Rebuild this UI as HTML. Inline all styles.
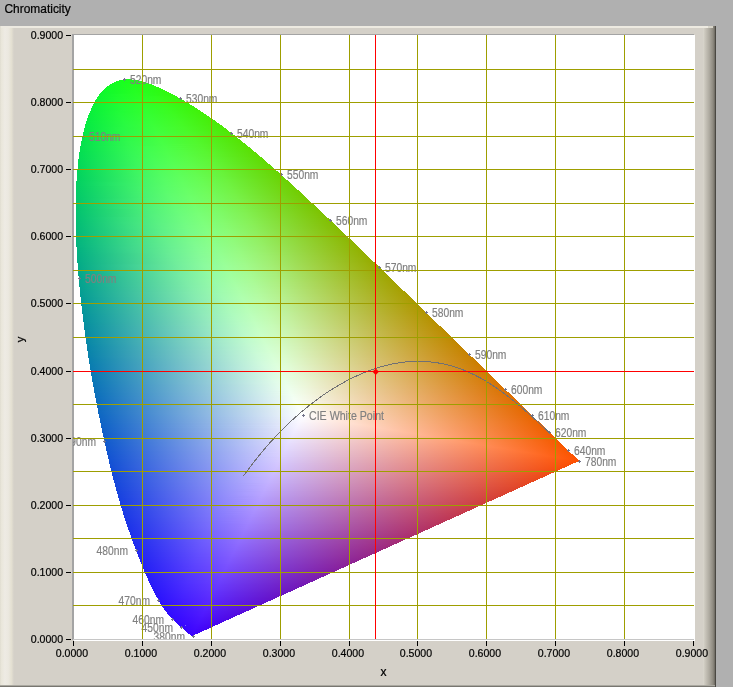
<!DOCTYPE html><html><head><meta charset="utf-8"><title>Chromaticity</title><style>
html,body{margin:0;padding:0}
body{width:733px;height:687px;background:#b0b0b0;overflow:hidden;position:relative;font-family:"Liberation Sans",sans-serif;font-size:11px;color:#000}
.abs{position:absolute}
#title{left:4px;top:1px;font-size:12.6px;line-height:15px;transform:scaleX(0.955);transform-origin:0 0;white-space:nowrap}
#panel{left:0;top:26px;width:716px;height:661px;background:#d4d0c8}
svg{position:absolute;left:0;top:0;will-change:transform}
svg text{font-family:"Liberation Sans",sans-serif;font-size:11.5px}
svg text.lb{font-size:12.2px;stroke:#808080;stroke-width:0.18px}

</style></head><body>
<div id="panel" class="abs"></div>
<svg width="733" height="687" viewBox="0 0 733 687">
<defs><linearGradient id="lg" x1="0" x2="1"><stop offset="0" stop-color="#dfdcd0"/><stop offset="0.1" stop-color="#e9e6da"/><stop offset="0.35" stop-color="#eeebe4"/><stop offset="0.6" stop-color="#ebe8df"/><stop offset="0.82" stop-color="#e4e0d2"/><stop offset="1" stop-color="#d4d0c8"/></linearGradient><linearGradient id="rg" x1="0" x2="1"><stop offset="0" stop-color="#dad7ce"/><stop offset="0.15" stop-color="#ccc8be"/><stop offset="0.5" stop-color="#b0aca2"/><stop offset="0.85" stop-color="#8c887e"/><stop offset="1" stop-color="#6a675f"/></linearGradient></defs>
<rect x="0" y="26" width="14" height="661" fill="url(#lg)"/>
<rect x="703" y="26" width="12" height="661" fill="url(#rg)"/><rect x="715" y="26" width="1" height="661" fill="#4a4842"/>
<rect x="1" y="26" width="707" height="2" fill="#edeae1"/><rect x="708" y="26" width="5" height="2" fill="#d8d5ca"/>
<rect x="0" y="685" width="715" height="1" fill="#aaa8a0"/><rect x="0" y="686" width="715" height="1" fill="#787670"/>
<rect x="72" y="34" width="622" height="607" fill="#a4a4a4"/>
<rect x="74" y="35" width="621" height="606" fill="#fff"/>
<rect x="73" y="639" width="621" height="1" fill="#c6c6c6"/>
<rect x="72" y="640" width="2" height="1" fill="#d4d0c8"/>
<clipPath id="pc"><rect x="73" y="35" width="622" height="604"/></clipPath>
<g clip-path="url(#pc)">
<defs><linearGradient id="g0" gradientUnits="userSpaceOnUse" x1="124" x2="132"><stop offset="0" stop-color="#1aff1c"/><stop offset="1" stop-color="#1eff19"/></linearGradient><linearGradient id="g1" gradientUnits="userSpaceOnUse" x1="119" x2="139"><stop offset="0" stop-color="#17fe1f"/><stop offset="1" stop-color="#21fe16"/></linearGradient><linearGradient id="g2" gradientUnits="userSpaceOnUse" x1="116" x2="143"><stop offset="0" stop-color="#16fe21"/><stop offset="1" stop-color="#23fe15"/></linearGradient><linearGradient id="g3" gradientUnits="userSpaceOnUse" x1="114" x2="146"><stop offset="0" stop-color="#15fe22"/><stop offset="1" stop-color="#25fe14"/></linearGradient><linearGradient id="g4" gradientUnits="userSpaceOnUse" x1="112" x2="149"><stop offset="0" stop-color="#14fd24"/><stop offset="0.541" stop-color="#1fff1d"/><stop offset="1" stop-color="#26fd13"/></linearGradient><linearGradient id="g5" gradientUnits="userSpaceOnUse" x1="110" x2="152"><stop offset="0" stop-color="#13fd25"/><stop offset="0.524" stop-color="#20ff1e"/><stop offset="1" stop-color="#28fd12"/></linearGradient><linearGradient id="g6" gradientUnits="userSpaceOnUse" x1="109" x2="154"><stop offset="0" stop-color="#12fc26"/><stop offset="0.533" stop-color="#21ff1e"/><stop offset="1" stop-color="#29fc12"/></linearGradient><linearGradient id="g7" gradientUnits="userSpaceOnUse" x1="107" x2="156"><stop offset="0" stop-color="#11fc27"/><stop offset="0.51" stop-color="#21ff1f"/><stop offset="1" stop-color="#2afc11"/></linearGradient><linearGradient id="g8" gradientUnits="userSpaceOnUse" x1="106" x2="159"><stop offset="0" stop-color="#11fb28"/><stop offset="0.528" stop-color="#22ff1f"/><stop offset="1" stop-color="#2bfb11"/></linearGradient><linearGradient id="g9" gradientUnits="userSpaceOnUse" x1="105" x2="161"><stop offset="0" stop-color="#10fb29"/><stop offset="0.518" stop-color="#23ff20"/><stop offset="1" stop-color="#2cfb10"/></linearGradient><linearGradient id="g10" gradientUnits="userSpaceOnUse" x1="104" x2="163"><stop offset="0" stop-color="#10fa2a"/><stop offset="0.525" stop-color="#23ff21"/><stop offset="1" stop-color="#2dfa10"/></linearGradient><linearGradient id="g11" gradientUnits="userSpaceOnUse" x1="103" x2="165"><stop offset="0" stop-color="#0ffa2b"/><stop offset="0.516" stop-color="#24ff22"/><stop offset="1" stop-color="#2efa0f"/></linearGradient><linearGradient id="g12" gradientUnits="userSpaceOnUse" x1="102" x2="167"><stop offset="0" stop-color="#0ff92c"/><stop offset="0.508" stop-color="#24ff23"/><stop offset="1" stop-color="#2ff90f"/></linearGradient><linearGradient id="g13" gradientUnits="userSpaceOnUse" x1="101" x2="169"><stop offset="0" stop-color="#0ef92d"/><stop offset="0.515" stop-color="#25ff23"/><stop offset="1" stop-color="#30f90e"/></linearGradient><linearGradient id="g14" gradientUnits="userSpaceOnUse" x1="100" x2="171"><stop offset="0" stop-color="#0ef82e"/><stop offset="0.507" stop-color="#26ff24"/><stop offset="1" stop-color="#31f90e"/></linearGradient><linearGradient id="g15" gradientUnits="userSpaceOnUse" x1="99" x2="173"><stop offset="0" stop-color="#0df82f"/><stop offset="0.284" stop-color="#1dfe2b"/><stop offset="0.514" stop-color="#27ff24"/><stop offset="1" stop-color="#32f80d"/></linearGradient><linearGradient id="g16" gradientUnits="userSpaceOnUse" x1="99" x2="175"><stop offset="0" stop-color="#0df82f"/><stop offset="0.289" stop-color="#1efe2b"/><stop offset="0.513" stop-color="#27ff25"/><stop offset="1" stop-color="#33f80d"/></linearGradient><linearGradient id="g17" gradientUnits="userSpaceOnUse" x1="98" x2="177"><stop offset="0" stop-color="#0df730"/><stop offset="0.291" stop-color="#1efd2c"/><stop offset="0.506" stop-color="#28ff26"/><stop offset="0.747" stop-color="#2ffd1b"/><stop offset="1" stop-color="#34f70d"/></linearGradient><linearGradient id="g18" gradientUnits="userSpaceOnUse" x1="97" x2="178"><stop offset="0" stop-color="#0cf731"/><stop offset="0.247" stop-color="#1cfd2e"/><stop offset="0.506" stop-color="#28ff27"/><stop offset="0.741" stop-color="#30fd1c"/><stop offset="1" stop-color="#35f70d"/></linearGradient><linearGradient id="g19" gradientUnits="userSpaceOnUse" x1="97" x2="180"><stop offset="0" stop-color="#0cf631"/><stop offset="0.241" stop-color="#1cfc2f"/><stop offset="0.506" stop-color="#29ff27"/><stop offset="0.735" stop-color="#31fd1c"/><stop offset="1" stop-color="#36f60c"/></linearGradient><linearGradient id="g20" gradientUnits="userSpaceOnUse" x1="96" x2="182"><stop offset="0" stop-color="#0cf632"/><stop offset="0.256" stop-color="#1dfd2f"/><stop offset="0.5" stop-color="#2aff28"/><stop offset="0.721" stop-color="#31fd1d"/><stop offset="1" stop-color="#37f60c"/></linearGradient><linearGradient id="g21" gradientUnits="userSpaceOnUse" x1="95" x2="184"><stop offset="0" stop-color="#0bf533"/><stop offset="0.258" stop-color="#1dfc30"/><stop offset="0.506" stop-color="#2bff29"/><stop offset="0.719" stop-color="#32fd1e"/><stop offset="1" stop-color="#38f50b"/></linearGradient><linearGradient id="g22" gradientUnits="userSpaceOnUse" x1="95" x2="185"><stop offset="0" stop-color="#0bf534"/><stop offset="0.267" stop-color="#1efd30"/><stop offset="0.5" stop-color="#2bff29"/><stop offset="0.722" stop-color="#33fd1e"/><stop offset="1" stop-color="#39f50b"/></linearGradient><linearGradient id="g23" gradientUnits="userSpaceOnUse" x1="94" x2="187"><stop offset="0" stop-color="#0bf435"/><stop offset="0.269" stop-color="#1efc31"/><stop offset="0.505" stop-color="#2cff2a"/><stop offset="0.71" stop-color="#33fd1f"/><stop offset="1" stop-color="#39f40b"/></linearGradient><linearGradient id="g24" gradientUnits="userSpaceOnUse" x1="94" x2="189"><stop offset="0" stop-color="#0bf435"/><stop offset="0.274" stop-color="#1ffd32"/><stop offset="0.505" stop-color="#2dff2a"/><stop offset="0.737" stop-color="#35fc1d"/><stop offset="1" stop-color="#3af40a"/></linearGradient><linearGradient id="g25" gradientUnits="userSpaceOnUse" x1="93" x2="190"><stop offset="0" stop-color="#0af336"/><stop offset="0.278" stop-color="#20fc33"/><stop offset="0.505" stop-color="#2dff2b"/><stop offset="0.732" stop-color="#36fc1e"/><stop offset="1" stop-color="#3bf40b"/></linearGradient><linearGradient id="g26" gradientUnits="userSpaceOnUse" x1="93" x2="192"><stop offset="0" stop-color="#0af336"/><stop offset="0.283" stop-color="#21fd33"/><stop offset="0.505" stop-color="#2eff2c"/><stop offset="0.727" stop-color="#36fc1f"/><stop offset="1" stop-color="#3cf30a"/></linearGradient><linearGradient id="g27" gradientUnits="userSpaceOnUse" x1="92" x2="194"><stop offset="0" stop-color="#0af237"/><stop offset="0.284" stop-color="#21fc34"/><stop offset="0.5" stop-color="#2fff2d"/><stop offset="0.725" stop-color="#37fc1f"/><stop offset="1" stop-color="#3df20a"/></linearGradient><linearGradient id="g28" gradientUnits="userSpaceOnUse" x1="92" x2="195"><stop offset="0" stop-color="#0af238"/><stop offset="0.291" stop-color="#22fc35"/><stop offset="0.505" stop-color="#2fff2d"/><stop offset="0.718" stop-color="#38fc20"/><stop offset="1" stop-color="#3ef20a"/></linearGradient><linearGradient id="g29" gradientUnits="userSpaceOnUse" x1="91" x2="197"><stop offset="0" stop-color="#09f239"/><stop offset="0.292" stop-color="#22fc35"/><stop offset="0.5" stop-color="#30ff2e"/><stop offset="0.717" stop-color="#39fc21"/><stop offset="1" stop-color="#3ff209"/></linearGradient><linearGradient id="g30" gradientUnits="userSpaceOnUse" x1="91" x2="198"><stop offset="0" stop-color="#09f139"/><stop offset="0.299" stop-color="#23fc36"/><stop offset="0.505" stop-color="#31ff2f"/><stop offset="0.72" stop-color="#39fc21"/><stop offset="1" stop-color="#3ff109"/></linearGradient><linearGradient id="g31" gradientUnits="userSpaceOnUse" x1="91" x2="200"><stop offset="0" stop-color="#09f13a"/><stop offset="0.294" stop-color="#24fc37"/><stop offset="0.505" stop-color="#32ff2f"/><stop offset="0.706" stop-color="#3afc22"/><stop offset="1" stop-color="#40f109"/></linearGradient><linearGradient id="g32" gradientUnits="userSpaceOnUse" x1="90" x2="201"><stop offset="0" stop-color="#09f03a"/><stop offset="0.252" stop-color="#20fb38"/><stop offset="0.505" stop-color="#32ff30"/><stop offset="0.712" stop-color="#3bfc22"/><stop offset="1" stop-color="#41f109"/></linearGradient><linearGradient id="g33" gradientUnits="userSpaceOnUse" x1="90" x2="203"><stop offset="0" stop-color="#09f03b"/><stop offset="0.257" stop-color="#21fb39"/><stop offset="0.504" stop-color="#33ff30"/><stop offset="0.726" stop-color="#3cfb21"/><stop offset="1" stop-color="#42f008"/></linearGradient><linearGradient id="g34" gradientUnits="userSpaceOnUse" x1="89" x2="204"><stop offset="0" stop-color="#08ef3c"/><stop offset="0.261" stop-color="#22fb3a"/><stop offset="0.504" stop-color="#33ff31"/><stop offset="0.73" stop-color="#3dfb21"/><stop offset="1" stop-color="#42f008"/></linearGradient><linearGradient id="g35" gradientUnits="userSpaceOnUse" x1="89" x2="206"><stop offset="0" stop-color="#08ef3c"/><stop offset="0.265" stop-color="#23fb3a"/><stop offset="0.504" stop-color="#34ff32"/><stop offset="0.726" stop-color="#3efb22"/><stop offset="1" stop-color="#43ef08"/></linearGradient><linearGradient id="g36" gradientUnits="userSpaceOnUse" x1="88" x2="207"><stop offset="0" stop-color="#08ee3d"/><stop offset="0.269" stop-color="#23fb3b"/><stop offset="0.504" stop-color="#35ff33"/><stop offset="0.723" stop-color="#3efb23"/><stop offset="1" stop-color="#44ef08"/></linearGradient><linearGradient id="g37" gradientUnits="userSpaceOnUse" x1="88" x2="209"><stop offset="0" stop-color="#08ee3e"/><stop offset="0.273" stop-color="#24fb3c"/><stop offset="0.504" stop-color="#36ff33"/><stop offset="0.719" stop-color="#3ffb23"/><stop offset="1" stop-color="#45ee07"/></linearGradient><linearGradient id="g38" gradientUnits="userSpaceOnUse" x1="88" x2="210"><stop offset="0" stop-color="#08ee3e"/><stop offset="0.279" stop-color="#25fb3c"/><stop offset="0.5" stop-color="#36ff34"/><stop offset="0.713" stop-color="#3ffb24"/><stop offset="1" stop-color="#45ee08"/></linearGradient><linearGradient id="g39" gradientUnits="userSpaceOnUse" x1="87" x2="212"><stop offset="0" stop-color="#07ed3f"/><stop offset="0.28" stop-color="#25fb3d"/><stop offset="0.496" stop-color="#37ff35"/><stop offset="0.712" stop-color="#40fb25"/><stop offset="1" stop-color="#46ed07"/></linearGradient><linearGradient id="g40" gradientUnits="userSpaceOnUse" x1="87" x2="213"><stop offset="0" stop-color="#07ed3f"/><stop offset="0.286" stop-color="#26fb3e"/><stop offset="0.5" stop-color="#37ff35"/><stop offset="0.706" stop-color="#41fb26"/><stop offset="1" stop-color="#47ed07"/></linearGradient><linearGradient id="g41" gradientUnits="userSpaceOnUse" x1="87" x2="215"><stop offset="0" stop-color="#07ec40"/><stop offset="0.281" stop-color="#27fb3e"/><stop offset="0.5" stop-color="#38ff36"/><stop offset="0.727" stop-color="#42fa24"/><stop offset="1" stop-color="#48ec07"/></linearGradient><linearGradient id="g42" gradientUnits="userSpaceOnUse" x1="86" x2="216"><stop offset="0" stop-color="#07ec41"/><stop offset="0.292" stop-color="#28fb3f"/><stop offset="0.5" stop-color="#39ff37"/><stop offset="0.723" stop-color="#43fa25"/><stop offset="1" stop-color="#48ec07"/></linearGradient><linearGradient id="g43" gradientUnits="userSpaceOnUse" x1="86" x2="217"><stop offset="0" stop-color="#07eb41"/><stop offset="0.29" stop-color="#28fb40"/><stop offset="0.496" stop-color="#39ff38"/><stop offset="0.725" stop-color="#44fa25"/><stop offset="1" stop-color="#49eb07"/></linearGradient><linearGradient id="g44" gradientUnits="userSpaceOnUse" x1="86" x2="219"><stop offset="0" stop-color="#07eb42"/><stop offset="0.293" stop-color="#29fb40"/><stop offset="0.496" stop-color="#3aff38"/><stop offset="0.714" stop-color="#44fa26"/><stop offset="1" stop-color="#4aeb06"/></linearGradient><linearGradient id="g45" gradientUnits="userSpaceOnUse" x1="85" x2="220"><stop offset="0" stop-color="#06ea43"/><stop offset="0.296" stop-color="#29fb41"/><stop offset="0.496" stop-color="#3bff39"/><stop offset="0.719" stop-color="#45fa26"/><stop offset="1" stop-color="#4aea06"/></linearGradient><linearGradient id="g46" gradientUnits="userSpaceOnUse" x1="85" x2="222"><stop offset="0" stop-color="#06ea43"/><stop offset="0.299" stop-color="#2afb42"/><stop offset="0.496" stop-color="#3bff3a"/><stop offset="0.708" stop-color="#45fa27"/><stop offset="1" stop-color="#4bea06"/></linearGradient><linearGradient id="g47" gradientUnits="userSpaceOnUse" x1="85" x2="223"><stop offset="0" stop-color="#06ea44"/><stop offset="0.304" stop-color="#2bfb42"/><stop offset="0.5" stop-color="#3cff3a"/><stop offset="0.71" stop-color="#46fa28"/><stop offset="1" stop-color="#4ce906"/></linearGradient><linearGradient id="g48" gradientUnits="userSpaceOnUse" x1="85" x2="224"><stop offset="0" stop-color="#06e944"/><stop offset="0.259" stop-color="#27f944"/><stop offset="0.496" stop-color="#3dff3b"/><stop offset="0.705" stop-color="#47fa29"/><stop offset="1" stop-color="#4ce906"/></linearGradient><linearGradient id="g49" gradientUnits="userSpaceOnUse" x1="84" x2="226"><stop offset="0" stop-color="#06e845"/><stop offset="0.268" stop-color="#28f944"/><stop offset="0.5" stop-color="#3eff3b"/><stop offset="0.704" stop-color="#47fa29"/><stop offset="1" stop-color="#4de805"/></linearGradient><linearGradient id="g50" gradientUnits="userSpaceOnUse" x1="84" x2="227"><stop offset="0" stop-color="#06e845"/><stop offset="0.266" stop-color="#28f945"/><stop offset="0.497" stop-color="#3eff3c"/><stop offset="0.706" stop-color="#48f929"/><stop offset="1" stop-color="#4ee805"/></linearGradient><linearGradient id="g51" gradientUnits="userSpaceOnUse" x1="84" x2="228"><stop offset="0" stop-color="#06e846"/><stop offset="0.271" stop-color="#29f946"/><stop offset="0.493" stop-color="#3fff3d"/><stop offset="0.701" stop-color="#49fa2a"/><stop offset="1" stop-color="#4ee805"/></linearGradient><linearGradient id="g52" gradientUnits="userSpaceOnUse" x1="84" x2="229"><stop offset="0" stop-color="#06e746"/><stop offset="0.276" stop-color="#2af946"/><stop offset="0.497" stop-color="#3fff3e"/><stop offset="0.717" stop-color="#4af929"/><stop offset="1" stop-color="#4fe706"/></linearGradient><linearGradient id="g53" gradientUnits="userSpaceOnUse" x1="83" x2="231"><stop offset="0" stop-color="#05e747"/><stop offset="0.277" stop-color="#2af947"/><stop offset="0.493" stop-color="#40ff3f"/><stop offset="0.716" stop-color="#4bf92a"/><stop offset="1" stop-color="#50e705"/></linearGradient><linearGradient id="g54" gradientUnits="userSpaceOnUse" x1="83" x2="232"><stop offset="0" stop-color="#05e648"/><stop offset="0.282" stop-color="#2bf948"/><stop offset="0.497" stop-color="#41ff3f"/><stop offset="0.711" stop-color="#4bf92b"/><stop offset="1" stop-color="#50e605"/></linearGradient><linearGradient id="g55" gradientUnits="userSpaceOnUse" x1="83" x2="233"><stop offset="0" stop-color="#05e648"/><stop offset="0.28" stop-color="#2cf948"/><stop offset="0.5" stop-color="#42ff40"/><stop offset="0.713" stop-color="#4cf92b"/><stop offset="1" stop-color="#51e605"/></linearGradient><linearGradient id="g56" gradientUnits="userSpaceOnUse" x1="83" x2="235"><stop offset="0" stop-color="#05e649"/><stop offset="0.283" stop-color="#2df949"/><stop offset="0.493" stop-color="#42ff40"/><stop offset="0.711" stop-color="#4df82b"/><stop offset="1" stop-color="#52e505"/></linearGradient><linearGradient id="g57" gradientUnits="userSpaceOnUse" x1="82" x2="236"><stop offset="0" stop-color="#05e54a"/><stop offset="0.292" stop-color="#2ef94a"/><stop offset="0.5" stop-color="#43ff41"/><stop offset="0.708" stop-color="#4df92c"/><stop offset="1" stop-color="#52e505"/></linearGradient><linearGradient id="g58" gradientUnits="userSpaceOnUse" x1="82" x2="237"><stop offset="0" stop-color="#05e44a"/><stop offset="0.29" stop-color="#2ef94a"/><stop offset="0.497" stop-color="#43ff42"/><stop offset="0.71" stop-color="#4ef82d"/><stop offset="1" stop-color="#53e505"/></linearGradient><linearGradient id="g59" gradientUnits="userSpaceOnUse" x1="82" x2="238"><stop offset="0" stop-color="#05e44a"/><stop offset="0.295" stop-color="#2ff94b"/><stop offset="0.5" stop-color="#44ff42"/><stop offset="0.724" stop-color="#4ff82b"/><stop offset="1" stop-color="#53e405"/></linearGradient><linearGradient id="g60" gradientUnits="userSpaceOnUse" x1="82" x2="240"><stop offset="0" stop-color="#05e44b"/><stop offset="0.291" stop-color="#2ff94c"/><stop offset="0.494" stop-color="#45ff43"/><stop offset="0.715" stop-color="#50f82c"/><stop offset="1" stop-color="#54e304"/></linearGradient><linearGradient id="g61" gradientUnits="userSpaceOnUse" x1="82" x2="241"><stop offset="0" stop-color="#05e34c"/><stop offset="0.296" stop-color="#30f94c"/><stop offset="0.497" stop-color="#46ff44"/><stop offset="0.717" stop-color="#51f82d"/><stop offset="1" stop-color="#55e304"/></linearGradient><linearGradient id="g62" gradientUnits="userSpaceOnUse" x1="81" x2="242"><stop offset="0" stop-color="#04e24c"/><stop offset="0.298" stop-color="#31f94d"/><stop offset="0.497" stop-color="#46ff45"/><stop offset="0.714" stop-color="#51f82e"/><stop offset="1" stop-color="#55e304"/></linearGradient><linearGradient id="g63" gradientUnits="userSpaceOnUse" x1="81" x2="243"><stop offset="0" stop-color="#04e24d"/><stop offset="0.302" stop-color="#32f94e"/><stop offset="0.5" stop-color="#47ff45"/><stop offset="0.716" stop-color="#52f82e"/><stop offset="1" stop-color="#56e204"/></linearGradient><linearGradient id="g64" gradientUnits="userSpaceOnUse" x1="81" x2="245"><stop offset="0" stop-color="#04e24d"/><stop offset="0.305" stop-color="#33f94e"/><stop offset="0.494" stop-color="#47ff46"/><stop offset="0.707" stop-color="#52f82f"/><stop offset="1" stop-color="#57e204"/></linearGradient><linearGradient id="g65" gradientUnits="userSpaceOnUse" x1="81" x2="246"><stop offset="0" stop-color="#04e14e"/><stop offset="0.303" stop-color="#33f94f"/><stop offset="0.497" stop-color="#48ff46"/><stop offset="0.594" stop-color="#4ffd3d"/><stop offset="0.721" stop-color="#54f72e"/><stop offset="1" stop-color="#57e104"/></linearGradient><linearGradient id="g66" gradientUnits="userSpaceOnUse" x1="81" x2="247"><stop offset="0" stop-color="#04e14e"/><stop offset="0.307" stop-color="#34f94f"/><stop offset="0.5" stop-color="#49ff47"/><stop offset="0.723" stop-color="#54f72e"/><stop offset="1" stop-color="#58e104"/></linearGradient><linearGradient id="g67" gradientUnits="userSpaceOnUse" x1="80" x2="248"><stop offset="0" stop-color="#04e04f"/><stop offset="0.28" stop-color="#30f751"/><stop offset="0.387" stop-color="#3efd4e"/><stop offset="0.5" stop-color="#4aff48"/><stop offset="0.595" stop-color="#50fd3f"/><stop offset="0.726" stop-color="#55f62e"/><stop offset="1" stop-color="#58e104"/></linearGradient><linearGradient id="g68" gradientUnits="userSpaceOnUse" x1="80" x2="250"><stop offset="0" stop-color="#04e04f"/><stop offset="0.276" stop-color="#30f751"/><stop offset="0.388" stop-color="#3ffd4f"/><stop offset="0.5" stop-color="#4bff48"/><stop offset="0.718" stop-color="#56f72f"/><stop offset="1" stop-color="#59e003"/></linearGradient><linearGradient id="g69" gradientUnits="userSpaceOnUse" x1="80" x2="251"><stop offset="0" stop-color="#04df50"/><stop offset="0.281" stop-color="#31f752"/><stop offset="0.386" stop-color="#3ffd50"/><stop offset="0.497" stop-color="#4bff49"/><stop offset="0.591" stop-color="#51fd40"/><stop offset="0.719" stop-color="#56f630"/><stop offset="1" stop-color="#5adf03"/></linearGradient><linearGradient id="g70" gradientUnits="userSpaceOnUse" x1="80" x2="252"><stop offset="0" stop-color="#04df50"/><stop offset="0.279" stop-color="#31f753"/><stop offset="0.39" stop-color="#40fd50"/><stop offset="0.5" stop-color="#4cff4a"/><stop offset="0.715" stop-color="#57f731"/><stop offset="1" stop-color="#5adf03"/></linearGradient><linearGradient id="g71" gradientUnits="userSpaceOnUse" x1="80" x2="253"><stop offset="0" stop-color="#04df51"/><stop offset="0.283" stop-color="#33f753"/><stop offset="0.393" stop-color="#41fd51"/><stop offset="0.497" stop-color="#4cff4b"/><stop offset="0.59" stop-color="#53fd41"/><stop offset="0.717" stop-color="#58f631"/><stop offset="1" stop-color="#5bdf03"/></linearGradient><linearGradient id="g72" gradientUnits="userSpaceOnUse" x1="80" x2="254"><stop offset="0" stop-color="#04de51"/><stop offset="0.287" stop-color="#34f754"/><stop offset="0.391" stop-color="#42fd51"/><stop offset="0.494" stop-color="#4dff4b"/><stop offset="0.586" stop-color="#53fd42"/><stop offset="0.713" stop-color="#58f732"/><stop offset="1" stop-color="#5bde04"/></linearGradient><linearGradient id="g73" gradientUnits="userSpaceOnUse" x1="79" x2="256"><stop offset="0" stop-color="#03dd52"/><stop offset="0.288" stop-color="#34f755"/><stop offset="0.395" stop-color="#43fd52"/><stop offset="0.497" stop-color="#4eff4c"/><stop offset="0.605" stop-color="#55fc41"/><stop offset="0.723" stop-color="#59f631"/><stop offset="1" stop-color="#5cdd03"/></linearGradient><linearGradient id="g74" gradientUnits="userSpaceOnUse" x1="79" x2="257"><stop offset="0" stop-color="#03dd53"/><stop offset="0.292" stop-color="#35f755"/><stop offset="0.393" stop-color="#43fd53"/><stop offset="0.494" stop-color="#4eff4d"/><stop offset="0.601" stop-color="#55fc42"/><stop offset="0.725" stop-color="#5af531"/><stop offset="1" stop-color="#5ddd03"/></linearGradient><linearGradient id="g75" gradientUnits="userSpaceOnUse" x1="79" x2="258"><stop offset="0" stop-color="#03dd53"/><stop offset="0.291" stop-color="#35f756"/><stop offset="0.397" stop-color="#44fd53"/><stop offset="0.497" stop-color="#4fff4d"/><stop offset="0.603" stop-color="#56fc42"/><stop offset="0.721" stop-color="#5bf632"/><stop offset="1" stop-color="#5ddd03"/></linearGradient><linearGradient id="g76" gradientUnits="userSpaceOnUse" x1="79" x2="259"><stop offset="0" stop-color="#03dc54"/><stop offset="0.294" stop-color="#36f757"/><stop offset="0.394" stop-color="#44fd54"/><stop offset="0.494" stop-color="#4fff4e"/><stop offset="0.6" stop-color="#57fc43"/><stop offset="0.722" stop-color="#5bf532"/><stop offset="1" stop-color="#5edc03"/></linearGradient><linearGradient id="g77" gradientUnits="userSpaceOnUse" x1="79" x2="260"><stop offset="0" stop-color="#03dc54"/><stop offset="0.298" stop-color="#37f757"/><stop offset="0.398" stop-color="#45fd55"/><stop offset="0.497" stop-color="#50ff4f"/><stop offset="0.602" stop-color="#58fc43"/><stop offset="0.718" stop-color="#5cf533"/><stop offset="1" stop-color="#5edc03"/></linearGradient><linearGradient id="g78" gradientUnits="userSpaceOnUse" x1="79" x2="262"><stop offset="0" stop-color="#03dc55"/><stop offset="0.295" stop-color="#37f758"/><stop offset="0.399" stop-color="#46fd55"/><stop offset="0.497" stop-color="#51ff4f"/><stop offset="0.596" stop-color="#58fc45"/><stop offset="0.716" stop-color="#5df534"/><stop offset="1" stop-color="#5fdb03"/></linearGradient><linearGradient id="g79" gradientUnits="userSpaceOnUse" x1="79" x2="263"><stop offset="0" stop-color="#03db55"/><stop offset="0.299" stop-color="#39f758"/><stop offset="0.397" stop-color="#47fd56"/><stop offset="0.495" stop-color="#52ff50"/><stop offset="0.598" stop-color="#59fc45"/><stop offset="0.712" stop-color="#5df535"/><stop offset="1" stop-color="#60db03"/></linearGradient><linearGradient id="g80" gradientUnits="userSpaceOnUse" x1="78" x2="264"><stop offset="0" stop-color="#03da56"/><stop offset="0.301" stop-color="#39f759"/><stop offset="0.403" stop-color="#48fd57"/><stop offset="0.495" stop-color="#52ff51"/><stop offset="0.581" stop-color="#58fd48"/><stop offset="0.71" stop-color="#5ef636"/><stop offset="1" stop-color="#60da03"/></linearGradient><linearGradient id="g81" gradientUnits="userSpaceOnUse" x1="78" x2="265"><stop offset="0" stop-color="#03da56"/><stop offset="0.305" stop-color="#3af75a"/><stop offset="0.401" stop-color="#48fd57"/><stop offset="0.497" stop-color="#53ff51"/><stop offset="0.599" stop-color="#5afc46"/><stop offset="0.722" stop-color="#5ff534"/><stop offset="1" stop-color="#61da03"/></linearGradient><linearGradient id="g82" gradientUnits="userSpaceOnUse" x1="78" x2="266"><stop offset="0" stop-color="#03d957"/><stop offset="0.309" stop-color="#3bf75a"/><stop offset="0.404" stop-color="#49fd58"/><stop offset="0.495" stop-color="#53ff52"/><stop offset="0.58" stop-color="#5afd49"/><stop offset="0.707" stop-color="#5ff637"/><stop offset="1" stop-color="#61da03"/></linearGradient><linearGradient id="g83" gradientUnits="userSpaceOnUse" x1="78" x2="267"><stop offset="0" stop-color="#03d957"/><stop offset="0.307" stop-color="#3bf75b"/><stop offset="0.402" stop-color="#49fd59"/><stop offset="0.497" stop-color="#54ff53"/><stop offset="0.598" stop-color="#5bfc48"/><stop offset="0.72" stop-color="#60f536"/><stop offset="1" stop-color="#62d903"/></linearGradient><linearGradient id="g84" gradientUnits="userSpaceOnUse" x1="78" x2="268"><stop offset="0" stop-color="#03d958"/><stop offset="0.311" stop-color="#3cf75c"/><stop offset="0.405" stop-color="#4afd59"/><stop offset="0.5" stop-color="#55ff53"/><stop offset="0.595" stop-color="#5cfc49"/><stop offset="0.721" stop-color="#61f436"/><stop offset="1" stop-color="#62d903"/></linearGradient><linearGradient id="g85" gradientUnits="userSpaceOnUse" x1="78" x2="270"><stop offset="0" stop-color="#03d858"/><stop offset="0.307" stop-color="#3cf75c"/><stop offset="0.406" stop-color="#4bfd5a"/><stop offset="0.495" stop-color="#56ff54"/><stop offset="0.594" stop-color="#5dfc49"/><stop offset="0.714" stop-color="#61f537"/><stop offset="1" stop-color="#63d802"/></linearGradient><linearGradient id="g86" gradientUnits="userSpaceOnUse" x1="78" x2="271"><stop offset="0" stop-color="#03d859"/><stop offset="0.311" stop-color="#3df75d"/><stop offset="0.404" stop-color="#4cfd5b"/><stop offset="0.497" stop-color="#57ff55"/><stop offset="0.591" stop-color="#5dfc4a"/><stop offset="0.715" stop-color="#62f437"/><stop offset="1" stop-color="#64d802"/></linearGradient><linearGradient id="g87" gradientUnits="userSpaceOnUse" x1="78" x2="272"><stop offset="0" stop-color="#03d759"/><stop offset="0.284" stop-color="#39f55e"/><stop offset="0.402" stop-color="#4cfd5b"/><stop offset="0.495" stop-color="#57ff56"/><stop offset="0.588" stop-color="#5efd4b"/><stop offset="0.711" stop-color="#63f538"/><stop offset="1" stop-color="#64d702"/></linearGradient><linearGradient id="g88" gradientUnits="userSpaceOnUse" x1="78" x2="273"><stop offset="0" stop-color="#03d75a"/><stop offset="0.282" stop-color="#39f55f"/><stop offset="0.405" stop-color="#4dfd5c"/><stop offset="0.497" stop-color="#58ff56"/><stop offset="0.59" stop-color="#5ffc4b"/><stop offset="0.713" stop-color="#63f439"/><stop offset="1" stop-color="#65d702"/></linearGradient><linearGradient id="g89" gradientUnits="userSpaceOnUse" x1="78" x2="274"><stop offset="0" stop-color="#03d75a"/><stop offset="0.286" stop-color="#3af55f"/><stop offset="0.408" stop-color="#4efd5d"/><stop offset="0.495" stop-color="#58ff57"/><stop offset="0.587" stop-color="#5ffd4c"/><stop offset="0.709" stop-color="#64f43a"/><stop offset="1" stop-color="#65d602"/></linearGradient><linearGradient id="g90" gradientUnits="userSpaceOnUse" x1="77" x2="275"><stop offset="0" stop-color="#02d65b"/><stop offset="0.293" stop-color="#3cf560"/><stop offset="0.409" stop-color="#4efd5d"/><stop offset="0.5" stop-color="#59ff57"/><stop offset="0.591" stop-color="#60fc4d"/><stop offset="0.722" stop-color="#65f338"/><stop offset="1" stop-color="#66d602"/></linearGradient><linearGradient id="g91" gradientUnits="userSpaceOnUse" x1="77" x2="276"><stop offset="0" stop-color="#02d55b"/><stop offset="0.291" stop-color="#3cf561"/><stop offset="0.412" stop-color="#4ffd5e"/><stop offset="0.497" stop-color="#5aff58"/><stop offset="0.593" stop-color="#61fc4d"/><stop offset="0.719" stop-color="#66f439"/><stop offset="1" stop-color="#66d602"/></linearGradient><linearGradient id="g92" gradientUnits="userSpaceOnUse" x1="77" x2="278"><stop offset="0" stop-color="#02d55c"/><stop offset="0.294" stop-color="#3df561"/><stop offset="0.408" stop-color="#50fd5f"/><stop offset="0.498" stop-color="#5bff59"/><stop offset="0.587" stop-color="#61fc4e"/><stop offset="0.716" stop-color="#66f33a"/><stop offset="1" stop-color="#67d502"/></linearGradient><linearGradient id="g93" gradientUnits="userSpaceOnUse" x1="77" x2="279"><stop offset="0" stop-color="#02d45c"/><stop offset="0.292" stop-color="#3df562"/><stop offset="0.411" stop-color="#51fd5f"/><stop offset="0.495" stop-color="#5bff5a"/><stop offset="0.584" stop-color="#62fc4f"/><stop offset="0.713" stop-color="#67f43b"/><stop offset="1" stop-color="#68d402"/></linearGradient><linearGradient id="g94" gradientUnits="userSpaceOnUse" x1="77" x2="280"><stop offset="0" stop-color="#02d45d"/><stop offset="0.296" stop-color="#3ef562"/><stop offset="0.409" stop-color="#51fd60"/><stop offset="0.498" stop-color="#5cff5a"/><stop offset="0.586" stop-color="#63fc4f"/><stop offset="0.714" stop-color="#68f33b"/><stop offset="1" stop-color="#68d402"/></linearGradient><linearGradient id="g95" gradientUnits="userSpaceOnUse" x1="77" x2="281"><stop offset="0" stop-color="#02d45d"/><stop offset="0.299" stop-color="#3ff563"/><stop offset="0.412" stop-color="#52fd61"/><stop offset="0.495" stop-color="#5cff5b"/><stop offset="0.583" stop-color="#63fc51"/><stop offset="0.711" stop-color="#68f43c"/><stop offset="1" stop-color="#69d402"/></linearGradient><linearGradient id="g96" gradientUnits="userSpaceOnUse" x1="77" x2="282"><stop offset="0" stop-color="#02d35e"/><stop offset="0.298" stop-color="#3ff564"/><stop offset="0.415" stop-color="#53fd61"/><stop offset="0.498" stop-color="#5dff5c"/><stop offset="0.585" stop-color="#64fc51"/><stop offset="0.712" stop-color="#69f33c"/><stop offset="1" stop-color="#69d302"/></linearGradient><linearGradient id="g97" gradientUnits="userSpaceOnUse" x1="77" x2="283"><stop offset="0" stop-color="#02d35e"/><stop offset="0.301" stop-color="#40f564"/><stop offset="0.413" stop-color="#53fd62"/><stop offset="0.495" stop-color="#5eff5c"/><stop offset="0.583" stop-color="#64fc52"/><stop offset="0.709" stop-color="#69f33d"/><stop offset="1" stop-color="#6ad302"/></linearGradient><linearGradient id="g98" gradientUnits="userSpaceOnUse" x1="77" x2="284"><stop offset="0" stop-color="#02d25f"/><stop offset="0.304" stop-color="#42f565"/><stop offset="0.415" stop-color="#54fd63"/><stop offset="0.498" stop-color="#5fff5d"/><stop offset="0.594" stop-color="#66fc51"/><stop offset="0.71" stop-color="#6af33e"/><stop offset="1" stop-color="#6ad202"/></linearGradient><linearGradient id="g99" gradientUnits="userSpaceOnUse" x1="77" x2="285"><stop offset="0" stop-color="#02d25f"/><stop offset="0.303" stop-color="#42f566"/><stop offset="0.413" stop-color="#55fd63"/><stop offset="0.495" stop-color="#5fff5e"/><stop offset="0.582" stop-color="#66fc53"/><stop offset="0.707" stop-color="#6bf33f"/><stop offset="1" stop-color="#6bd202"/></linearGradient><linearGradient id="g100" gradientUnits="userSpaceOnUse" x1="77" x2="286"><stop offset="0" stop-color="#02d260"/><stop offset="0.306" stop-color="#43f566"/><stop offset="0.416" stop-color="#56fd64"/><stop offset="0.498" stop-color="#60ff5e"/><stop offset="0.593" stop-color="#67fc52"/><stop offset="0.713" stop-color="#6cf33e"/><stop offset="1" stop-color="#6cd202"/></linearGradient><linearGradient id="g101" gradientUnits="userSpaceOnUse" x1="77" x2="288"><stop offset="0" stop-color="#02d160"/><stop offset="0.308" stop-color="#44f567"/><stop offset="0.417" stop-color="#57fd65"/><stop offset="0.498" stop-color="#61ff5f"/><stop offset="0.592" stop-color="#68fc52"/><stop offset="0.711" stop-color="#6cf33e"/><stop offset="1" stop-color="#6cd102"/></linearGradient><linearGradient id="g102" gradientUnits="userSpaceOnUse" x1="76" x2="289"><stop offset="0" stop-color="#02d061"/><stop offset="0.31" stop-color="#44f568"/><stop offset="0.418" stop-color="#57fd65"/><stop offset="0.498" stop-color="#61ff60"/><stop offset="0.592" stop-color="#68fc54"/><stop offset="0.709" stop-color="#6df33f"/><stop offset="1" stop-color="#6dd002"/></linearGradient><linearGradient id="g103" gradientUnits="userSpaceOnUse" x1="76" x2="290"><stop offset="0" stop-color="#02d061"/><stop offset="0.159" stop-color="#25e466"/><stop offset="0.313" stop-color="#45f568"/><stop offset="0.421" stop-color="#58fd66"/><stop offset="0.495" stop-color="#62ff61"/><stop offset="0.593" stop-color="#69fc54"/><stop offset="0.71" stop-color="#6ef240"/><stop offset="1" stop-color="#6dd002"/></linearGradient><linearGradient id="g104" gradientUnits="userSpaceOnUse" x1="76" x2="291"><stop offset="0" stop-color="#02cf62"/><stop offset="0.163" stop-color="#26e567"/><stop offset="0.316" stop-color="#46f569"/><stop offset="0.419" stop-color="#58fd67"/><stop offset="0.498" stop-color="#63ff61"/><stop offset="0.591" stop-color="#6afc55"/><stop offset="0.707" stop-color="#6ef341"/><stop offset="1" stop-color="#6ecf02"/></linearGradient><linearGradient id="g105" gradientUnits="userSpaceOnUse" x1="76" x2="292"><stop offset="0" stop-color="#02cf62"/><stop offset="0.167" stop-color="#27e568"/><stop offset="0.315" stop-color="#46f56a"/><stop offset="0.421" stop-color="#59fd67"/><stop offset="0.495" stop-color="#63ff62"/><stop offset="0.588" stop-color="#6afc56"/><stop offset="0.704" stop-color="#6ff342"/><stop offset="1" stop-color="#6ecf02"/></linearGradient><linearGradient id="g106" gradientUnits="userSpaceOnUse" x1="76" x2="293"><stop offset="0" stop-color="#02cf63"/><stop offset="0.171" stop-color="#29e568"/><stop offset="0.318" stop-color="#47f56a"/><stop offset="0.419" stop-color="#5afd68"/><stop offset="0.498" stop-color="#64ff62"/><stop offset="0.59" stop-color="#6bfc56"/><stop offset="0.705" stop-color="#6ff342"/><stop offset="1" stop-color="#6fcf02"/></linearGradient><linearGradient id="g107" gradientUnits="userSpaceOnUse" x1="76" x2="294"><stop offset="0" stop-color="#02ce63"/><stop offset="0.289" stop-color="#42f26b"/><stop offset="0.404" stop-color="#58fc69"/><stop offset="0.495" stop-color="#64ff63"/><stop offset="0.587" stop-color="#6cfc57"/><stop offset="0.702" stop-color="#70f343"/><stop offset="1" stop-color="#6fce02"/></linearGradient><linearGradient id="g108" gradientUnits="userSpaceOnUse" x1="76" x2="295"><stop offset="0" stop-color="#02ce64"/><stop offset="0.292" stop-color="#43f36c"/><stop offset="0.402" stop-color="#58fc6a"/><stop offset="0.498" stop-color="#65ff64"/><stop offset="0.589" stop-color="#6cfc58"/><stop offset="0.703" stop-color="#71f343"/><stop offset="1" stop-color="#70ce02"/></linearGradient><linearGradient id="g109" gradientUnits="userSpaceOnUse" x1="76" x2="296"><stop offset="0" stop-color="#02cd64"/><stop offset="0.295" stop-color="#44f36c"/><stop offset="0.405" stop-color="#59fc6b"/><stop offset="0.495" stop-color="#66ff65"/><stop offset="0.586" stop-color="#6dfc59"/><stop offset="0.7" stop-color="#71f344"/><stop offset="1" stop-color="#71cd02"/></linearGradient><linearGradient id="g110" gradientUnits="userSpaceOnUse" x1="76" x2="297"><stop offset="0" stop-color="#02cd65"/><stop offset="0.294" stop-color="#45f26d"/><stop offset="0.403" stop-color="#59fc6b"/><stop offset="0.498" stop-color="#67ff65"/><stop offset="0.588" stop-color="#6efc59"/><stop offset="0.71" stop-color="#72f243"/><stop offset="1" stop-color="#71cd02"/></linearGradient><linearGradient id="g111" gradientUnits="userSpaceOnUse" x1="76" x2="299"><stop offset="0" stop-color="#02cc65"/><stop offset="0.296" stop-color="#46f36d"/><stop offset="0.404" stop-color="#5afc6c"/><stop offset="0.498" stop-color="#68ff66"/><stop offset="0.583" stop-color="#6efc5a"/><stop offset="0.704" stop-color="#73f244"/><stop offset="1" stop-color="#72cc01"/></linearGradient><linearGradient id="g112" gradientUnits="userSpaceOnUse" x1="76" x2="300"><stop offset="0" stop-color="#02cc65"/><stop offset="0.299" stop-color="#47f36e"/><stop offset="0.406" stop-color="#5bfc6d"/><stop offset="0.496" stop-color="#68ff67"/><stop offset="0.585" stop-color="#6ffc5a"/><stop offset="0.705" stop-color="#73f244"/><stop offset="1" stop-color="#72cc01"/></linearGradient><linearGradient id="g113" gradientUnits="userSpaceOnUse" x1="76" x2="301"><stop offset="0" stop-color="#02cb66"/><stop offset="0.298" stop-color="#47f36f"/><stop offset="0.404" stop-color="#5bfc6d"/><stop offset="0.498" stop-color="#69ff67"/><stop offset="0.582" stop-color="#70fc5b"/><stop offset="0.702" stop-color="#74f245"/><stop offset="1" stop-color="#73cb01"/></linearGradient><linearGradient id="g114" gradientUnits="userSpaceOnUse" x1="76" x2="302"><stop offset="0" stop-color="#02cb66"/><stop offset="0.301" stop-color="#48f36f"/><stop offset="0.407" stop-color="#5dfc6e"/><stop offset="0.496" stop-color="#69ff68"/><stop offset="0.584" stop-color="#70fc5c"/><stop offset="0.699" stop-color="#75f246"/><stop offset="1" stop-color="#73cb01"/></linearGradient><linearGradient id="g115" gradientUnits="userSpaceOnUse" x1="76" x2="303"><stop offset="0" stop-color="#02cb67"/><stop offset="0.304" stop-color="#49f370"/><stop offset="0.41" stop-color="#5efc6f"/><stop offset="0.498" stop-color="#6aff68"/><stop offset="0.581" stop-color="#71fc5d"/><stop offset="0.7" stop-color="#75f247"/><stop offset="1" stop-color="#74ca01"/></linearGradient><linearGradient id="g116" gradientUnits="userSpaceOnUse" x1="76" x2="304"><stop offset="0" stop-color="#02ca67"/><stop offset="0.303" stop-color="#49f371"/><stop offset="0.408" stop-color="#5efc6f"/><stop offset="0.496" stop-color="#6bff69"/><stop offset="0.583" stop-color="#72fc5d"/><stop offset="0.697" stop-color="#76f248"/><stop offset="1" stop-color="#74ca01"/></linearGradient><linearGradient id="g117" gradientUnits="userSpaceOnUse" x1="76" x2="305"><stop offset="0" stop-color="#02ca68"/><stop offset="0.306" stop-color="#4af371"/><stop offset="0.41" stop-color="#5ffc70"/><stop offset="0.498" stop-color="#6cff6a"/><stop offset="0.581" stop-color="#72fc5e"/><stop offset="0.699" stop-color="#77f248"/><stop offset="1" stop-color="#75ca01"/></linearGradient><linearGradient id="g118" gradientUnits="userSpaceOnUse" x1="76" x2="306"><stop offset="0" stop-color="#02c968"/><stop offset="0.309" stop-color="#4bf372"/><stop offset="0.409" stop-color="#5ffc71"/><stop offset="0.496" stop-color="#6cff6b"/><stop offset="0.578" stop-color="#73fc5f"/><stop offset="0.696" stop-color="#77f249"/><stop offset="1" stop-color="#75c901"/></linearGradient><linearGradient id="g119" gradientUnits="userSpaceOnUse" x1="76" x2="307"><stop offset="0" stop-color="#02c969"/><stop offset="0.307" stop-color="#4cf373"/><stop offset="0.411" stop-color="#60fc71"/><stop offset="0.498" stop-color="#6dff6b"/><stop offset="0.589" stop-color="#74fb5e"/><stop offset="0.701" stop-color="#78f148"/><stop offset="1" stop-color="#76c901"/></linearGradient><linearGradient id="g120" gradientUnits="userSpaceOnUse" x1="76" x2="308"><stop offset="0" stop-color="#02c869"/><stop offset="0.164" stop-color="#2be070"/><stop offset="0.31" stop-color="#4df373"/><stop offset="0.409" stop-color="#60fc72"/><stop offset="0.496" stop-color="#6dff6c"/><stop offset="0.582" stop-color="#74fc60"/><stop offset="0.703" stop-color="#79f149"/><stop offset="1" stop-color="#77c801"/></linearGradient><linearGradient id="g121" gradientUnits="userSpaceOnUse" x1="76" x2="309"><stop offset="0" stop-color="#02c86a"/><stop offset="0.167" stop-color="#2ce171"/><stop offset="0.313" stop-color="#4ef374"/><stop offset="0.412" stop-color="#61fc73"/><stop offset="0.498" stop-color="#6eff6d"/><stop offset="0.588" stop-color="#75fb5f"/><stop offset="0.7" stop-color="#79f14a"/><stop offset="1" stop-color="#77c801"/></linearGradient><linearGradient id="g122" gradientUnits="userSpaceOnUse" x1="76" x2="310"><stop offset="0" stop-color="#02c86a"/><stop offset="0.171" stop-color="#2de172"/><stop offset="0.312" stop-color="#4ef375"/><stop offset="0.415" stop-color="#62fc73"/><stop offset="0.496" stop-color="#6fff6d"/><stop offset="0.577" stop-color="#75fc62"/><stop offset="0.697" stop-color="#7af14b"/><stop offset="1" stop-color="#78c802"/></linearGradient><linearGradient id="g123" gradientUnits="userSpaceOnUse" x1="76" x2="311"><stop offset="0" stop-color="#02c76b"/><stop offset="0.174" stop-color="#2ee172"/><stop offset="0.315" stop-color="#4ff375"/><stop offset="0.413" stop-color="#63fc74"/><stop offset="0.498" stop-color="#70ff6e"/><stop offset="0.587" stop-color="#77fb61"/><stop offset="0.698" stop-color="#7af14b"/><stop offset="1" stop-color="#78c702"/></linearGradient><linearGradient id="g124" gradientUnits="userSpaceOnUse" x1="76" x2="313"><stop offset="0" stop-color="#02c76b"/><stop offset="0.177" stop-color="#2fe173"/><stop offset="0.316" stop-color="#50f376"/><stop offset="0.414" stop-color="#64fc75"/><stop offset="0.494" stop-color="#70ff6f"/><stop offset="0.574" stop-color="#77fc63"/><stop offset="0.692" stop-color="#7bf14c"/><stop offset="1" stop-color="#79c601"/></linearGradient><linearGradient id="g125" gradientUnits="userSpaceOnUse" x1="76" x2="314"><stop offset="0" stop-color="#02c66c"/><stop offset="0.176" stop-color="#2fe173"/><stop offset="0.315" stop-color="#50f377"/><stop offset="0.416" stop-color="#65fc75"/><stop offset="0.496" stop-color="#71ff6f"/><stop offset="0.584" stop-color="#78fb62"/><stop offset="0.693" stop-color="#7cf14c"/><stop offset="1" stop-color="#79c601"/></linearGradient><linearGradient id="g126" gradientUnits="userSpaceOnUse" x1="76" x2="315"><stop offset="0" stop-color="#02c66c"/><stop offset="0.18" stop-color="#30e174"/><stop offset="0.318" stop-color="#51f377"/><stop offset="0.414" stop-color="#65fc76"/><stop offset="0.494" stop-color="#71ff70"/><stop offset="0.573" stop-color="#78fc65"/><stop offset="0.69" stop-color="#7cf14d"/><stop offset="1" stop-color="#7ac501"/></linearGradient><linearGradient id="g127" gradientUnits="userSpaceOnUse" x1="76" x2="316"><stop offset="0" stop-color="#02c56d"/><stop offset="0.183" stop-color="#31e175"/><stop offset="0.321" stop-color="#52f378"/><stop offset="0.417" stop-color="#66fc76"/><stop offset="0.496" stop-color="#72ff71"/><stop offset="0.583" stop-color="#79fb63"/><stop offset="0.692" stop-color="#7df14e"/><stop offset="1" stop-color="#7ac501"/></linearGradient><linearGradient id="g128" gradientUnits="userSpaceOnUse" x1="76" x2="317"><stop offset="0" stop-color="#02c56d"/><stop offset="0.187" stop-color="#33e275"/><stop offset="0.32" stop-color="#53f378"/><stop offset="0.415" stop-color="#66fc77"/><stop offset="0.494" stop-color="#73ff72"/><stop offset="0.581" stop-color="#7afb65"/><stop offset="0.689" stop-color="#7ef14f"/><stop offset="1" stop-color="#7bc501"/></linearGradient><linearGradient id="g129" gradientUnits="userSpaceOnUse" x1="76" x2="318"><stop offset="0" stop-color="#02c46e"/><stop offset="0.19" stop-color="#34e276"/><stop offset="0.322" stop-color="#54f379"/><stop offset="0.417" stop-color="#67fc78"/><stop offset="0.496" stop-color="#74ff72"/><stop offset="0.583" stop-color="#7bfb65"/><stop offset="0.694" stop-color="#7ef04e"/><stop offset="1" stop-color="#7bc401"/></linearGradient><linearGradient id="g130" gradientUnits="userSpaceOnUse" x1="76" x2="319"><stop offset="0" stop-color="#02c46e"/><stop offset="0.3" stop-color="#4ff07a"/><stop offset="0.416" stop-color="#68fc79"/><stop offset="0.494" stop-color="#74ff73"/><stop offset="0.58" stop-color="#7bfb66"/><stop offset="0.691" stop-color="#7ff14f"/><stop offset="1" stop-color="#7cc401"/></linearGradient><linearGradient id="g131" gradientUnits="userSpaceOnUse" x1="76" x2="320"><stop offset="0" stop-color="#02c36e"/><stop offset="0.303" stop-color="#50f17a"/><stop offset="0.418" stop-color="#69fc79"/><stop offset="0.496" stop-color="#75ff73"/><stop offset="0.582" stop-color="#7cfb66"/><stop offset="0.693" stop-color="#80f04f"/><stop offset="1" stop-color="#7cc301"/></linearGradient><linearGradient id="g132" gradientUnits="userSpaceOnUse" x1="76" x2="321"><stop offset="0" stop-color="#02c36f"/><stop offset="0.302" stop-color="#50f07b"/><stop offset="0.416" stop-color="#69fc7a"/><stop offset="0.494" stop-color="#75ff74"/><stop offset="0.58" stop-color="#7dfb67"/><stop offset="0.69" stop-color="#80f050"/><stop offset="1" stop-color="#7dc301"/></linearGradient><linearGradient id="g133" gradientUnits="userSpaceOnUse" x1="76" x2="322"><stop offset="0" stop-color="#02c36f"/><stop offset="0.305" stop-color="#51f17b"/><stop offset="0.419" stop-color="#6afc7a"/><stop offset="0.496" stop-color="#76ff75"/><stop offset="0.581" stop-color="#7dfb68"/><stop offset="0.691" stop-color="#81f051"/><stop offset="1" stop-color="#7ec201"/></linearGradient><linearGradient id="g134" gradientUnits="userSpaceOnUse" x1="76" x2="323"><stop offset="0" stop-color="#02c270"/><stop offset="0.308" stop-color="#52f17c"/><stop offset="0.417" stop-color="#6afc7b"/><stop offset="0.494" stop-color="#77ff76"/><stop offset="0.579" stop-color="#7efb69"/><stop offset="0.688" stop-color="#82f052"/><stop offset="1" stop-color="#7ec201"/></linearGradient><linearGradient id="g135" gradientUnits="userSpaceOnUse" x1="76" x2="324"><stop offset="0" stop-color="#02c270"/><stop offset="0.306" stop-color="#53f07d"/><stop offset="0.419" stop-color="#6bfc7c"/><stop offset="0.496" stop-color="#78ff76"/><stop offset="0.577" stop-color="#7efb6a"/><stop offset="0.685" stop-color="#82f153"/><stop offset="1" stop-color="#7fc201"/></linearGradient><linearGradient id="g136" gradientUnits="userSpaceOnUse" x1="76" x2="325"><stop offset="0" stop-color="#02c171"/><stop offset="0.309" stop-color="#54f17d"/><stop offset="0.422" stop-color="#6cfc7c"/><stop offset="0.494" stop-color="#78ff77"/><stop offset="0.578" stop-color="#7ffb6a"/><stop offset="0.687" stop-color="#83f053"/><stop offset="1" stop-color="#7fc101"/></linearGradient><linearGradient id="g137" gradientUnits="userSpaceOnUse" x1="76" x2="326"><stop offset="0" stop-color="#02c171"/><stop offset="0.312" stop-color="#55f17e"/><stop offset="0.42" stop-color="#6dfc7d"/><stop offset="0.496" stop-color="#79ff78"/><stop offset="0.576" stop-color="#80fb6b"/><stop offset="0.684" stop-color="#83f154"/><stop offset="1" stop-color="#80c101"/></linearGradient><linearGradient id="g138" gradientUnits="userSpaceOnUse" x1="76" x2="327"><stop offset="0" stop-color="#02c072"/><stop offset="0.175" stop-color="#32dd7b"/><stop offset="0.315" stop-color="#56f17f"/><stop offset="0.422" stop-color="#6efc7e"/><stop offset="0.498" stop-color="#7aff78"/><stop offset="0.578" stop-color="#80fb6b"/><stop offset="0.689" stop-color="#84f053"/><stop offset="1" stop-color="#80c001"/></linearGradient><linearGradient id="g139" gradientUnits="userSpaceOnUse" x1="76" x2="329"><stop offset="0" stop-color="#02c072"/><stop offset="0.174" stop-color="#32dd7b"/><stop offset="0.312" stop-color="#56f17f"/><stop offset="0.419" stop-color="#6efc7e"/><stop offset="0.494" stop-color="#7aff79"/><stop offset="0.573" stop-color="#81fb6c"/><stop offset="0.688" stop-color="#85ef54"/><stop offset="1" stop-color="#81bf01"/></linearGradient><linearGradient id="g140" gradientUnits="userSpaceOnUse" x1="76" x2="330"><stop offset="0" stop-color="#02bf73"/><stop offset="0.177" stop-color="#33dd7c"/><stop offset="0.315" stop-color="#57f180"/><stop offset="0.421" stop-color="#6ffc7f"/><stop offset="0.496" stop-color="#7bff79"/><stop offset="0.575" stop-color="#82fb6d"/><stop offset="0.685" stop-color="#85f055"/><stop offset="1" stop-color="#81bf01"/></linearGradient><linearGradient id="g141" gradientUnits="userSpaceOnUse" x1="76" x2="331"><stop offset="0" stop-color="#02bf73"/><stop offset="0.18" stop-color="#34dd7c"/><stop offset="0.318" stop-color="#58f181"/><stop offset="0.424" stop-color="#70fc80"/><stop offset="0.494" stop-color="#7cff7a"/><stop offset="0.573" stop-color="#82fb6e"/><stop offset="0.682" stop-color="#86f056"/><stop offset="1" stop-color="#82bf01"/></linearGradient><linearGradient id="g142" gradientUnits="userSpaceOnUse" x1="76" x2="332"><stop offset="0" stop-color="#02be73"/><stop offset="0.184" stop-color="#36dd7d"/><stop offset="0.316" stop-color="#58f181"/><stop offset="0.422" stop-color="#70fc80"/><stop offset="0.496" stop-color="#7cff7b"/><stop offset="0.578" stop-color="#83fb6d"/><stop offset="0.684" stop-color="#87f056"/><stop offset="1" stop-color="#82be01"/></linearGradient><linearGradient id="g143" gradientUnits="userSpaceOnUse" x1="76" x2="333"><stop offset="0" stop-color="#02be74"/><stop offset="0.187" stop-color="#37de7e"/><stop offset="0.319" stop-color="#59f182"/><stop offset="0.424" stop-color="#71fc81"/><stop offset="0.494" stop-color="#7dff7c"/><stop offset="0.572" stop-color="#84fb6f"/><stop offset="0.681" stop-color="#87f057"/><stop offset="1" stop-color="#83be01"/></linearGradient><linearGradient id="g144" gradientUnits="userSpaceOnUse" x1="76" x2="334"><stop offset="0" stop-color="#02bd74"/><stop offset="0.19" stop-color="#38de7f"/><stop offset="0.322" stop-color="#5bf183"/><stop offset="0.426" stop-color="#72fc82"/><stop offset="0.496" stop-color="#7eff7c"/><stop offset="0.578" stop-color="#85fb6f"/><stop offset="0.682" stop-color="#88f057"/><stop offset="1" stop-color="#83bd01"/></linearGradient><linearGradient id="g145" gradientUnits="userSpaceOnUse" x1="76" x2="335"><stop offset="0" stop-color="#02bd75"/><stop offset="0.193" stop-color="#39de7f"/><stop offset="0.32" stop-color="#5bf183"/><stop offset="0.413" stop-color="#70fb83"/><stop offset="0.494" stop-color="#7eff7d"/><stop offset="0.571" stop-color="#85fb70"/><stop offset="0.68" stop-color="#89f058"/><stop offset="1" stop-color="#84bd01"/></linearGradient><linearGradient id="g146" gradientUnits="userSpaceOnUse" x1="76" x2="336"><stop offset="0" stop-color="#02bd75"/><stop offset="0.196" stop-color="#3ade80"/><stop offset="0.323" stop-color="#5cf184"/><stop offset="0.427" stop-color="#74fc83"/><stop offset="0.496" stop-color="#7fff7e"/><stop offset="0.577" stop-color="#86fb70"/><stop offset="0.677" stop-color="#89f05a"/><stop offset="1" stop-color="#84bc01"/></linearGradient><linearGradient id="g147" gradientUnits="userSpaceOnUse" x1="76" x2="337"><stop offset="0" stop-color="#02bc76"/><stop offset="0.199" stop-color="#3bde81"/><stop offset="0.326" stop-color="#5df185"/><stop offset="0.425" stop-color="#74fc84"/><stop offset="0.494" stop-color="#80ff7e"/><stop offset="0.571" stop-color="#86fb72"/><stop offset="0.674" stop-color="#8af05b"/><stop offset="1" stop-color="#85bc01"/></linearGradient><linearGradient id="g148" gradientUnits="userSpaceOnUse" x1="76" x2="338"><stop offset="0" stop-color="#02bc76"/><stop offset="0.198" stop-color="#3bde81"/><stop offset="0.328" stop-color="#5ef285"/><stop offset="0.427" stop-color="#75fc84"/><stop offset="0.496" stop-color="#80ff7f"/><stop offset="0.576" stop-color="#87fb71"/><stop offset="0.683" stop-color="#8aef59"/><stop offset="1" stop-color="#86bb01"/></linearGradient><linearGradient id="g149" gradientUnits="userSpaceOnUse" x1="76" x2="339"><stop offset="0" stop-color="#02bb77"/><stop offset="0.202" stop-color="#3cde82"/><stop offset="0.327" stop-color="#5ef186"/><stop offset="0.414" stop-color="#73fb85"/><stop offset="0.494" stop-color="#81ff80"/><stop offset="0.57" stop-color="#88fb73"/><stop offset="0.673" stop-color="#8bf05c"/><stop offset="1" stop-color="#86bb01"/></linearGradient><linearGradient id="g150" gradientUnits="userSpaceOnUse" x1="76" x2="340"><stop offset="0" stop-color="#02bb77"/><stop offset="0.205" stop-color="#3dde82"/><stop offset="0.33" stop-color="#5ff186"/><stop offset="0.428" stop-color="#76fc86"/><stop offset="0.496" stop-color="#82ff80"/><stop offset="0.576" stop-color="#89fb73"/><stop offset="0.678" stop-color="#8cef5b"/><stop offset="1" stop-color="#87bb01"/></linearGradient><linearGradient id="g151" gradientUnits="userSpaceOnUse" x1="76" x2="341"><stop offset="0" stop-color="#02ba78"/><stop offset="0.309" stop-color="#5aee87"/><stop offset="0.415" stop-color="#74fb87"/><stop offset="0.494" stop-color="#82ff81"/><stop offset="0.574" stop-color="#89fb74"/><stop offset="0.679" stop-color="#8cef5b"/><stop offset="1" stop-color="#87ba01"/></linearGradient><linearGradient id="g152" gradientUnits="userSpaceOnUse" x1="76" x2="342"><stop offset="0" stop-color="#02ba78"/><stop offset="0.312" stop-color="#5cef87"/><stop offset="0.417" stop-color="#75fb87"/><stop offset="0.496" stop-color="#83ff82"/><stop offset="0.575" stop-color="#8afb74"/><stop offset="0.677" stop-color="#8def5c"/><stop offset="1" stop-color="#88ba01"/></linearGradient><linearGradient id="g153" gradientUnits="userSpaceOnUse" x1="76" x2="343"><stop offset="0" stop-color="#02b978"/><stop offset="0.311" stop-color="#5cee88"/><stop offset="0.416" stop-color="#75fb88"/><stop offset="0.494" stop-color="#84ff83"/><stop offset="0.573" stop-color="#8afb75"/><stop offset="0.674" stop-color="#8eef5e"/><stop offset="1" stop-color="#88b901"/></linearGradient><linearGradient id="g154" gradientUnits="userSpaceOnUse" x1="76" x2="344"><stop offset="0" stop-color="#02b979"/><stop offset="0.313" stop-color="#5def89"/><stop offset="0.418" stop-color="#76fb89"/><stop offset="0.496" stop-color="#84ff83"/><stop offset="0.575" stop-color="#8bfb75"/><stop offset="0.675" stop-color="#8eef5e"/><stop offset="1" stop-color="#89b901"/></linearGradient><linearGradient id="g155" gradientUnits="userSpaceOnUse" x1="76" x2="345"><stop offset="0" stop-color="#02b879"/><stop offset="0.316" stop-color="#5eef89"/><stop offset="0.416" stop-color="#77fb89"/><stop offset="0.494" stop-color="#85ff84"/><stop offset="0.572" stop-color="#8cfb77"/><stop offset="0.673" stop-color="#8fef5f"/><stop offset="1" stop-color="#89b901"/></linearGradient><linearGradient id="g156" gradientUnits="userSpaceOnUse" x1="76" x2="346"><stop offset="0" stop-color="#02b87a"/><stop offset="0.315" stop-color="#5eee8a"/><stop offset="0.419" stop-color="#78fb8a"/><stop offset="0.496" stop-color="#86ff84"/><stop offset="0.57" stop-color="#8cfb78"/><stop offset="0.67" stop-color="#8ff060"/><stop offset="1" stop-color="#8ab801"/></linearGradient><linearGradient id="g157" gradientUnits="userSpaceOnUse" x1="76" x2="347"><stop offset="0" stop-color="#02b77a"/><stop offset="0.317" stop-color="#5fef8b"/><stop offset="0.421" stop-color="#79fb8b"/><stop offset="0.494" stop-color="#86ff85"/><stop offset="0.572" stop-color="#8dfb78"/><stop offset="0.672" stop-color="#90ef60"/><stop offset="1" stop-color="#8ab801"/></linearGradient><linearGradient id="g158" gradientUnits="userSpaceOnUse" x1="76" x2="348"><stop offset="0" stop-color="#02b77b"/><stop offset="0.32" stop-color="#60ef8b"/><stop offset="0.419" stop-color="#79fb8b"/><stop offset="0.496" stop-color="#87ff86"/><stop offset="0.57" stop-color="#8efb79"/><stop offset="0.669" stop-color="#91ef61"/><stop offset="1" stop-color="#8bb701"/></linearGradient><linearGradient id="g159" gradientUnits="userSpaceOnUse" x1="76" x2="350"><stop offset="0" stop-color="#02b67b"/><stop offset="0.19" stop-color="#3cd987"/><stop offset="0.321" stop-color="#61ef8c"/><stop offset="0.42" stop-color="#7afb8c"/><stop offset="0.493" stop-color="#88ff87"/><stop offset="0.566" stop-color="#8efb7a"/><stop offset="0.664" stop-color="#91f062"/><stop offset="1" stop-color="#8cb601"/></linearGradient><linearGradient id="g160" gradientUnits="userSpaceOnUse" x1="76" x2="351"><stop offset="0" stop-color="#02b67c"/><stop offset="0.32" stop-color="#61ef8c"/><stop offset="0.422" stop-color="#7bfb8d"/><stop offset="0.495" stop-color="#88ff87"/><stop offset="0.567" stop-color="#8ffb7a"/><stop offset="0.669" stop-color="#92ef62"/><stop offset="1" stop-color="#8cb601"/></linearGradient><linearGradient id="g161" gradientUnits="userSpaceOnUse" x1="76" x2="352"><stop offset="0" stop-color="#02b57c"/><stop offset="0.196" stop-color="#3eda88"/><stop offset="0.322" stop-color="#63ef8d"/><stop offset="0.42" stop-color="#7bfb8d"/><stop offset="0.493" stop-color="#89ff88"/><stop offset="0.569" stop-color="#90fb7b"/><stop offset="0.667" stop-color="#93ef63"/><stop offset="1" stop-color="#8db501"/></linearGradient><linearGradient id="g162" gradientUnits="userSpaceOnUse" x1="76" x2="353"><stop offset="0" stop-color="#02b57c"/><stop offset="0.199" stop-color="#3fda89"/><stop offset="0.325" stop-color="#64ef8e"/><stop offset="0.422" stop-color="#7cfb8e"/><stop offset="0.495" stop-color="#8aff89"/><stop offset="0.567" stop-color="#90fb7c"/><stop offset="0.668" stop-color="#93ef63"/><stop offset="1" stop-color="#8db501"/></linearGradient><linearGradient id="g163" gradientUnits="userSpaceOnUse" x1="76" x2="354"><stop offset="0" stop-color="#02b57d"/><stop offset="0.201" stop-color="#40da89"/><stop offset="0.327" stop-color="#65ef8e"/><stop offset="0.421" stop-color="#7dfb8f"/><stop offset="0.493" stop-color="#8aff89"/><stop offset="0.565" stop-color="#91fb7d"/><stop offset="0.665" stop-color="#94ef64"/><stop offset="1" stop-color="#8eb501"/></linearGradient><linearGradient id="g164" gradientUnits="userSpaceOnUse" x1="76" x2="355"><stop offset="0" stop-color="#02b47d"/><stop offset="0.204" stop-color="#41db8a"/><stop offset="0.326" stop-color="#65ef8f"/><stop offset="0.423" stop-color="#7efb8f"/><stop offset="0.495" stop-color="#8bff8a"/><stop offset="0.566" stop-color="#92fb7d"/><stop offset="0.667" stop-color="#94ef64"/><stop offset="1" stop-color="#8eb401"/></linearGradient><linearGradient id="g165" gradientUnits="userSpaceOnUse" x1="76" x2="356"><stop offset="0" stop-color="#02b47e"/><stop offset="0.207" stop-color="#42db8b"/><stop offset="0.329" stop-color="#66ef90"/><stop offset="0.425" stop-color="#7ffb90"/><stop offset="0.493" stop-color="#8cff8b"/><stop offset="0.564" stop-color="#92fb7e"/><stop offset="0.664" stop-color="#95ef65"/><stop offset="1" stop-color="#8fb401"/></linearGradient><linearGradient id="g166" gradientUnits="userSpaceOnUse" x1="76" x2="357"><stop offset="0" stop-color="#02b37e"/><stop offset="0.21" stop-color="#43db8b"/><stop offset="0.331" stop-color="#67ef90"/><stop offset="0.423" stop-color="#7ffb91"/><stop offset="0.495" stop-color="#8cff8b"/><stop offset="0.566" stop-color="#93fb7e"/><stop offset="0.662" stop-color="#96ef66"/><stop offset="1" stop-color="#8fb301"/></linearGradient><linearGradient id="g167" gradientUnits="userSpaceOnUse" x1="76" x2="358"><stop offset="0" stop-color="#02b37f"/><stop offset="0.213" stop-color="#45db8c"/><stop offset="0.333" stop-color="#68f091"/><stop offset="0.426" stop-color="#80fb91"/><stop offset="0.493" stop-color="#8dff8c"/><stop offset="0.564" stop-color="#93fb7f"/><stop offset="0.663" stop-color="#96ef67"/><stop offset="1" stop-color="#90b301"/></linearGradient><linearGradient id="g168" gradientUnits="userSpaceOnUse" x1="77" x2="359"><stop offset="0" stop-color="#02b37f"/><stop offset="0.177" stop-color="#3bd58b"/><stop offset="0.33" stop-color="#68ef92"/><stop offset="0.426" stop-color="#81fc92"/><stop offset="0.493" stop-color="#8eff8d"/><stop offset="0.564" stop-color="#94fb80"/><stop offset="0.66" stop-color="#97ef68"/><stop offset="1" stop-color="#90b200"/></linearGradient><linearGradient id="g169" gradientUnits="userSpaceOnUse" x1="77" x2="360"><stop offset="0" stop-color="#02b27f"/><stop offset="0.18" stop-color="#3cd58b"/><stop offset="0.332" stop-color="#69ef92"/><stop offset="0.424" stop-color="#81fb93"/><stop offset="0.491" stop-color="#8eff8e"/><stop offset="0.562" stop-color="#95fb81"/><stop offset="0.657" stop-color="#98ef69"/><stop offset="1" stop-color="#91b200"/></linearGradient><linearGradient id="g170" gradientUnits="userSpaceOnUse" x1="77" x2="361"><stop offset="0" stop-color="#02b280"/><stop offset="0.183" stop-color="#3dd58c"/><stop offset="0.335" stop-color="#6bf093"/><stop offset="0.426" stop-color="#82fc93"/><stop offset="0.493" stop-color="#8fff8e"/><stop offset="0.567" stop-color="#96fb80"/><stop offset="0.662" stop-color="#98ee68"/><stop offset="1" stop-color="#91b100"/></linearGradient><linearGradient id="g171" gradientUnits="userSpaceOnUse" x1="77" x2="362"><stop offset="0" stop-color="#02b180"/><stop offset="0.186" stop-color="#3ed68d"/><stop offset="0.337" stop-color="#6cf094"/><stop offset="0.428" stop-color="#83fc94"/><stop offset="0.495" stop-color="#90ff8f"/><stop offset="0.568" stop-color="#96fa81"/><stop offset="0.663" stop-color="#99ee68"/><stop offset="1" stop-color="#92b101"/></linearGradient><linearGradient id="g172" gradientUnits="userSpaceOnUse" x1="77" x2="363"><stop offset="0" stop-color="#02b181"/><stop offset="0.189" stop-color="#3fd68d"/><stop offset="0.336" stop-color="#6cf094"/><stop offset="0.427" stop-color="#84fb94"/><stop offset="0.493" stop-color="#90ff8f"/><stop offset="0.566" stop-color="#97fb82"/><stop offset="0.661" stop-color="#99ee69"/><stop offset="1" stop-color="#92b101"/></linearGradient><linearGradient id="g173" gradientUnits="userSpaceOnUse" x1="77" x2="364"><stop offset="0" stop-color="#02b081"/><stop offset="0.192" stop-color="#40d68e"/><stop offset="0.338" stop-color="#6df095"/><stop offset="0.429" stop-color="#85fc95"/><stop offset="0.495" stop-color="#91ff90"/><stop offset="0.568" stop-color="#98fa82"/><stop offset="0.659" stop-color="#9aef6a"/><stop offset="1" stop-color="#93b001"/></linearGradient><linearGradient id="g174" gradientUnits="userSpaceOnUse" x1="77" x2="365"><stop offset="0" stop-color="#02b082"/><stop offset="0.319" stop-color="#68ed95"/><stop offset="0.417" stop-color="#82fa96"/><stop offset="0.493" stop-color="#92ff91"/><stop offset="0.566" stop-color="#98fb83"/><stop offset="0.656" stop-color="#9bef6c"/><stop offset="1" stop-color="#93b001"/></linearGradient><linearGradient id="g175" gradientUnits="userSpaceOnUse" x1="77" x2="366"><stop offset="0" stop-color="#02af82"/><stop offset="0.322" stop-color="#69ed96"/><stop offset="0.429" stop-color="#86fc96"/><stop offset="0.495" stop-color="#93ff91"/><stop offset="0.564" stop-color="#99fb84"/><stop offset="0.657" stop-color="#9bee6c"/><stop offset="1" stop-color="#94af01"/></linearGradient><linearGradient id="g176" gradientUnits="userSpaceOnUse" x1="77" x2="367"><stop offset="0" stop-color="#02af82"/><stop offset="0.324" stop-color="#6aed96"/><stop offset="0.417" stop-color="#84fa97"/><stop offset="0.493" stop-color="#93ff92"/><stop offset="0.566" stop-color="#9afb84"/><stop offset="0.655" stop-color="#9cef6d"/><stop offset="1" stop-color="#94af01"/></linearGradient><linearGradient id="g177" gradientUnits="userSpaceOnUse" x1="77" x2="368"><stop offset="0" stop-color="#02ae83"/><stop offset="0.323" stop-color="#6aed97"/><stop offset="0.419" stop-color="#85fa98"/><stop offset="0.495" stop-color="#94ff93"/><stop offset="0.564" stop-color="#9afb85"/><stop offset="0.653" stop-color="#9def6e"/><stop offset="1" stop-color="#95ae01"/></linearGradient><linearGradient id="g178" gradientUnits="userSpaceOnUse" x1="77" x2="369"><stop offset="0" stop-color="#02ae83"/><stop offset="0.325" stop-color="#6bed98"/><stop offset="0.418" stop-color="#85fa99"/><stop offset="0.493" stop-color="#94ff94"/><stop offset="0.562" stop-color="#9bfb86"/><stop offset="0.654" stop-color="#9def6e"/><stop offset="1" stop-color="#95ae01"/></linearGradient><linearGradient id="g179" gradientUnits="userSpaceOnUse" x1="77" x2="370"><stop offset="0" stop-color="#02ad84"/><stop offset="0.328" stop-color="#6ced98"/><stop offset="0.43" stop-color="#89fb99"/><stop offset="0.495" stop-color="#95ff94"/><stop offset="0.563" stop-color="#9cfb87"/><stop offset="0.655" stop-color="#9eee6e"/><stop offset="1" stop-color="#96ae01"/></linearGradient><linearGradient id="g180" gradientUnits="userSpaceOnUse" x1="77" x2="371"><stop offset="0" stop-color="#02ad84"/><stop offset="0.33" stop-color="#6eed99"/><stop offset="0.422" stop-color="#87fb9a"/><stop offset="0.493" stop-color="#96ff95"/><stop offset="0.561" stop-color="#9cfb88"/><stop offset="0.65" stop-color="#9eef70"/><stop offset="1" stop-color="#96ad01"/></linearGradient><linearGradient id="g181" gradientUnits="userSpaceOnUse" x1="77" x2="372"><stop offset="0" stop-color="#02ac85"/><stop offset="0.332" stop-color="#6fee9a"/><stop offset="0.431" stop-color="#8afb9a"/><stop offset="0.495" stop-color="#97ff95"/><stop offset="0.566" stop-color="#9dfa87"/><stop offset="0.654" stop-color="#9fee70"/><stop offset="1" stop-color="#97ad01"/></linearGradient><linearGradient id="g182" gradientUnits="userSpaceOnUse" x1="77" x2="373"><stop offset="0" stop-color="#02ac85"/><stop offset="0.331" stop-color="#6fed9a"/><stop offset="0.422" stop-color="#88fa9b"/><stop offset="0.493" stop-color="#97ff96"/><stop offset="0.561" stop-color="#9dfb89"/><stop offset="0.652" stop-color="#a0ee71"/><stop offset="1" stop-color="#97ac01"/></linearGradient><linearGradient id="g183" gradientUnits="userSpaceOnUse" x1="77" x2="375"><stop offset="0" stop-color="#02ab86"/><stop offset="0.332" stop-color="#70ed9b"/><stop offset="0.423" stop-color="#89fb9c"/><stop offset="0.493" stop-color="#98ff97"/><stop offset="0.564" stop-color="#9efa89"/><stop offset="0.651" stop-color="#a0ee71"/><stop offset="1" stop-color="#98ab00"/></linearGradient><linearGradient id="g184" gradientUnits="userSpaceOnUse" x1="78" x2="376"><stop offset="0" stop-color="#03ab86"/><stop offset="0.332" stop-color="#71ee9b"/><stop offset="0.419" stop-color="#8afa9d"/><stop offset="0.49" stop-color="#98ff98"/><stop offset="0.557" stop-color="#9ffb8b"/><stop offset="0.648" stop-color="#a1ee72"/><stop offset="1" stop-color="#99ab00"/></linearGradient><linearGradient id="g185" gradientUnits="userSpaceOnUse" x1="78" x2="377"><stop offset="0" stop-color="#03ab86"/><stop offset="0.184" stop-color="#41d194"/><stop offset="0.334" stop-color="#72ee9c"/><stop offset="0.421" stop-color="#8bfb9d"/><stop offset="0.492" stop-color="#99ff98"/><stop offset="0.562" stop-color="#a0fa8a"/><stop offset="0.645" stop-color="#a2ee73"/><stop offset="1" stop-color="#99ab00"/></linearGradient><linearGradient id="g186" gradientUnits="userSpaceOnUse" x1="78" x2="378"><stop offset="0" stop-color="#03aa87"/><stop offset="0.187" stop-color="#43d295"/><stop offset="0.333" stop-color="#72ed9d"/><stop offset="0.423" stop-color="#8cfb9e"/><stop offset="0.49" stop-color="#9aff99"/><stop offset="0.557" stop-color="#a0fb8c"/><stop offset="0.643" stop-color="#a2ef74"/><stop offset="1" stop-color="#9aaa00"/></linearGradient><linearGradient id="g187" gradientUnits="userSpaceOnUse" x1="78" x2="379"><stop offset="0" stop-color="#03aa87"/><stop offset="0.189" stop-color="#44d295"/><stop offset="0.336" stop-color="#73ee9d"/><stop offset="0.422" stop-color="#8cfb9f"/><stop offset="0.492" stop-color="#9bff9a"/><stop offset="0.561" stop-color="#a1fa8b"/><stop offset="0.645" stop-color="#a3ee74"/><stop offset="1" stop-color="#9aaa00"/></linearGradient><linearGradient id="g188" gradientUnits="userSpaceOnUse" x1="78" x2="380"><stop offset="0" stop-color="#03a988"/><stop offset="0.192" stop-color="#45d296"/><stop offset="0.338" stop-color="#74ee9e"/><stop offset="0.424" stop-color="#8dfb9f"/><stop offset="0.49" stop-color="#9bff9a"/><stop offset="0.556" stop-color="#a1fb8d"/><stop offset="0.642" stop-color="#a3ef76"/><stop offset="1" stop-color="#9ba900"/></linearGradient><linearGradient id="g189" gradientUnits="userSpaceOnUse" x1="78" x2="381"><stop offset="0" stop-color="#03a988"/><stop offset="0.195" stop-color="#46d297"/><stop offset="0.34" stop-color="#76ee9f"/><stop offset="0.426" stop-color="#8efba0"/><stop offset="0.492" stop-color="#9cff9b"/><stop offset="0.558" stop-color="#a2fb8e"/><stop offset="0.64" stop-color="#a4ef77"/><stop offset="1" stop-color="#9ba900"/></linearGradient><linearGradient id="g190" gradientUnits="userSpaceOnUse" x1="78" x2="382"><stop offset="0" stop-color="#03a888"/><stop offset="0.197" stop-color="#47d297"/><stop offset="0.339" stop-color="#76ee9f"/><stop offset="0.424" stop-color="#8efba0"/><stop offset="0.49" stop-color="#9cff9c"/><stop offset="0.559" stop-color="#a3fa8e"/><stop offset="0.641" stop-color="#a5ef77"/><stop offset="1" stop-color="#9ca800"/></linearGradient><linearGradient id="g191" gradientUnits="userSpaceOnUse" x1="78" x2="383"><stop offset="0" stop-color="#03a889"/><stop offset="0.2" stop-color="#48d398"/><stop offset="0.341" stop-color="#77eea0"/><stop offset="0.426" stop-color="#8ffba1"/><stop offset="0.492" stop-color="#9dff9c"/><stop offset="0.557" stop-color="#a3fb8f"/><stop offset="0.643" stop-color="#a5ee77"/><stop offset="1" stop-color="#9ca800"/></linearGradient><linearGradient id="g192" gradientUnits="userSpaceOnUse" x1="78" x2="384"><stop offset="0" stop-color="#03a789"/><stop offset="0.324" stop-color="#72eba0"/><stop offset="0.425" stop-color="#90fba2"/><stop offset="0.49" stop-color="#9eff9d"/><stop offset="0.556" stop-color="#a4fb90"/><stop offset="0.641" stop-color="#a6ee78"/><stop offset="1" stop-color="#9da700"/></linearGradient><linearGradient id="g193" gradientUnits="userSpaceOnUse" x1="78" x2="385"><stop offset="0" stop-color="#03a78a"/><stop offset="0.205" stop-color="#4ad399"/><stop offset="0.345" stop-color="#79eea1"/><stop offset="0.427" stop-color="#91fba2"/><stop offset="0.492" stop-color="#9fff9e"/><stop offset="0.557" stop-color="#a5fa90"/><stop offset="0.642" stop-color="#a6ee78"/><stop offset="1" stop-color="#9da700"/></linearGradient><linearGradient id="g194" gradientUnits="userSpaceOnUse" x1="78" x2="386"><stop offset="0" stop-color="#03a68a"/><stop offset="0.328" stop-color="#74eba1"/><stop offset="0.425" stop-color="#91fba3"/><stop offset="0.49" stop-color="#9fff9f"/><stop offset="0.555" stop-color="#a5fb91"/><stop offset="0.64" stop-color="#a7ee79"/><stop offset="1" stop-color="#9ea600"/></linearGradient><linearGradient id="g195" gradientUnits="userSpaceOnUse" x1="78" x2="387"><stop offset="0" stop-color="#03a68b"/><stop offset="0.33" stop-color="#75eba2"/><stop offset="0.427" stop-color="#92fba4"/><stop offset="0.492" stop-color="#a0ff9f"/><stop offset="0.557" stop-color="#a6fa92"/><stop offset="0.638" stop-color="#a8ef7b"/><stop offset="1" stop-color="#9ea600"/></linearGradient><linearGradient id="g196" gradientUnits="userSpaceOnUse" x1="78" x2="388"><stop offset="0" stop-color="#03a58b"/><stop offset="0.332" stop-color="#76eca3"/><stop offset="0.429" stop-color="#93fba4"/><stop offset="0.49" stop-color="#a0ffa0"/><stop offset="0.555" stop-color="#a7fb93"/><stop offset="0.639" stop-color="#a8ee7b"/><stop offset="1" stop-color="#9fa600"/></linearGradient><linearGradient id="g197" gradientUnits="userSpaceOnUse" x1="79" x2="389"><stop offset="0" stop-color="#03a58c"/><stop offset="0.332" stop-color="#77eca3"/><stop offset="0.426" stop-color="#93fba5"/><stop offset="0.49" stop-color="#a1ffa0"/><stop offset="0.555" stop-color="#a7fa93"/><stop offset="0.635" stop-color="#a9ee7c"/><stop offset="1" stop-color="#9fa500"/></linearGradient><linearGradient id="g198" gradientUnits="userSpaceOnUse" x1="79" x2="390"><stop offset="0" stop-color="#03a58c"/><stop offset="0.331" stop-color="#77eba4"/><stop offset="0.428" stop-color="#94fba6"/><stop offset="0.489" stop-color="#a2ffa1"/><stop offset="0.553" stop-color="#a8fb94"/><stop offset="0.633" stop-color="#aaef7d"/><stop offset="1" stop-color="#a0a500"/></linearGradient><linearGradient id="g199" gradientUnits="userSpaceOnUse" x1="79" x2="391"><stop offset="0" stop-color="#03a48c"/><stop offset="0.333" stop-color="#78eca4"/><stop offset="0.429" stop-color="#95fba6"/><stop offset="0.49" stop-color="#a3ffa2"/><stop offset="0.554" stop-color="#a9fa94"/><stop offset="0.635" stop-color="#aaee7d"/><stop offset="1" stop-color="#a0a400"/></linearGradient><linearGradient id="g200" gradientUnits="userSpaceOnUse" x1="79" x2="392"><stop offset="0" stop-color="#03a48d"/><stop offset="0.335" stop-color="#79eca5"/><stop offset="0.428" stop-color="#96fba7"/><stop offset="0.489" stop-color="#a3ffa3"/><stop offset="0.553" stop-color="#a9fb95"/><stop offset="0.633" stop-color="#abef7e"/><stop offset="1" stop-color="#a1a400"/></linearGradient><linearGradient id="g201" gradientUnits="userSpaceOnUse" x1="79" x2="393"><stop offset="0" stop-color="#03a38d"/><stop offset="0.338" stop-color="#7beca6"/><stop offset="0.43" stop-color="#97fba8"/><stop offset="0.49" stop-color="#a4ffa3"/><stop offset="0.551" stop-color="#aafb96"/><stop offset="0.631" stop-color="#abef7f"/><stop offset="1" stop-color="#a1a301"/></linearGradient><linearGradient id="g202" gradientUnits="userSpaceOnUse" x1="79" x2="394"><stop offset="0" stop-color="#03a38d"/><stop offset="0.34" stop-color="#7ceca7"/><stop offset="0.429" stop-color="#97fba8"/><stop offset="0.489" stop-color="#a4ffa4"/><stop offset="0.549" stop-color="#aafb98"/><stop offset="0.629" stop-color="#acef80"/><stop offset="1" stop-color="#a2a301"/></linearGradient><linearGradient id="g203" gradientUnits="userSpaceOnUse" x1="79" x2="395"><stop offset="0" stop-color="#03a28e"/><stop offset="0.342" stop-color="#7deca7"/><stop offset="0.43" stop-color="#98fba9"/><stop offset="0.491" stop-color="#a5ffa5"/><stop offset="0.554" stop-color="#abfa97"/><stop offset="0.633" stop-color="#adee80"/><stop offset="1" stop-color="#a2a301"/></linearGradient><linearGradient id="g204" gradientUnits="userSpaceOnUse" x1="79" x2="396"><stop offset="0" stop-color="#03a28e"/><stop offset="0.341" stop-color="#7deca8"/><stop offset="0.432" stop-color="#99fbaa"/><stop offset="0.489" stop-color="#a6ffa5"/><stop offset="0.549" stop-color="#acfb99"/><stop offset="0.631" stop-color="#adee81"/><stop offset="1" stop-color="#a3a201"/></linearGradient><linearGradient id="g205" gradientUnits="userSpaceOnUse" x1="79" x2="397"><stop offset="0" stop-color="#03a18f"/><stop offset="0.343" stop-color="#7eeca8"/><stop offset="0.431" stop-color="#99fbaa"/><stop offset="0.491" stop-color="#a7ffa6"/><stop offset="0.55" stop-color="#acfb99"/><stop offset="0.629" stop-color="#aeef82"/><stop offset="1" stop-color="#a3a201"/></linearGradient><linearGradient id="g206" gradientUnits="userSpaceOnUse" x1="79" x2="398"><stop offset="0" stop-color="#03a18f"/><stop offset="0.345" stop-color="#7feda9"/><stop offset="0.433" stop-color="#9afbab"/><stop offset="0.492" stop-color="#a8ffa6"/><stop offset="0.555" stop-color="#adfa99"/><stop offset="0.63" stop-color="#aeee82"/><stop offset="1" stop-color="#a4a101"/></linearGradient><linearGradient id="g207" gradientUnits="userSpaceOnUse" x1="79" x2="399"><stop offset="0" stop-color="#03a090"/><stop offset="0.347" stop-color="#80edaa"/><stop offset="0.434" stop-color="#9bfbab"/><stop offset="0.491" stop-color="#a8ffa7"/><stop offset="0.553" stop-color="#aefa9a"/><stop offset="0.628" stop-color="#afee83"/><stop offset="1" stop-color="#a4a101"/></linearGradient><linearGradient id="g208" gradientUnits="userSpaceOnUse" x1="80" x2="400"><stop offset="0" stop-color="#04a090"/><stop offset="0.347" stop-color="#81edaa"/><stop offset="0.434" stop-color="#9cfbac"/><stop offset="0.491" stop-color="#a9ffa8"/><stop offset="0.55" stop-color="#aefa9b"/><stop offset="0.625" stop-color="#b0ef84"/><stop offset="1" stop-color="#a5a001"/></linearGradient><linearGradient id="g209" gradientUnits="userSpaceOnUse" x1="80" x2="401"><stop offset="0" stop-color="#04a091"/><stop offset="0.346" stop-color="#81edab"/><stop offset="0.433" stop-color="#9dfbad"/><stop offset="0.489" stop-color="#a9ffa9"/><stop offset="0.548" stop-color="#affb9c"/><stop offset="0.623" stop-color="#b0ef85"/><stop offset="1" stop-color="#a5a001"/></linearGradient><linearGradient id="g210" gradientUnits="userSpaceOnUse" x1="80" x2="402"><stop offset="0" stop-color="#049f91"/><stop offset="0.348" stop-color="#83edac"/><stop offset="0.435" stop-color="#9efbad"/><stop offset="0.491" stop-color="#aaffa9"/><stop offset="0.55" stop-color="#b0fa9c"/><stop offset="0.624" stop-color="#b1ef86"/><stop offset="1" stop-color="#a6a001"/></linearGradient><linearGradient id="g211" gradientUnits="userSpaceOnUse" x1="80" x2="403"><stop offset="0" stop-color="#049f91"/><stop offset="0.35" stop-color="#84edac"/><stop offset="0.433" stop-color="#9efbae"/><stop offset="0.489" stop-color="#abffaa"/><stop offset="0.548" stop-color="#b0fb9d"/><stop offset="0.622" stop-color="#b2ef87"/><stop offset="1" stop-color="#a79f01"/></linearGradient><linearGradient id="g212" gradientUnits="userSpaceOnUse" x1="80" x2="405"><stop offset="0" stop-color="#049e92"/><stop offset="0.351" stop-color="#85edad"/><stop offset="0.434" stop-color="#9ffbaf"/><stop offset="0.489" stop-color="#acffab"/><stop offset="0.548" stop-color="#b1fa9d"/><stop offset="0.622" stop-color="#b2ee87"/><stop offset="1" stop-color="#a79e00"/></linearGradient><linearGradient id="g213" gradientUnits="userSpaceOnUse" x1="80" x2="406"><stop offset="0" stop-color="#049e92"/><stop offset="0.334" stop-color="#80eaad"/><stop offset="0.426" stop-color="#9dfaaf"/><stop offset="0.488" stop-color="#acffab"/><stop offset="0.543" stop-color="#b1fb9f"/><stop offset="0.617" stop-color="#b3ef89"/><stop offset="1" stop-color="#a89e00"/></linearGradient><linearGradient id="g214" gradientUnits="userSpaceOnUse" x1="80" x2="407"><stop offset="0" stop-color="#049d93"/><stop offset="0.336" stop-color="#81eaad"/><stop offset="0.425" stop-color="#9efab0"/><stop offset="0.489" stop-color="#adffac"/><stop offset="0.547" stop-color="#b2fa9f"/><stop offset="0.621" stop-color="#b3ee88"/><stop offset="1" stop-color="#a89d00"/></linearGradient><linearGradient id="g215" gradientUnits="userSpaceOnUse" x1="80" x2="408"><stop offset="0" stop-color="#049d93"/><stop offset="0.338" stop-color="#82eaae"/><stop offset="0.427" stop-color="#9ffab1"/><stop offset="0.488" stop-color="#adffad"/><stop offset="0.546" stop-color="#b3fba0"/><stop offset="0.619" stop-color="#b4ef89"/><stop offset="1" stop-color="#a99d00"/></linearGradient><linearGradient id="g216" gradientUnits="userSpaceOnUse" x1="80" x2="409"><stop offset="0" stop-color="#049c93"/><stop offset="0.34" stop-color="#83eaaf"/><stop offset="0.429" stop-color="#a0fab1"/><stop offset="0.489" stop-color="#aeffad"/><stop offset="0.544" stop-color="#b3fba1"/><stop offset="0.617" stop-color="#b5ef8a"/><stop offset="1" stop-color="#a99c00"/></linearGradient><linearGradient id="g217" gradientUnits="userSpaceOnUse" x1="80" x2="410"><stop offset="0" stop-color="#049c94"/><stop offset="0.342" stop-color="#84ebaf"/><stop offset="0.427" stop-color="#a0fab2"/><stop offset="0.488" stop-color="#afffae"/><stop offset="0.545" stop-color="#b4faa1"/><stop offset="0.615" stop-color="#b5ef8b"/><stop offset="1" stop-color="#aa9c00"/></linearGradient><linearGradient id="g218" gradientUnits="userSpaceOnUse" x1="81" x2="411"><stop offset="0" stop-color="#049c94"/><stop offset="0.342" stop-color="#85ebb0"/><stop offset="0.427" stop-color="#a1fab3"/><stop offset="0.488" stop-color="#b0ffaf"/><stop offset="0.542" stop-color="#b5fba2"/><stop offset="0.615" stop-color="#b6ef8c"/><stop offset="1" stop-color="#aa9c00"/></linearGradient><linearGradient id="g219" gradientUnits="userSpaceOnUse" x1="81" x2="412"><stop offset="0" stop-color="#049b95"/><stop offset="0.344" stop-color="#86ebb1"/><stop offset="0.429" stop-color="#a2fab3"/><stop offset="0.486" stop-color="#b0ffb0"/><stop offset="0.541" stop-color="#b5fba3"/><stop offset="0.613" stop-color="#b6ef8d"/><stop offset="1" stop-color="#ab9b00"/></linearGradient><linearGradient id="g220" gradientUnits="userSpaceOnUse" x1="81" x2="413"><stop offset="0" stop-color="#049b95"/><stop offset="0.343" stop-color="#86ebb1"/><stop offset="0.431" stop-color="#a3fab4"/><stop offset="0.488" stop-color="#b1ffb0"/><stop offset="0.542" stop-color="#b6fba4"/><stop offset="0.611" stop-color="#b7ef8e"/><stop offset="1" stop-color="#ab9b00"/></linearGradient><linearGradient id="g221" gradientUnits="userSpaceOnUse" x1="81" x2="414"><stop offset="0" stop-color="#049a95"/><stop offset="0.345" stop-color="#87ebb2"/><stop offset="0.429" stop-color="#a3fab5"/><stop offset="0.486" stop-color="#b1ffb1"/><stop offset="0.541" stop-color="#b7fba5"/><stop offset="0.61" stop-color="#b8ef8f"/><stop offset="1" stop-color="#ac9a00"/></linearGradient><linearGradient id="g222" gradientUnits="userSpaceOnUse" x1="81" x2="415"><stop offset="0" stop-color="#049a96"/><stop offset="0.347" stop-color="#89ebb3"/><stop offset="0.431" stop-color="#a5fab5"/><stop offset="0.488" stop-color="#b2ffb1"/><stop offset="0.542" stop-color="#b7fba5"/><stop offset="0.611" stop-color="#b8ef8f"/><stop offset="1" stop-color="#ac9a00"/></linearGradient><linearGradient id="g223" gradientUnits="userSpaceOnUse" x1="81" x2="416"><stop offset="0" stop-color="#049996"/><stop offset="0.349" stop-color="#8aebb3"/><stop offset="0.43" stop-color="#a5fab6"/><stop offset="0.487" stop-color="#b3ffb2"/><stop offset="0.54" stop-color="#b8fba6"/><stop offset="0.609" stop-color="#b9ef90"/><stop offset="1" stop-color="#ad9900"/></linearGradient><linearGradient id="g224" gradientUnits="userSpaceOnUse" x1="81" x2="417"><stop offset="0" stop-color="#049997"/><stop offset="0.351" stop-color="#8becb4"/><stop offset="0.432" stop-color="#a6fab7"/><stop offset="0.488" stop-color="#b4ffb3"/><stop offset="0.542" stop-color="#b9fba6"/><stop offset="0.61" stop-color="#baef90"/><stop offset="1" stop-color="#ad9900"/></linearGradient><linearGradient id="g225" gradientUnits="userSpaceOnUse" x1="81" x2="418"><stop offset="0" stop-color="#049897"/><stop offset="0.353" stop-color="#8cecb5"/><stop offset="0.433" stop-color="#a7fab7"/><stop offset="0.487" stop-color="#b4ffb4"/><stop offset="0.54" stop-color="#b9fba7"/><stop offset="0.608" stop-color="#baef92"/><stop offset="1" stop-color="#ae9800"/></linearGradient><linearGradient id="g226" gradientUnits="userSpaceOnUse" x1="81" x2="419"><stop offset="0" stop-color="#049898"/><stop offset="0.355" stop-color="#8decb5"/><stop offset="0.435" stop-color="#a8fbb8"/><stop offset="0.488" stop-color="#b5ffb4"/><stop offset="0.541" stop-color="#bafba8"/><stop offset="0.609" stop-color="#bbef92"/><stop offset="1" stop-color="#ae9800"/></linearGradient><linearGradient id="g227" gradientUnits="userSpaceOnUse" x1="82" x2="420"><stop offset="0" stop-color="#059898"/><stop offset="0.352" stop-color="#8decb6"/><stop offset="0.432" stop-color="#a8fab9"/><stop offset="0.485" stop-color="#b5ffb5"/><stop offset="0.538" stop-color="#bbfba9"/><stop offset="0.607" stop-color="#bbef93"/><stop offset="1" stop-color="#af9700"/></linearGradient><linearGradient id="g228" gradientUnits="userSpaceOnUse" x1="82" x2="421"><stop offset="0" stop-color="#059798"/><stop offset="0.354" stop-color="#8eecb7"/><stop offset="0.434" stop-color="#a9fbb9"/><stop offset="0.487" stop-color="#b6ffb6"/><stop offset="0.54" stop-color="#bbfba9"/><stop offset="0.605" stop-color="#bcef94"/><stop offset="1" stop-color="#af9700"/></linearGradient><linearGradient id="g229" gradientUnits="userSpaceOnUse" x1="82" x2="422"><stop offset="0" stop-color="#059799"/><stop offset="0.341" stop-color="#8ae9b6"/><stop offset="0.432" stop-color="#a9faba"/><stop offset="0.485" stop-color="#b7ffb6"/><stop offset="0.535" stop-color="#bcfbab"/><stop offset="0.603" stop-color="#bdef95"/><stop offset="1" stop-color="#b09700"/></linearGradient><linearGradient id="g230" gradientUnits="userSpaceOnUse" x1="82" x2="423"><stop offset="0" stop-color="#059699"/><stop offset="0.343" stop-color="#8be9b7"/><stop offset="0.434" stop-color="#aafbbb"/><stop offset="0.487" stop-color="#b8ffb7"/><stop offset="0.54" stop-color="#bdfaaa"/><stop offset="0.604" stop-color="#bdef95"/><stop offset="1" stop-color="#b09600"/></linearGradient><linearGradient id="g231" gradientUnits="userSpaceOnUse" x1="82" x2="424"><stop offset="0" stop-color="#059699"/><stop offset="0.345" stop-color="#8ce9b8"/><stop offset="0.433" stop-color="#abfabb"/><stop offset="0.485" stop-color="#b8ffb8"/><stop offset="0.535" stop-color="#bdfbac"/><stop offset="0.602" stop-color="#beef96"/><stop offset="1" stop-color="#b19600"/></linearGradient><linearGradient id="g232" gradientUnits="userSpaceOnUse" x1="82" x2="425"><stop offset="0" stop-color="#05959a"/><stop offset="0.347" stop-color="#8deab8"/><stop offset="0.434" stop-color="#acfabc"/><stop offset="0.487" stop-color="#b9ffb8"/><stop offset="0.536" stop-color="#befbad"/><stop offset="0.601" stop-color="#bef097"/><stop offset="1" stop-color="#b19500"/></linearGradient><linearGradient id="g233" gradientUnits="userSpaceOnUse" x1="82" x2="426"><stop offset="0" stop-color="#05959a"/><stop offset="0.349" stop-color="#8eeab9"/><stop offset="0.43" stop-color="#abfabc"/><stop offset="0.485" stop-color="#b9ffb9"/><stop offset="0.535" stop-color="#befbae"/><stop offset="0.599" stop-color="#bff099"/><stop offset="1" stop-color="#b29500"/></linearGradient><linearGradient id="g234" gradientUnits="userSpaceOnUse" x1="82" x2="427"><stop offset="0" stop-color="#05949b"/><stop offset="0.351" stop-color="#8feaba"/><stop offset="0.438" stop-color="#aefbbd"/><stop offset="0.487" stop-color="#baffba"/><stop offset="0.536" stop-color="#bffbae"/><stop offset="0.6" stop-color="#c0ef99"/><stop offset="1" stop-color="#b29400"/></linearGradient><linearGradient id="g235" gradientUnits="userSpaceOnUse" x1="83" x2="428"><stop offset="0" stop-color="#05949b"/><stop offset="0.348" stop-color="#90eaba"/><stop offset="0.429" stop-color="#acfabe"/><stop offset="0.484" stop-color="#bfb"/><stop offset="0.533" stop-color="#c0fbaf"/><stop offset="0.597" stop-color="#c0f09a"/><stop offset="1" stop-color="#b39400"/></linearGradient><linearGradient id="g236" gradientUnits="userSpaceOnUse" x1="83" x2="429"><stop offset="0" stop-color="#05949c"/><stop offset="0.35" stop-color="#91eabb"/><stop offset="0.436" stop-color="#affbbe"/><stop offset="0.486" stop-color="#bcffbb"/><stop offset="0.535" stop-color="#c0fbaf"/><stop offset="0.598" stop-color="#c1ef9a"/><stop offset="1" stop-color="#b39401"/></linearGradient><linearGradient id="g237" gradientUnits="userSpaceOnUse" x1="83" x2="430"><stop offset="0" stop-color="#05939c"/><stop offset="0.352" stop-color="#92eabc"/><stop offset="0.438" stop-color="#b0fbbf"/><stop offset="0.487" stop-color="#bdffbc"/><stop offset="0.536" stop-color="#c1fbaf"/><stop offset="0.597" stop-color="#c2ef9b"/><stop offset="1" stop-color="#b49301"/></linearGradient><linearGradient id="g238" gradientUnits="userSpaceOnUse" x1="83" x2="431"><stop offset="0" stop-color="#05939c"/><stop offset="0.353" stop-color="#93eabc"/><stop offset="0.431" stop-color="#affac0"/><stop offset="0.486" stop-color="#bdffbc"/><stop offset="0.534" stop-color="#c2fbb1"/><stop offset="0.595" stop-color="#c2f09c"/><stop offset="1" stop-color="#b59301"/></linearGradient><linearGradient id="g239" gradientUnits="userSpaceOnUse" x1="83" x2="432"><stop offset="0" stop-color="#05929d"/><stop offset="0.355" stop-color="#94eabd"/><stop offset="0.438" stop-color="#b1fbc0"/><stop offset="0.487" stop-color="#beffbd"/><stop offset="0.536" stop-color="#c2fab1"/><stop offset="0.596" stop-color="#c3ef9c"/><stop offset="1" stop-color="#b59201"/></linearGradient><linearGradient id="g240" gradientUnits="userSpaceOnUse" x1="83" x2="433"><stop offset="0" stop-color="#05929d"/><stop offset="0.357" stop-color="#95ebbe"/><stop offset="0.434" stop-color="#b1fac1"/><stop offset="0.486" stop-color="#beffbe"/><stop offset="0.531" stop-color="#c3fbb3"/><stop offset="0.594" stop-color="#c3f09d"/><stop offset="1" stop-color="#b69201"/></linearGradient><linearGradient id="g241" gradientUnits="userSpaceOnUse" x1="83" x2="434"><stop offset="0" stop-color="#05919e"/><stop offset="0.359" stop-color="#96ebbe"/><stop offset="0.439" stop-color="#b3fbc2"/><stop offset="0.487" stop-color="#bfffbe"/><stop offset="0.536" stop-color="#c4fab2"/><stop offset="0.595" stop-color="#c4ef9e"/><stop offset="1" stop-color="#b69101"/></linearGradient><linearGradient id="g242" gradientUnits="userSpaceOnUse" x1="83" x2="435"><stop offset="0" stop-color="#05919e"/><stop offset="0.361" stop-color="#97ebbf"/><stop offset="0.435" stop-color="#b2fac2"/><stop offset="0.486" stop-color="#c0ffbf"/><stop offset="0.531" stop-color="#c4fbb4"/><stop offset="0.591" stop-color="#c5f0a0"/><stop offset="1" stop-color="#b79101"/></linearGradient><linearGradient id="g243" gradientUnits="userSpaceOnUse" x1="84" x2="436"><stop offset="0" stop-color="#06919e"/><stop offset="0.361" stop-color="#98ebc0"/><stop offset="0.44" stop-color="#b5fbc3"/><stop offset="0.486" stop-color="#c1ffc0"/><stop offset="0.531" stop-color="#c5fbb4"/><stop offset="0.591" stop-color="#c5f0a0"/><stop offset="1" stop-color="#b79001"/></linearGradient><linearGradient id="g244" gradientUnits="userSpaceOnUse" x1="84" x2="437"><stop offset="0" stop-color="#06909f"/><stop offset="0.363" stop-color="#9aecc0"/><stop offset="0.433" stop-color="#b3fac4"/><stop offset="0.484" stop-color="#c1ffc1"/><stop offset="0.53" stop-color="#c5fbb5"/><stop offset="0.589" stop-color="#c6f0a1"/><stop offset="1" stop-color="#b89001"/></linearGradient><linearGradient id="g245" gradientUnits="userSpaceOnUse" x1="84" x2="438"><stop offset="0" stop-color="#068f9f"/><stop offset="0.364" stop-color="#9becc1"/><stop offset="0.441" stop-color="#b6fbc4"/><stop offset="0.486" stop-color="#c2ffc1"/><stop offset="0.531" stop-color="#c6fbb6"/><stop offset="0.59" stop-color="#c6f0a1"/><stop offset="1" stop-color="#b89001"/></linearGradient><linearGradient id="g246" gradientUnits="userSpaceOnUse" x1="84" x2="439"><stop offset="0" stop-color="#068fa0"/><stop offset="0.352" stop-color="#96e9c1"/><stop offset="0.434" stop-color="#b4fac5"/><stop offset="0.485" stop-color="#c2ffc2"/><stop offset="0.53" stop-color="#c7fbb7"/><stop offset="0.589" stop-color="#c7f0a2"/><stop offset="1" stop-color="#b98f01"/></linearGradient><linearGradient id="g247" gradientUnits="userSpaceOnUse" x1="84" x2="441"><stop offset="0" stop-color="#068ea0"/><stop offset="0.367" stop-color="#9decc3"/><stop offset="0.44" stop-color="#b7fbc6"/><stop offset="0.485" stop-color="#c3ffc2"/><stop offset="0.529" stop-color="#c7fbb7"/><stop offset="0.585" stop-color="#c8f0a3"/><stop offset="1" stop-color="#b98e00"/></linearGradient><linearGradient id="g248" gradientUnits="userSpaceOnUse" x1="84" x2="442"><stop offset="0" stop-color="#068ea0"/><stop offset="0.355" stop-color="#99e9c2"/><stop offset="0.436" stop-color="#b7fac6"/><stop offset="0.483" stop-color="#c4ffc3"/><stop offset="0.525" stop-color="#c8fbb9"/><stop offset="0.584" stop-color="#c8f0a5"/><stop offset="1" stop-color="#ba8e00"/></linearGradient><linearGradient id="g249" gradientUnits="userSpaceOnUse" x1="84" x2="443"><stop offset="0" stop-color="#068da1"/><stop offset="0.357" stop-color="#9ae9c3"/><stop offset="0.437" stop-color="#b8fac7"/><stop offset="0.485" stop-color="#c5ffc4"/><stop offset="0.526" stop-color="#c9fbb9"/><stop offset="0.582" stop-color="#c9f0a6"/><stop offset="1" stop-color="#ba8d00"/></linearGradient><linearGradient id="g250" gradientUnits="userSpaceOnUse" x1="84" x2="444"><stop offset="0" stop-color="#068da1"/><stop offset="0.358" stop-color="#9beac4"/><stop offset="0.436" stop-color="#b8fac7"/><stop offset="0.483" stop-color="#c5ffc5"/><stop offset="0.525" stop-color="#c9fbba"/><stop offset="0.581" stop-color="#caf1a7"/><stop offset="1" stop-color="#bb8d00"/></linearGradient><linearGradient id="g251" gradientUnits="userSpaceOnUse" x1="85" x2="445"><stop offset="0" stop-color="#068da2"/><stop offset="0.358" stop-color="#9ceac4"/><stop offset="0.436" stop-color="#b9fac8"/><stop offset="0.483" stop-color="#c6ffc5"/><stop offset="0.525" stop-color="#cafbbb"/><stop offset="0.581" stop-color="#caf0a7"/><stop offset="1" stop-color="#bb8c00"/></linearGradient><linearGradient id="g252" gradientUnits="userSpaceOnUse" x1="85" x2="446"><stop offset="0" stop-color="#068ca2"/><stop offset="0.36" stop-color="#9deac5"/><stop offset="0.438" stop-color="#bafac9"/><stop offset="0.482" stop-color="#c6ffc6"/><stop offset="0.524" stop-color="#cafbbc"/><stop offset="0.579" stop-color="#cbf1a8"/><stop offset="1" stop-color="#bc8c00"/></linearGradient><linearGradient id="g253" gradientUnits="userSpaceOnUse" x1="85" x2="447"><stop offset="0" stop-color="#068ca2"/><stop offset="0.362" stop-color="#9eeac6"/><stop offset="0.436" stop-color="#bafac9"/><stop offset="0.483" stop-color="#c7ffc7"/><stop offset="0.525" stop-color="#cbfbbc"/><stop offset="0.58" stop-color="#cbf0a8"/><stop offset="1" stop-color="#bc8c00"/></linearGradient><linearGradient id="g254" gradientUnits="userSpaceOnUse" x1="85" x2="448"><stop offset="0" stop-color="#068ba3"/><stop offset="0.361" stop-color="#9eeac6"/><stop offset="0.438" stop-color="#bbfaca"/><stop offset="0.482" stop-color="#c8ffc7"/><stop offset="0.523" stop-color="#ccfbbd"/><stop offset="0.579" stop-color="#ccf0a9"/><stop offset="1" stop-color="#bd8b00"/></linearGradient><linearGradient id="g255" gradientUnits="userSpaceOnUse" x1="85" x2="449"><stop offset="0" stop-color="#068ba3"/><stop offset="0.365" stop-color="#a0ebc7"/><stop offset="0.44" stop-color="#bcfbcb"/><stop offset="0.484" stop-color="#c9ffc8"/><stop offset="0.525" stop-color="#ccfbbd"/><stop offset="0.577" stop-color="#cdf1aa"/><stop offset="1" stop-color="#bd8b00"/></linearGradient><linearGradient id="g256" gradientUnits="userSpaceOnUse" x1="85" x2="450"><stop offset="0" stop-color="#068aa4"/><stop offset="0.364" stop-color="#a0eac7"/><stop offset="0.438" stop-color="#bdfacb"/><stop offset="0.482" stop-color="#c9ffc9"/><stop offset="0.523" stop-color="#cdfbbe"/><stop offset="0.575" stop-color="#cdf1ac"/><stop offset="1" stop-color="#be8a00"/></linearGradient><linearGradient id="g257" gradientUnits="userSpaceOnUse" x1="85" x2="451"><stop offset="0" stop-color="#068aa4"/><stop offset="0.369" stop-color="#a3ebc8"/><stop offset="0.44" stop-color="#befacc"/><stop offset="0.484" stop-color="#caffc9"/><stop offset="0.525" stop-color="#cefbbf"/><stop offset="0.577" stop-color="#cef1ac"/><stop offset="1" stop-color="#be8a00"/></linearGradient><linearGradient id="g258" gradientUnits="userSpaceOnUse" x1="86" x2="452"><stop offset="0" stop-color="#078aa4"/><stop offset="0.366" stop-color="#a3ebc9"/><stop offset="0.44" stop-color="#bffbcd"/><stop offset="0.481" stop-color="#caffca"/><stop offset="0.519" stop-color="#cefcc0"/><stop offset="0.574" stop-color="#cef1ad"/><stop offset="1" stop-color="#bf8900"/></linearGradient><linearGradient id="g259" gradientUnits="userSpaceOnUse" x1="86" x2="453"><stop offset="0" stop-color="#0789a5"/><stop offset="0.371" stop-color="#a5ecca"/><stop offset="0.441" stop-color="#c0fbcd"/><stop offset="0.482" stop-color="#cbffcb"/><stop offset="0.52" stop-color="#cffbc1"/><stop offset="0.572" stop-color="#cff1ae"/><stop offset="1" stop-color="#bf8900"/></linearGradient><linearGradient id="g260" gradientUnits="userSpaceOnUse" x1="86" x2="454"><stop offset="0" stop-color="#0789a5"/><stop offset="0.359" stop-color="#a0e8c9"/><stop offset="0.435" stop-color="#beface"/><stop offset="0.481" stop-color="#cfc"/><stop offset="0.519" stop-color="#cffbc2"/><stop offset="0.571" stop-color="#d0f1af"/><stop offset="1" stop-color="#c08800"/></linearGradient><linearGradient id="g261" gradientUnits="userSpaceOnUse" x1="86" x2="455"><stop offset="0" stop-color="#0788a6"/><stop offset="0.371" stop-color="#a6ebcb"/><stop offset="0.442" stop-color="#c1fbcf"/><stop offset="0.482" stop-color="#cdffcc"/><stop offset="0.52" stop-color="#d0fbc2"/><stop offset="0.572" stop-color="#d0f1af"/><stop offset="1" stop-color="#c08800"/></linearGradient><linearGradient id="g262" gradientUnits="userSpaceOnUse" x1="86" x2="456"><stop offset="0" stop-color="#0788a6"/><stop offset="0.362" stop-color="#a3e9cb"/><stop offset="0.435" stop-color="#bffacf"/><stop offset="0.481" stop-color="#cdffcd"/><stop offset="0.519" stop-color="#d1fbc3"/><stop offset="0.57" stop-color="#d1f1b0"/><stop offset="1" stop-color="#c18800"/></linearGradient><linearGradient id="g263" gradientUnits="userSpaceOnUse" x1="86" x2="457"><stop offset="0" stop-color="#0787a6"/><stop offset="0.364" stop-color="#a4e9cb"/><stop offset="0.437" stop-color="#c0fad0"/><stop offset="0.482" stop-color="#ceffcd"/><stop offset="0.52" stop-color="#d1fbc3"/><stop offset="0.569" stop-color="#d2f1b1"/><stop offset="1" stop-color="#c18700"/></linearGradient><linearGradient id="g264" gradientUnits="userSpaceOnUse" x1="86" x2="458"><stop offset="0" stop-color="#0787a7"/><stop offset="0.366" stop-color="#a5e9cc"/><stop offset="0.438" stop-color="#c2fad0"/><stop offset="0.481" stop-color="#ceffce"/><stop offset="0.519" stop-color="#d2fbc4"/><stop offset="0.567" stop-color="#d2f2b3"/><stop offset="1" stop-color="#c28700"/></linearGradient><linearGradient id="g265" gradientUnits="userSpaceOnUse" x1="87" x2="459"><stop offset="0" stop-color="#0787a7"/><stop offset="0.366" stop-color="#a6eacd"/><stop offset="0.438" stop-color="#c3fad1"/><stop offset="0.481" stop-color="#cfffcf"/><stop offset="0.519" stop-color="#d3fbc5"/><stop offset="0.567" stop-color="#d3f1b3"/><stop offset="1" stop-color="#c38600"/></linearGradient><linearGradient id="g266" gradientUnits="userSpaceOnUse" x1="87" x2="460"><stop offset="0" stop-color="#0786a8"/><stop offset="0.367" stop-color="#a7eacd"/><stop offset="0.437" stop-color="#c3fad2"/><stop offset="0.48" stop-color="#d0ffd0"/><stop offset="0.517" stop-color="#d3fbc6"/><stop offset="0.566" stop-color="#d3f1b4"/><stop offset="1" stop-color="#c38600"/></linearGradient><linearGradient id="g267" gradientUnits="userSpaceOnUse" x1="87" x2="461"><stop offset="0" stop-color="#0785a8"/><stop offset="0.369" stop-color="#a8eace"/><stop offset="0.439" stop-color="#c4fad2"/><stop offset="0.481" stop-color="#d1ffd0"/><stop offset="0.516" stop-color="#d4fcc7"/><stop offset="0.564" stop-color="#d4f2b5"/><stop offset="1" stop-color="#c48500"/></linearGradient><linearGradient id="g268" gradientUnits="userSpaceOnUse" x1="87" x2="462"><stop offset="0" stop-color="#0785a8"/><stop offset="0.371" stop-color="#a9eacf"/><stop offset="0.44" stop-color="#c5fad3"/><stop offset="0.48" stop-color="#d1ffd1"/><stop offset="0.515" stop-color="#d5fcc8"/><stop offset="0.563" stop-color="#d5f2b6"/><stop offset="1" stop-color="#c48500"/></linearGradient><linearGradient id="g269" gradientUnits="userSpaceOnUse" x1="87" x2="463"><stop offset="0" stop-color="#0784a9"/><stop offset="0.372" stop-color="#aaeacf"/><stop offset="0.441" stop-color="#c6fad4"/><stop offset="0.481" stop-color="#d2ffd2"/><stop offset="0.516" stop-color="#d5fcc8"/><stop offset="0.564" stop-color="#d5f1b6"/><stop offset="1" stop-color="#c58500"/></linearGradient><linearGradient id="g270" gradientUnits="userSpaceOnUse" x1="87" x2="464"><stop offset="0" stop-color="#0784a9"/><stop offset="0.374" stop-color="#acebd0"/><stop offset="0.44" stop-color="#c6fad4"/><stop offset="0.48" stop-color="#d2ffd2"/><stop offset="0.515" stop-color="#d6fcc9"/><stop offset="0.562" stop-color="#d6f2b7"/><stop offset="1" stop-color="#c58401"/></linearGradient><linearGradient id="g271" gradientUnits="userSpaceOnUse" x1="87" x2="465"><stop offset="0" stop-color="#0783aa"/><stop offset="0.376" stop-color="#adebd1"/><stop offset="0.442" stop-color="#c7fad5"/><stop offset="0.481" stop-color="#d3ffd3"/><stop offset="0.516" stop-color="#d7fbca"/><stop offset="0.561" stop-color="#d6f2b9"/><stop offset="1" stop-color="#c68401"/></linearGradient><linearGradient id="g272" gradientUnits="userSpaceOnUse" x1="88" x2="466"><stop offset="0" stop-color="#0883aa"/><stop offset="0.376" stop-color="#aeebd2"/><stop offset="0.442" stop-color="#c8fad6"/><stop offset="0.481" stop-color="#d4ffd3"/><stop offset="0.516" stop-color="#d7fbca"/><stop offset="0.561" stop-color="#d7f2b9"/><stop offset="1" stop-color="#c68301"/></linearGradient><linearGradient id="g273" gradientUnits="userSpaceOnUse" x1="88" x2="467"><stop offset="0" stop-color="#0883aa"/><stop offset="0.377" stop-color="#afebd2"/><stop offset="0.443" stop-color="#cafbd6"/><stop offset="0.48" stop-color="#d5ffd4"/><stop offset="0.515" stop-color="#d8fbcb"/><stop offset="0.559" stop-color="#d8f2ba"/><stop offset="1" stop-color="#c78301"/></linearGradient><linearGradient id="g274" gradientUnits="userSpaceOnUse" x1="88" x2="468"><stop offset="0" stop-color="#0882ab"/><stop offset="0.379" stop-color="#b0ecd3"/><stop offset="0.445" stop-color="#cbfbd7"/><stop offset="0.482" stop-color="#d5ffd5"/><stop offset="0.513" stop-color="#d8fccc"/><stop offset="0.558" stop-color="#d8f2bb"/><stop offset="1" stop-color="#c78201"/></linearGradient><linearGradient id="g275" gradientUnits="userSpaceOnUse" x1="88" x2="469"><stop offset="0" stop-color="#0882ab"/><stop offset="0.37" stop-color="#ade9d3"/><stop offset="0.444" stop-color="#cbfbd8"/><stop offset="0.48" stop-color="#d6ffd6"/><stop offset="0.512" stop-color="#d9fccd"/><stop offset="0.556" stop-color="#d9f2bc"/><stop offset="1" stop-color="#c88201"/></linearGradient><linearGradient id="g276" gradientUnits="userSpaceOnUse" x1="88" x2="470"><stop offset="0" stop-color="#0881ab"/><stop offset="0.372" stop-color="#aee9d3"/><stop offset="0.442" stop-color="#cbfad8"/><stop offset="0.482" stop-color="#d7ffd6"/><stop offset="0.513" stop-color="#dafccd"/><stop offset="0.558" stop-color="#d9f2bc"/><stop offset="1" stop-color="#c88101"/></linearGradient><linearGradient id="g277" gradientUnits="userSpaceOnUse" x1="88" x2="471"><stop offset="0" stop-color="#0881ac"/><stop offset="0.373" stop-color="#afe9d4"/><stop offset="0.441" stop-color="#cbfad9"/><stop offset="0.48" stop-color="#d7ffd7"/><stop offset="0.512" stop-color="#dafcce"/><stop offset="0.556" stop-color="#daf2bd"/><stop offset="1" stop-color="#c98101"/></linearGradient><linearGradient id="g278" gradientUnits="userSpaceOnUse" x1="88" x2="473"><stop offset="0" stop-color="#0880ac"/><stop offset="0.374" stop-color="#b0ead5"/><stop offset="0.444" stop-color="#cdfbd9"/><stop offset="0.481" stop-color="#d8ffd8"/><stop offset="0.512" stop-color="#dbfbcf"/><stop offset="0.553" stop-color="#dbf2be"/><stop offset="1" stop-color="#c98000"/></linearGradient><linearGradient id="g279" gradientUnits="userSpaceOnUse" x1="89" x2="474"><stop offset="0" stop-color="#0880ad"/><stop offset="0.374" stop-color="#b1ead5"/><stop offset="0.439" stop-color="#ccfada"/><stop offset="0.478" stop-color="#d9ffd8"/><stop offset="0.509" stop-color="#dcfcd0"/><stop offset="0.551" stop-color="#dbf3c0"/><stop offset="1" stop-color="#ca8000"/></linearGradient><linearGradient id="g280" gradientUnits="userSpaceOnUse" x1="89" x2="475"><stop offset="0" stop-color="#087fad"/><stop offset="0.378" stop-color="#b3ebd6"/><stop offset="0.443" stop-color="#cefbdb"/><stop offset="0.479" stop-color="#d9ffd9"/><stop offset="0.508" stop-color="#dcfcd1"/><stop offset="0.549" stop-color="#dcf3c1"/><stop offset="1" stop-color="#ca7f00"/></linearGradient><linearGradient id="g281" gradientUnits="userSpaceOnUse" x1="89" x2="476"><stop offset="0" stop-color="#087fad"/><stop offset="0.38" stop-color="#b5ebd7"/><stop offset="0.442" stop-color="#cefadb"/><stop offset="0.478" stop-color="#daffda"/><stop offset="0.506" stop-color="#ddfcd2"/><stop offset="0.548" stop-color="#ddf3c2"/><stop offset="1" stop-color="#cb7f00"/></linearGradient><linearGradient id="g282" gradientUnits="userSpaceOnUse" x1="89" x2="477"><stop offset="0" stop-color="#087eae"/><stop offset="0.381" stop-color="#b6ebd8"/><stop offset="0.446" stop-color="#d1fbdc"/><stop offset="0.479" stop-color="#dbffda"/><stop offset="0.508" stop-color="#ddfcd2"/><stop offset="0.549" stop-color="#ddf3c2"/><stop offset="1" stop-color="#cb7e00"/></linearGradient><linearGradient id="g283" gradientUnits="userSpaceOnUse" x1="89" x2="478"><stop offset="0" stop-color="#087eae"/><stop offset="0.383" stop-color="#b7ebd8"/><stop offset="0.442" stop-color="#d0fadd"/><stop offset="0.478" stop-color="#dbffdb"/><stop offset="0.506" stop-color="#defcd3"/><stop offset="0.548" stop-color="#def3c3"/><stop offset="1" stop-color="#cc7e00"/></linearGradient><linearGradient id="g284" gradientUnits="userSpaceOnUse" x1="89" x2="479"><stop offset="0" stop-color="#087daf"/><stop offset="0.385" stop-color="#b8ecd9"/><stop offset="0.446" stop-color="#d2fbdd"/><stop offset="0.479" stop-color="#dcffdc"/><stop offset="0.508" stop-color="#dffcd4"/><stop offset="0.546" stop-color="#def3c4"/><stop offset="1" stop-color="#cc7d00"/></linearGradient><linearGradient id="g285" gradientUnits="userSpaceOnUse" x1="90" x2="480"><stop offset="0" stop-color="#097daf"/><stop offset="0.385" stop-color="#b9ecda"/><stop offset="0.444" stop-color="#d2fbde"/><stop offset="0.477" stop-color="#dfd"/><stop offset="0.505" stop-color="#dffcd5"/><stop offset="0.544" stop-color="#dff3c5"/><stop offset="1" stop-color="#cd7d00"/></linearGradient><linearGradient id="g286" gradientUnits="userSpaceOnUse" x1="90" x2="481"><stop offset="0" stop-color="#097daf"/><stop offset="0.386" stop-color="#baecda"/><stop offset="0.445" stop-color="#d3fbdf"/><stop offset="0.478" stop-color="#dfd"/><stop offset="0.506" stop-color="#e0fcd5"/><stop offset="0.545" stop-color="#e0f3c5"/><stop offset="1" stop-color="#cd7d00"/></linearGradient><linearGradient id="g287" gradientUnits="userSpaceOnUse" x1="90" x2="482"><stop offset="0" stop-color="#097cb0"/><stop offset="0.378" stop-color="#b7eada"/><stop offset="0.444" stop-color="#d3fadf"/><stop offset="0.477" stop-color="#deffde"/><stop offset="0.503" stop-color="#e1fcd7"/><stop offset="0.541" stop-color="#e0f4c8"/><stop offset="1" stop-color="#ce7c00"/></linearGradient><linearGradient id="g288" gradientUnits="userSpaceOnUse" x1="90" x2="483"><stop offset="0" stop-color="#097cb0"/><stop offset="0.379" stop-color="#b8eadb"/><stop offset="0.445" stop-color="#d4fbe0"/><stop offset="0.478" stop-color="#dfffde"/><stop offset="0.504" stop-color="#e1fcd7"/><stop offset="0.542" stop-color="#e1f3c8"/><stop offset="1" stop-color="#ce7c00"/></linearGradient><linearGradient id="g289" gradientUnits="userSpaceOnUse" x1="90" x2="484"><stop offset="0" stop-color="#097bb0"/><stop offset="0.383" stop-color="#baebdc"/><stop offset="0.444" stop-color="#d4fae0"/><stop offset="0.477" stop-color="#dfffdf"/><stop offset="0.503" stop-color="#e2fcd8"/><stop offset="0.541" stop-color="#e1f4c9"/><stop offset="1" stop-color="#cf7b00"/></linearGradient><linearGradient id="g290" gradientUnits="userSpaceOnUse" x1="90" x2="485"><stop offset="0" stop-color="#097bb1"/><stop offset="0.385" stop-color="#bbebdc"/><stop offset="0.446" stop-color="#d5fae1"/><stop offset="0.478" stop-color="#e0ffe0"/><stop offset="0.504" stop-color="#e2fcd8"/><stop offset="0.542" stop-color="#e2f3c9"/><stop offset="1" stop-color="#cf7b00"/></linearGradient><linearGradient id="g291" gradientUnits="userSpaceOnUse" x1="91" x2="486"><stop offset="0" stop-color="#097bb1"/><stop offset="0.385" stop-color="#bcebdd"/><stop offset="0.446" stop-color="#d7fbe2"/><stop offset="0.476" stop-color="#e1ffe1"/><stop offset="0.501" stop-color="#e3fcda"/><stop offset="0.537" stop-color="#e3f4cb"/><stop offset="1" stop-color="#d07a00"/></linearGradient><linearGradient id="g292" gradientUnits="userSpaceOnUse" x1="91" x2="487"><stop offset="0" stop-color="#097ab2"/><stop offset="0.386" stop-color="#bdebde"/><stop offset="0.447" stop-color="#d8fbe2"/><stop offset="0.477" stop-color="#e1ffe1"/><stop offset="0.503" stop-color="#e4fcda"/><stop offset="0.538" stop-color="#e3f4cb"/><stop offset="1" stop-color="#d17a00"/></linearGradient><linearGradient id="g293" gradientUnits="userSpaceOnUse" x1="91" x2="488"><stop offset="0" stop-color="#0979b2"/><stop offset="0.388" stop-color="#beebde"/><stop offset="0.446" stop-color="#d8fbe3"/><stop offset="0.476" stop-color="#e2ffe2"/><stop offset="0.501" stop-color="#e4fcdb"/><stop offset="0.537" stop-color="#e4f4cc"/><stop offset="1" stop-color="#d17900"/></linearGradient><linearGradient id="g294" gradientUnits="userSpaceOnUse" x1="91" x2="489"><stop offset="0" stop-color="#0979b2"/><stop offset="0.392" stop-color="#c1ecdf"/><stop offset="0.45" stop-color="#dafbe4"/><stop offset="0.477" stop-color="#e3ffe3"/><stop offset="0.5" stop-color="#e5fcdc"/><stop offset="0.535" stop-color="#e5f4ce"/><stop offset="1" stop-color="#d27900"/></linearGradient><linearGradient id="g295" gradientUnits="userSpaceOnUse" x1="91" x2="490"><stop offset="0" stop-color="#0978b3"/><stop offset="0.393" stop-color="#c2ede0"/><stop offset="0.446" stop-color="#d9fae4"/><stop offset="0.476" stop-color="#e3ffe3"/><stop offset="0.499" stop-color="#e6fddd"/><stop offset="0.534" stop-color="#e5f4cf"/><stop offset="1" stop-color="#d27800"/></linearGradient><linearGradient id="g296" gradientUnits="userSpaceOnUse" x1="91" x2="491"><stop offset="0" stop-color="#0978b3"/><stop offset="0.395" stop-color="#c3ede1"/><stop offset="0.45" stop-color="#dbfbe5"/><stop offset="0.477" stop-color="#e4ffe4"/><stop offset="0.5" stop-color="#e6fcdd"/><stop offset="0.535" stop-color="#e6f4cf"/><stop offset="1" stop-color="#d37800"/></linearGradient><linearGradient id="g297" gradientUnits="userSpaceOnUse" x1="92" x2="492"><stop offset="0" stop-color="#0a78b4"/><stop offset="0.385" stop-color="#bfeae0"/><stop offset="0.445" stop-color="#dafae5"/><stop offset="0.475" stop-color="#e5ffe5"/><stop offset="0.497" stop-color="#e7fdde"/><stop offset="0.53" stop-color="#e6f5d1"/><stop offset="1" stop-color="#d37800"/></linearGradient><linearGradient id="g298" gradientUnits="userSpaceOnUse" x1="92" x2="493"><stop offset="0" stop-color="#0a77b4"/><stop offset="0.389" stop-color="#c2ebe1"/><stop offset="0.446" stop-color="#dbfae6"/><stop offset="0.476" stop-color="#e5ffe5"/><stop offset="0.531" stop-color="#e7f5d1"/><stop offset="1" stop-color="#d47700"/></linearGradient><linearGradient id="g299" gradientUnits="userSpaceOnUse" x1="92" x2="494"><stop offset="0" stop-color="#0a77b4"/><stop offset="0.391" stop-color="#c3ebe2"/><stop offset="0.448" stop-color="#dcfbe7"/><stop offset="0.478" stop-color="#e6ffe6"/><stop offset="0.532" stop-color="#e8f4d1"/><stop offset="1" stop-color="#d47700"/></linearGradient><linearGradient id="g300" gradientUnits="userSpaceOnUse" x1="92" x2="495"><stop offset="0" stop-color="#0a76b5"/><stop offset="0.392" stop-color="#c4ece3"/><stop offset="0.449" stop-color="#defbe8"/><stop offset="0.476" stop-color="#e7ffe7"/><stop offset="0.529" stop-color="#e8f5d3"/><stop offset="1" stop-color="#d57600"/></linearGradient><linearGradient id="g301" gradientUnits="userSpaceOnUse" x1="92" x2="496"><stop offset="0" stop-color="#0a76b5"/><stop offset="0.396" stop-color="#c6ece3"/><stop offset="0.45" stop-color="#dffbe8"/><stop offset="0.478" stop-color="#e8ffe7"/><stop offset="0.53" stop-color="#e9f5d3"/><stop offset="1" stop-color="#d57600"/></linearGradient><linearGradient id="g302" gradientUnits="userSpaceOnUse" x1="92" x2="497"><stop offset="0" stop-color="#0a75b5"/><stop offset="0.398" stop-color="#c7ede4"/><stop offset="0.452" stop-color="#e0fbe9"/><stop offset="0.477" stop-color="#e8ffe8"/><stop offset="0.526" stop-color="#eaf5d6"/><stop offset="1" stop-color="#d67500"/></linearGradient><linearGradient id="g303" gradientUnits="userSpaceOnUse" x1="93" x2="498"><stop offset="0" stop-color="#0a75b6"/><stop offset="0.4" stop-color="#caeee5"/><stop offset="0.452" stop-color="#e1fcea"/><stop offset="0.477" stop-color="#e9ffe9"/><stop offset="0.526" stop-color="#eaf5d6"/><stop offset="1" stop-color="#d67500"/></linearGradient><linearGradient id="g304" gradientUnits="userSpaceOnUse" x1="93" x2="499"><stop offset="0" stop-color="#0a75b6"/><stop offset="0.401" stop-color="#cbeee6"/><stop offset="0.451" stop-color="#e1fbea"/><stop offset="0.475" stop-color="#e9ffe9"/><stop offset="0.525" stop-color="#ebf5d7"/><stop offset="1" stop-color="#d77500"/></linearGradient><linearGradient id="g305" gradientUnits="userSpaceOnUse" x1="93" x2="500"><stop offset="0" stop-color="#0a74b7"/><stop offset="0.403" stop-color="#cceee6"/><stop offset="0.452" stop-color="#e2fbeb"/><stop offset="0.477" stop-color="#eaffea"/><stop offset="0.523" stop-color="#ebf6d8"/><stop offset="1" stop-color="#d77400"/></linearGradient><linearGradient id="g306" gradientUnits="userSpaceOnUse" x1="93" x2="501"><stop offset="0" stop-color="#0a73b7"/><stop offset="0.395" stop-color="#c8ebe6"/><stop offset="0.451" stop-color="#e2fbeb"/><stop offset="0.475" stop-color="#ebffeb"/><stop offset="0.522" stop-color="#ecf6d9"/><stop offset="1" stop-color="#d87401"/></linearGradient><linearGradient id="g307" gradientUnits="userSpaceOnUse" x1="93" x2="502"><stop offset="0" stop-color="#0a73b7"/><stop offset="0.408" stop-color="#cfefe8"/><stop offset="0.455" stop-color="#e4fcec"/><stop offset="0.477" stop-color="#ecffeb"/><stop offset="0.521" stop-color="#edf6da"/><stop offset="1" stop-color="#d87301"/></linearGradient><linearGradient id="g308" gradientUnits="userSpaceOnUse" x1="94" x2="503"><stop offset="0" stop-color="#0b73b8"/><stop offset="0.399" stop-color="#ccece8"/><stop offset="0.45" stop-color="#e3fbed"/><stop offset="0.474" stop-color="#ecffec"/><stop offset="0.518" stop-color="#edf6db"/><stop offset="1" stop-color="#d97301"/></linearGradient><linearGradient id="g309" gradientUnits="userSpaceOnUse" x1="94" x2="504"><stop offset="0" stop-color="#0b72b8"/><stop offset="0.402" stop-color="#ceede9"/><stop offset="0.454" stop-color="#e5fced"/><stop offset="0.476" stop-color="#edffed"/><stop offset="0.517" stop-color="#eef6dd"/><stop offset="1" stop-color="#d97201"/></linearGradient><linearGradient id="g310" gradientUnits="userSpaceOnUse" x1="94" x2="505"><stop offset="0" stop-color="#0b72b8"/><stop offset="0.404" stop-color="#cfeee9"/><stop offset="0.453" stop-color="#e6fbee"/><stop offset="0.474" stop-color="#edffee"/><stop offset="0.516" stop-color="#eef7de"/><stop offset="1" stop-color="#da7201"/></linearGradient><linearGradient id="g311" gradientUnits="userSpaceOnUse" x1="94" x2="506"><stop offset="0" stop-color="#0b71b9"/><stop offset="0.408" stop-color="#d1efea"/><stop offset="0.454" stop-color="#e7fcef"/><stop offset="0.476" stop-color="#efe"/><stop offset="0.515" stop-color="#eff7df"/><stop offset="1" stop-color="#da7201"/></linearGradient><linearGradient id="g312" gradientUnits="userSpaceOnUse" x1="94" x2="507"><stop offset="0" stop-color="#0b71b9"/><stop offset="0.409" stop-color="#d2efeb"/><stop offset="0.475" stop-color="#efffef"/><stop offset="0.513" stop-color="#f0f7e0"/><stop offset="1" stop-color="#db7101"/></linearGradient><linearGradient id="g313" gradientUnits="userSpaceOnUse" x1="94" x2="509"><stop offset="0" stop-color="#0b70ba"/><stop offset="0.412" stop-color="#d5f0ec"/><stop offset="0.455" stop-color="#e9fcf0"/><stop offset="0.475" stop-color="#f0ffef"/><stop offset="0.511" stop-color="#f0f7e1"/><stop offset="1" stop-color="#db7000"/></linearGradient><linearGradient id="g314" gradientUnits="userSpaceOnUse" x1="95" x2="510"><stop offset="0" stop-color="#0b70ba"/><stop offset="0.405" stop-color="#d2eeec"/><stop offset="0.472" stop-color="#f0fff0"/><stop offset="0.506" stop-color="#f1f8e3"/><stop offset="1" stop-color="#dc7000"/></linearGradient><linearGradient id="g315" gradientUnits="userSpaceOnUse" x1="95" x2="511"><stop offset="0" stop-color="#0b70ba"/><stop offset="0.409" stop-color="#d4efed"/><stop offset="0.454" stop-color="#eafcf1"/><stop offset="0.474" stop-color="#f1fff1"/><stop offset="0.507" stop-color="#f2f8e3"/><stop offset="1" stop-color="#dc6f00"/></linearGradient><linearGradient id="g316" gradientUnits="userSpaceOnUse" x1="95" x2="512"><stop offset="0" stop-color="#0b6fbb"/><stop offset="0.41" stop-color="#d6efed"/><stop offset="0.472" stop-color="#f1fff2"/><stop offset="0.504" stop-color="#f2f9e6"/><stop offset="1" stop-color="#dd6f00"/></linearGradient><linearGradient id="g317" gradientUnits="userSpaceOnUse" x1="95" x2="513"><stop offset="0" stop-color="#0b6ebb"/><stop offset="0.414" stop-color="#d8f0ee"/><stop offset="0.474" stop-color="#f2fff2"/><stop offset="0.505" stop-color="#f3f8e6"/><stop offset="1" stop-color="#de6e00"/></linearGradient><linearGradient id="g318" gradientUnits="userSpaceOnUse" x1="95" x2="514"><stop offset="0" stop-color="#0b6ebc"/><stop offset="0.406" stop-color="#d4edee"/><stop offset="0.473" stop-color="#f3fff3"/><stop offset="0.501" stop-color="#f4f9e8"/><stop offset="1" stop-color="#de6e00"/></linearGradient><linearGradient id="g319" gradientUnits="userSpaceOnUse" x1="96" x2="515"><stop offset="0" stop-color="#0c6ebc"/><stop offset="0.408" stop-color="#d7eeef"/><stop offset="0.473" stop-color="#f4fff4"/><stop offset="0.501" stop-color="#f4f9e8"/><stop offset="1" stop-color="#df6e00"/></linearGradient><linearGradient id="g320" gradientUnits="userSpaceOnUse" x1="96" x2="516"><stop offset="0" stop-color="#0c6dbc"/><stop offset="0.412" stop-color="#d9eff0"/><stop offset="0.471" stop-color="#f4fff4"/><stop offset="0.498" stop-color="#f5faea"/><stop offset="1" stop-color="#df6d00"/></linearGradient><linearGradient id="g321" gradientUnits="userSpaceOnUse" x1="96" x2="517"><stop offset="0" stop-color="#0c6dbd"/><stop offset="0.416" stop-color="#dbf0f1"/><stop offset="0.473" stop-color="#f5fff5"/><stop offset="1" stop-color="#e06d00"/></linearGradient><linearGradient id="g322" gradientUnits="userSpaceOnUse" x1="96" x2="518"><stop offset="0" stop-color="#0c6cbd"/><stop offset="0.419" stop-color="#ddf1f1"/><stop offset="0.472" stop-color="#f5fff6"/><stop offset="0.495" stop-color="#f6faed"/><stop offset="1" stop-color="#e06c00"/></linearGradient><linearGradient id="g323" gradientUnits="userSpaceOnUse" x1="96" x2="519"><stop offset="0" stop-color="#0c6cbd"/><stop offset="0.423" stop-color="#e0f2f2"/><stop offset="0.473" stop-color="#f6fff6"/><stop offset="1" stop-color="#e16c00"/></linearGradient><linearGradient id="g324" gradientUnits="userSpaceOnUse" x1="97" x2="520"><stop offset="0" stop-color="#0c6cbe"/><stop offset="0.426" stop-color="#e2f3f3"/><stop offset="0.473" stop-color="#f7fff7"/><stop offset="1" stop-color="#e16b00"/></linearGradient><linearGradient id="g325" gradientUnits="userSpaceOnUse" x1="97" x2="521"><stop offset="0" stop-color="#0c6bbe"/><stop offset="0.422" stop-color="#e1f1f3"/><stop offset="0.472" stop-color="#f8fff8"/><stop offset="1" stop-color="#e26b00"/></linearGradient><linearGradient id="g326" gradientUnits="userSpaceOnUse" x1="97" x2="522"><stop offset="0" stop-color="#0c6abf"/><stop offset="0.426" stop-color="#e3f2f4"/><stop offset="0.473" stop-color="#f9fff8"/><stop offset="1" stop-color="#e26a00"/></linearGradient><linearGradient id="g327" gradientUnits="userSpaceOnUse" x1="97" x2="523"><stop offset="0" stop-color="#0c6abf"/><stop offset="0.472" stop-color="#f9fff9"/><stop offset="1" stop-color="#e36a00"/></linearGradient><linearGradient id="g328" gradientUnits="userSpaceOnUse" x1="97" x2="524"><stop offset="0" stop-color="#0c69bf"/><stop offset="0.436" stop-color="#e9f5f7"/><stop offset="0.473" stop-color="#fafff9"/><stop offset="1" stop-color="#e36900"/></linearGradient><linearGradient id="g329" gradientUnits="userSpaceOnUse" x1="98" x2="525"><stop offset="0" stop-color="#0d69c0"/><stop offset="0.471" stop-color="#fafffa"/><stop offset="1" stop-color="#e46900"/></linearGradient><linearGradient id="g330" gradientUnits="userSpaceOnUse" x1="98" x2="526"><stop offset="0" stop-color="#0d69c0"/><stop offset="0.472" stop-color="#fbfffb"/><stop offset="1" stop-color="#e46900"/></linearGradient><linearGradient id="g331" gradientUnits="userSpaceOnUse" x1="98" x2="527"><stop offset="0" stop-color="#0d68c0"/><stop offset="0.471" stop-color="#fcfffc"/><stop offset="1" stop-color="#e56800"/></linearGradient><linearGradient id="g332" gradientUnits="userSpaceOnUse" x1="98" x2="528"><stop offset="0" stop-color="#0d68c1"/><stop offset="0.472" stop-color="#fdfffc"/><stop offset="1" stop-color="#e56800"/></linearGradient><linearGradient id="g333" gradientUnits="userSpaceOnUse" x1="98" x2="529"><stop offset="0" stop-color="#0d67c1"/><stop offset="0.471" stop-color="#fdfffd"/><stop offset="1" stop-color="#e66700"/></linearGradient><linearGradient id="g334" gradientUnits="userSpaceOnUse" x1="98" x2="530"><stop offset="0" stop-color="#0d67c1"/><stop offset="0.472" stop-color="#fefffe"/><stop offset="1" stop-color="#e66700"/></linearGradient><linearGradient id="g335" gradientUnits="userSpaceOnUse" x1="99" x2="531"><stop offset="0" stop-color="#0d67c2"/><stop offset="0.47" stop-color="#fefffe"/><stop offset="1" stop-color="#e76600"/></linearGradient><linearGradient id="g336" gradientUnits="userSpaceOnUse" x1="99" x2="532"><stop offset="0" stop-color="#0d66c2"/><stop offset="0.471" stop-color="#fff"/><stop offset="1" stop-color="#e76600"/></linearGradient><linearGradient id="g337" gradientUnits="userSpaceOnUse" x1="99" x2="533"><stop offset="0" stop-color="#0d65c3"/><stop offset="0.468" stop-color="#fefeff"/><stop offset="0.486" stop-color="#fffaf8"/><stop offset="1" stop-color="#e86600"/></linearGradient><linearGradient id="g338" gradientUnits="userSpaceOnUse" x1="99" x2="534"><stop offset="0" stop-color="#0d65c3"/><stop offset="0.467" stop-color="#fdfcff"/><stop offset="0.499" stop-color="#fff7f3"/><stop offset="1" stop-color="#e86500"/></linearGradient><linearGradient id="g339" gradientUnits="userSpaceOnUse" x1="100" x2="535"><stop offset="0" stop-color="#0e65c3"/><stop offset="0.462" stop-color="#fcfbff"/><stop offset="0.51" stop-color="#fff3ed"/><stop offset="1" stop-color="#e96501"/></linearGradient><linearGradient id="g340" gradientUnits="userSpaceOnUse" x1="100" x2="536"><stop offset="0" stop-color="#0e64c4"/><stop offset="0.461" stop-color="#fbfaff"/><stop offset="0.523" stop-color="#ffefe8"/><stop offset="1" stop-color="#ea6401"/></linearGradient><linearGradient id="g341" gradientUnits="userSpaceOnUse" x1="100" x2="537"><stop offset="0" stop-color="#0e64c4"/><stop offset="0.458" stop-color="#faf9ff"/><stop offset="0.535" stop-color="#ffebe2"/><stop offset="1" stop-color="#ea6401"/></linearGradient><linearGradient id="g342" gradientUnits="userSpaceOnUse" x1="100" x2="539"><stop offset="0" stop-color="#0e63c4"/><stop offset="0.456" stop-color="#faf8ff"/><stop offset="0.549" stop-color="#ffe7db"/><stop offset="1" stop-color="#eb6300"/></linearGradient><linearGradient id="g343" gradientUnits="userSpaceOnUse" x1="100" x2="540"><stop offset="0" stop-color="#0e63c5"/><stop offset="0.452" stop-color="#f9f7ff"/><stop offset="0.561" stop-color="#ffe3d6"/><stop offset="1" stop-color="#eb6300"/></linearGradient><linearGradient id="g344" gradientUnits="userSpaceOnUse" x1="101" x2="541"><stop offset="0" stop-color="#0e63c5"/><stop offset="0.45" stop-color="#f8f5ff"/><stop offset="0.573" stop-color="#ffdfd0"/><stop offset="1" stop-color="#ec6200"/></linearGradient><linearGradient id="g345" gradientUnits="userSpaceOnUse" x1="101" x2="542"><stop offset="0" stop-color="#0e62c6"/><stop offset="0.447" stop-color="#f7f4ff"/><stop offset="0.585" stop-color="#ffdccb"/><stop offset="1" stop-color="#ec6200"/></linearGradient><linearGradient id="g346" gradientUnits="userSpaceOnUse" x1="101" x2="543"><stop offset="0" stop-color="#0e61c6"/><stop offset="0.4" stop-color="#e0e6fb"/><stop offset="0.446" stop-color="#f6f3ff"/><stop offset="0.597" stop-color="#ffd8c5"/><stop offset="1" stop-color="#ed6100"/></linearGradient><linearGradient id="g347" gradientUnits="userSpaceOnUse" x1="101" x2="544"><stop offset="0" stop-color="#0e61c6"/><stop offset="0.442" stop-color="#f5f2ff"/><stop offset="0.609" stop-color="#ffd4c0"/><stop offset="1" stop-color="#ed6100"/></linearGradient><linearGradient id="g348" gradientUnits="userSpaceOnUse" x1="101" x2="545"><stop offset="0" stop-color="#0e60c7"/><stop offset="0.39" stop-color="#dbe2fa"/><stop offset="0.441" stop-color="#f4f1ff"/><stop offset="0.622" stop-color="#ffd0ba"/><stop offset="1" stop-color="#ee6000"/></linearGradient><linearGradient id="g349" gradientUnits="userSpaceOnUse" x1="102" x2="546"><stop offset="0" stop-color="#0f60c7"/><stop offset="0.437" stop-color="#f3f0ff"/><stop offset="0.633" stop-color="#ffccb5"/><stop offset="1" stop-color="#ee6000"/></linearGradient><linearGradient id="g350" gradientUnits="userSpaceOnUse" x1="102" x2="547"><stop offset="0" stop-color="#0f60c7"/><stop offset="0.434" stop-color="#f2eeff"/><stop offset="0.645" stop-color="#ffc9af"/><stop offset="1" stop-color="#ef5f00"/></linearGradient><linearGradient id="g351" gradientUnits="userSpaceOnUse" x1="102" x2="548"><stop offset="0" stop-color="#0f5fc8"/><stop offset="0.368" stop-color="#d1daf8"/><stop offset="0.433" stop-color="#f2eeff"/><stop offset="0.657" stop-color="#ffc5aa"/><stop offset="1" stop-color="#ef5f00"/></linearGradient><linearGradient id="g352" gradientUnits="userSpaceOnUse" x1="102" x2="549"><stop offset="0" stop-color="#0f5fc8"/><stop offset="0.362" stop-color="#cfd8f8"/><stop offset="0.43" stop-color="#f0ecff"/><stop offset="0.669" stop-color="#ffc1a4"/><stop offset="1" stop-color="#f05f00"/></linearGradient><linearGradient id="g353" gradientUnits="userSpaceOnUse" x1="102" x2="550"><stop offset="0" stop-color="#0f5ec8"/><stop offset="0.368" stop-color="#d2d9f9"/><stop offset="0.429" stop-color="#f0ebff"/><stop offset="0.681" stop-color="#ffbd9f"/><stop offset="1" stop-color="#f05e00"/></linearGradient><linearGradient id="g354" gradientUnits="userSpaceOnUse" x1="103" x2="551"><stop offset="0" stop-color="#0f5ec9"/><stop offset="0.35" stop-color="#c9d3f7"/><stop offset="0.424" stop-color="#eeeaff"/><stop offset="0.692" stop-color="#ffba99"/><stop offset="1" stop-color="#f15e00"/></linearGradient><linearGradient id="g355" gradientUnits="userSpaceOnUse" x1="103" x2="552"><stop offset="0" stop-color="#0f5dc9"/><stop offset="0.356" stop-color="#cdd5f9"/><stop offset="0.423" stop-color="#eee9ff"/><stop offset="0.704" stop-color="#ffb694"/><stop offset="1" stop-color="#f15d00"/></linearGradient><linearGradient id="g356" gradientUnits="userSpaceOnUse" x1="103" x2="553"><stop offset="0" stop-color="#0f5dca"/><stop offset="0.351" stop-color="#cad3f8"/><stop offset="0.42" stop-color="#ede8ff"/><stop offset="0.716" stop-color="#ffb28e"/><stop offset="1" stop-color="#f25d00"/></linearGradient><linearGradient id="g357" gradientUnits="userSpaceOnUse" x1="103" x2="554"><stop offset="0" stop-color="#0f5cca"/><stop offset="0.346" stop-color="#c8d1f8"/><stop offset="0.419" stop-color="#ece7ff"/><stop offset="0.727" stop-color="#ffae89"/><stop offset="1" stop-color="#f25c00"/></linearGradient><linearGradient id="g358" gradientUnits="userSpaceOnUse" x1="104" x2="555"><stop offset="0" stop-color="#105cca"/><stop offset="0.339" stop-color="#c5cff8"/><stop offset="0.415" stop-color="#ebe5ff"/><stop offset="0.738" stop-color="#ffaa83"/><stop offset="1" stop-color="#f35c00"/></linearGradient><linearGradient id="g359" gradientUnits="userSpaceOnUse" x1="104" x2="556"><stop offset="0" stop-color="#105ccb"/><stop offset="0.334" stop-color="#c3ccf7"/><stop offset="0.414" stop-color="#eae4ff"/><stop offset="0.75" stop-color="#ffa77e"/><stop offset="1" stop-color="#f35b00"/></linearGradient><linearGradient id="g360" gradientUnits="userSpaceOnUse" x1="104" x2="557"><stop offset="0" stop-color="#105bcb"/><stop offset="0.329" stop-color="#c0caf7"/><stop offset="0.411" stop-color="#e9e3ff"/><stop offset="0.762" stop-color="#ffa378"/><stop offset="1" stop-color="#f45b00"/></linearGradient><linearGradient id="g361" gradientUnits="userSpaceOnUse" x1="104" x2="558"><stop offset="0" stop-color="#105acb"/><stop offset="0.337" stop-color="#c5cdf8"/><stop offset="0.41" stop-color="#e9e2ff"/><stop offset="0.773" stop-color="#ff9f72"/><stop offset="1" stop-color="#f45a00"/></linearGradient><linearGradient id="g362" gradientUnits="userSpaceOnUse" x1="104" x2="559"><stop offset="0" stop-color="#105acc"/><stop offset="0.332" stop-color="#c2caf8"/><stop offset="0.407" stop-color="#e7e1ff"/><stop offset="0.785" stop-color="#ff9b6d"/><stop offset="1" stop-color="#f55a00"/></linearGradient><linearGradient id="g363" gradientUnits="userSpaceOnUse" x1="105" x2="560"><stop offset="0" stop-color="#105acc"/><stop offset="0.325" stop-color="#bfc8f8"/><stop offset="0.404" stop-color="#e7e0ff"/><stop offset="0.796" stop-color="#ff9867"/><stop offset="1" stop-color="#f55a00"/></linearGradient><linearGradient id="g364" gradientUnits="userSpaceOnUse" x1="105" x2="561"><stop offset="0" stop-color="#1059cc"/><stop offset="0.322" stop-color="#bec7f8"/><stop offset="0.401" stop-color="#e6deff"/><stop offset="0.807" stop-color="#ff9462"/><stop offset="1" stop-color="#f65900"/></linearGradient><linearGradient id="g365" gradientUnits="userSpaceOnUse" x1="105" x2="562"><stop offset="0" stop-color="#1059cd"/><stop offset="0.317" stop-color="#bcc5f7"/><stop offset="0.4" stop-color="#e5ddff"/><stop offset="0.818" stop-color="#ff905c"/><stop offset="1" stop-color="#f65900"/></linearGradient><linearGradient id="g366" gradientUnits="userSpaceOnUse" x1="105" x2="563"><stop offset="0" stop-color="#1058cd"/><stop offset="0.312" stop-color="#b9c3f7"/><stop offset="0.397" stop-color="#e4dcff"/><stop offset="0.83" stop-color="#ff8c57"/><stop offset="1" stop-color="#f75800"/></linearGradient><linearGradient id="g367" gradientUnits="userSpaceOnUse" x1="106" x2="564"><stop offset="0" stop-color="#1158ce"/><stop offset="0.308" stop-color="#b8c1f7"/><stop offset="0.395" stop-color="#e3dbff"/><stop offset="0.841" stop-color="#ff8851"/><stop offset="1" stop-color="#f75800"/></linearGradient><linearGradient id="g368" gradientUnits="userSpaceOnUse" x1="106" x2="565"><stop offset="0" stop-color="#1157ce"/><stop offset="0.303" stop-color="#b5bff7"/><stop offset="0.392" stop-color="#e2daff"/><stop offset="0.852" stop-color="#ff854c"/><stop offset="1" stop-color="#f85700"/></linearGradient><linearGradient id="g369" gradientUnits="userSpaceOnUse" x1="106" x2="566"><stop offset="0" stop-color="#1157ce"/><stop offset="0.311" stop-color="#bac1f8"/><stop offset="0.391" stop-color="#e2d9ff"/><stop offset="0.863" stop-color="#ff8146"/><stop offset="1" stop-color="#f95700"/></linearGradient><linearGradient id="g370" gradientUnits="userSpaceOnUse" x1="106" x2="567"><stop offset="0" stop-color="#1156cf"/><stop offset="0.306" stop-color="#b7bff8"/><stop offset="0.388" stop-color="#e0d8ff"/><stop offset="0.874" stop-color="#ff7d41"/><stop offset="1" stop-color="#f95700"/></linearGradient><linearGradient id="g371" gradientUnits="userSpaceOnUse" x1="106" x2="568"><stop offset="0" stop-color="#1156cf"/><stop offset="0.303" stop-color="#b6bef8"/><stop offset="0.387" stop-color="#e0d7ff"/><stop offset="0.885" stop-color="#ff793b"/><stop offset="1" stop-color="#fa5600"/></linearGradient><linearGradient id="g372" gradientUnits="userSpaceOnUse" x1="107" x2="569"><stop offset="0" stop-color="#1156cf"/><stop offset="0.297" stop-color="#b3bcf7"/><stop offset="0.383" stop-color="#dfd5ff"/><stop offset="0.896" stop-color="#ff7536"/><stop offset="1" stop-color="#fa5600"/></linearGradient><linearGradient id="g373" gradientUnits="userSpaceOnUse" x1="107" x2="570"><stop offset="0" stop-color="#1155d0"/><stop offset="0.294" stop-color="#b2baf7"/><stop offset="0.354" stop-color="#d2cefe"/><stop offset="0.382" stop-color="#ded4ff"/><stop offset="0.907" stop-color="#ff7230"/><stop offset="1" stop-color="#fb5500"/></linearGradient><linearGradient id="g374" gradientUnits="userSpaceOnUse" x1="107" x2="571"><stop offset="0" stop-color="#1155d0"/><stop offset="0.289" stop-color="#afb8f7"/><stop offset="0.379" stop-color="#ddd3ff"/><stop offset="0.918" stop-color="#ff6e2a"/><stop offset="1" stop-color="#fb5501"/></linearGradient><linearGradient id="g375" gradientUnits="userSpaceOnUse" x1="107" x2="573"><stop offset="0" stop-color="#1154d0"/><stop offset="0.296" stop-color="#b4baf8"/><stop offset="0.352" stop-color="#d1ccfe"/><stop offset="0.378" stop-color="#dcd2ff"/><stop offset="0.927" stop-color="#ff6a25"/><stop offset="1" stop-color="#fc5400"/></linearGradient><linearGradient id="g376" gradientUnits="userSpaceOnUse" x1="108" x2="574"><stop offset="0" stop-color="#1254d1"/><stop offset="0.279" stop-color="#abb4f7"/><stop offset="0.343" stop-color="#cdc9fe"/><stop offset="0.373" stop-color="#dbd1ff"/><stop offset="0.938" stop-color="#ff661f"/><stop offset="1" stop-color="#fc5400"/></linearGradient><linearGradient id="g377" gradientUnits="userSpaceOnUse" x1="108" x2="575"><stop offset="0" stop-color="#1253d1"/><stop offset="0.287" stop-color="#b0b7f8"/><stop offset="0.345" stop-color="#cec9fe"/><stop offset="0.373" stop-color="#dbd0ff"/><stop offset="0.949" stop-color="#ff631a"/><stop offset="1" stop-color="#fd5300"/></linearGradient><linearGradient id="g378" gradientUnits="userSpaceOnUse" x1="108" x2="576"><stop offset="0" stop-color="#1253d1"/><stop offset="0.284" stop-color="#aeb5f8"/><stop offset="0.37" stop-color="#d9ceff"/><stop offset="0.959" stop-color="#ff5f14"/><stop offset="1" stop-color="#fd5300"/></linearGradient><linearGradient id="g379" gradientUnits="userSpaceOnUse" x1="108" x2="577"><stop offset="0" stop-color="#1252d2"/><stop offset="0.281" stop-color="#adb4f8"/><stop offset="0.341" stop-color="#ccc7fe"/><stop offset="0.369" stop-color="#d9cdff"/><stop offset="0.97" stop-color="#ff5b0f"/><stop offset="1" stop-color="#fe5200"/></linearGradient><linearGradient id="g380" gradientUnits="userSpaceOnUse" x1="109" x2="578"><stop offset="0" stop-color="#1252d2"/><stop offset="0.275" stop-color="#aab2f7"/><stop offset="0.335" stop-color="#cac5fe"/><stop offset="0.365" stop-color="#d8ccff"/><stop offset="0.981" stop-color="#ff5709"/><stop offset="1" stop-color="#fe5200"/></linearGradient><linearGradient id="g381" gradientUnits="userSpaceOnUse" x1="109" x2="579"><stop offset="0" stop-color="#1252d3"/><stop offset="0.272" stop-color="#a9b0f7"/><stop offset="0.334" stop-color="#cac4fe"/><stop offset="0.364" stop-color="#d7cbff"/><stop offset="1" stop-color="#ff5100"/></linearGradient><linearGradient id="g382" gradientUnits="userSpaceOnUse" x1="109" x2="578"><stop offset="0" stop-color="#1251d3"/><stop offset="0.271" stop-color="#a8aff7"/><stop offset="0.333" stop-color="#c8c3fe"/><stop offset="0.362" stop-color="#d6caff"/><stop offset="1" stop-color="#fe5101"/></linearGradient><linearGradient id="g383" gradientUnits="userSpaceOnUse" x1="109" x2="576"><stop offset="0" stop-color="#1250d3"/><stop offset="0.278" stop-color="#abb0f8"/><stop offset="0.334" stop-color="#c8c2fe"/><stop offset="0.364" stop-color="#d5c9ff"/><stop offset="1" stop-color="#fd5002"/></linearGradient><linearGradient id="g384" gradientUnits="userSpaceOnUse" x1="109" x2="573"><stop offset="0" stop-color="#1250d3"/><stop offset="0.278" stop-color="#a9aff8"/><stop offset="0.334" stop-color="#c7c0fe"/><stop offset="0.364" stop-color="#d4c7ff"/><stop offset="1" stop-color="#fc5004"/></linearGradient><linearGradient id="g385" gradientUnits="userSpaceOnUse" x1="110" x2="571"><stop offset="0" stop-color="#1350d4"/><stop offset="0.275" stop-color="#a8adf8"/><stop offset="0.334" stop-color="#c6c0fe"/><stop offset="0.364" stop-color="#d4c6ff"/><stop offset="1" stop-color="#fb5005"/></linearGradient><linearGradient id="g386" gradientUnits="userSpaceOnUse" x1="110" x2="569"><stop offset="0" stop-color="#134fd4"/><stop offset="0.275" stop-color="#a7acf8"/><stop offset="0.333" stop-color="#c5befe"/><stop offset="0.364" stop-color="#d2c5ff"/><stop offset="1" stop-color="#fa4f07"/></linearGradient><linearGradient id="g387" gradientUnits="userSpaceOnUse" x1="110" x2="567"><stop offset="0" stop-color="#134fd5"/><stop offset="0.282" stop-color="#aaadf9"/><stop offset="0.335" stop-color="#c5bdfe"/><stop offset="0.365" stop-color="#d2c4ff"/><stop offset="1" stop-color="#f94f08"/></linearGradient><linearGradient id="g388" gradientUnits="userSpaceOnUse" x1="110" x2="565"><stop offset="0" stop-color="#134ed5"/><stop offset="0.281" stop-color="#a8acf9"/><stop offset="0.334" stop-color="#c3bcfe"/><stop offset="0.365" stop-color="#d1c3ff"/><stop offset="1" stop-color="#f84e09"/></linearGradient><linearGradient id="g389" gradientUnits="userSpaceOnUse" x1="111" x2="562"><stop offset="0" stop-color="#134ed5"/><stop offset="0.279" stop-color="#a7aaf9"/><stop offset="0.335" stop-color="#c3bbfe"/><stop offset="0.366" stop-color="#d0c2ff"/><stop offset="1" stop-color="#f74e0b"/></linearGradient><linearGradient id="g390" gradientUnits="userSpaceOnUse" x1="111" x2="560"><stop offset="0" stop-color="#134dd6"/><stop offset="0.276" stop-color="#a5a8f9"/><stop offset="0.332" stop-color="#c0b9fe"/><stop offset="0.365" stop-color="#cfc1ff"/><stop offset="1" stop-color="#f54d0d"/></linearGradient><linearGradient id="g391" gradientUnits="userSpaceOnUse" x1="111" x2="558"><stop offset="0" stop-color="#134dd6"/><stop offset="0.284" stop-color="#a8aafa"/><stop offset="0.336" stop-color="#c1b9fe"/><stop offset="0.367" stop-color="#cec0ff"/><stop offset="1" stop-color="#f44d0e"/></linearGradient><linearGradient id="g392" gradientUnits="userSpaceOnUse" x1="111" x2="556"><stop offset="0" stop-color="#134cd6"/><stop offset="0.274" stop-color="#a2a5f8"/><stop offset="0.333" stop-color="#bfb7fe"/><stop offset="0.366" stop-color="#cdbeff"/><stop offset="1" stop-color="#f34c0f"/></linearGradient><linearGradient id="g393" gradientUnits="userSpaceOnUse" x1="112" x2="554"><stop offset="0" stop-color="#144cd7"/><stop offset="0.281" stop-color="#a5a7f9"/><stop offset="0.335" stop-color="#bfb7fe"/><stop offset="0.367" stop-color="#ccbdff"/><stop offset="1" stop-color="#f24c11"/></linearGradient><linearGradient id="g394" gradientUnits="userSpaceOnUse" x1="112" x2="551"><stop offset="0" stop-color="#144bd7"/><stop offset="0.28" stop-color="#a4a5f9"/><stop offset="0.335" stop-color="#beb5fe"/><stop offset="0.367" stop-color="#cbbcff"/><stop offset="1" stop-color="#f14c13"/></linearGradient><linearGradient id="g395" gradientUnits="userSpaceOnUse" x1="112" x2="549"><stop offset="0" stop-color="#144bd7"/><stop offset="0.281" stop-color="#a3a5fa"/><stop offset="0.336" stop-color="#beb5ff"/><stop offset="0.368" stop-color="#cbbbff"/><stop offset="1" stop-color="#f04b14"/></linearGradient><linearGradient id="g396" gradientUnits="userSpaceOnUse" x1="112" x2="547"><stop offset="0" stop-color="#144bd8"/><stop offset="0.278" stop-color="#a1a3f9"/><stop offset="0.333" stop-color="#bbb3fe"/><stop offset="0.368" stop-color="#c9baff"/><stop offset="1" stop-color="#ef4a15"/></linearGradient><linearGradient id="g397" gradientUnits="userSpaceOnUse" x1="113" x2="545"><stop offset="0" stop-color="#144ad8"/><stop offset="0.285" stop-color="#a4a4fa"/><stop offset="0.336" stop-color="#bcb2ff"/><stop offset="0.368" stop-color="#c9b9ff"/><stop offset="1" stop-color="#ee4a16"/></linearGradient><linearGradient id="g398" gradientUnits="userSpaceOnUse" x1="113" x2="543"><stop offset="0" stop-color="#144ad8"/><stop offset="0.284" stop-color="#a3a3fa"/><stop offset="0.367" stop-color="#c8b7ff"/><stop offset="1" stop-color="#ed4a18"/></linearGradient><linearGradient id="g399" gradientUnits="userSpaceOnUse" x1="113" x2="540"><stop offset="0" stop-color="#1449d9"/><stop offset="0.283" stop-color="#a1a1fa"/><stop offset="0.337" stop-color="#bab0ff"/><stop offset="0.37" stop-color="#c7b6ff"/><stop offset="1" stop-color="#eb491a"/></linearGradient><linearGradient id="g400" gradientUnits="userSpaceOnUse" x1="113" x2="538"><stop offset="0" stop-color="#1449d9"/><stop offset="0.282" stop-color="#a0a0fa"/><stop offset="0.334" stop-color="#b8aefe"/><stop offset="0.369" stop-color="#c6b5ff"/><stop offset="1" stop-color="#ea491b"/></linearGradient><linearGradient id="g401" gradientUnits="userSpaceOnUse" x1="114" x2="536"><stop offset="0" stop-color="#1548da"/><stop offset="0.28" stop-color="#9e9efa"/><stop offset="0.334" stop-color="#b8adff"/><stop offset="0.37" stop-color="#c5b4ff"/><stop offset="1" stop-color="#e9481c"/></linearGradient><linearGradient id="g402" gradientUnits="userSpaceOnUse" x1="114" x2="534"><stop offset="0" stop-color="#1548da"/><stop offset="0.279" stop-color="#9d9dfa"/><stop offset="0.333" stop-color="#b6acff"/><stop offset="0.369" stop-color="#c4b3ff"/><stop offset="1" stop-color="#e8481e"/></linearGradient><linearGradient id="g403" gradientUnits="userSpaceOnUse" x1="114" x2="531"><stop offset="0" stop-color="#1547da"/><stop offset="0.285" stop-color="#9f9dfb"/><stop offset="0.338" stop-color="#b7acff"/><stop offset="0.372" stop-color="#c4b2ff"/><stop offset="1" stop-color="#e74720"/></linearGradient><linearGradient id="g404" gradientUnits="userSpaceOnUse" x1="115" x2="529"><stop offset="0" stop-color="#1547db"/><stop offset="0.283" stop-color="#9e9cfa"/><stop offset="0.37" stop-color="#c2b1ff"/><stop offset="1" stop-color="#e64721"/></linearGradient><linearGradient id="g405" gradientUnits="userSpaceOnUse" x1="115" x2="527"><stop offset="0" stop-color="#1547db"/><stop offset="0.284" stop-color="#9d9bfb"/><stop offset="0.335" stop-color="#b4a9ff"/><stop offset="0.371" stop-color="#c2afff"/><stop offset="1" stop-color="#e54622"/></linearGradient><linearGradient id="g406" gradientUnits="userSpaceOnUse" x1="115" x2="525"><stop offset="0" stop-color="#1546db"/><stop offset="0.283" stop-color="#9c9afb"/><stop offset="0.371" stop-color="#c1aeff"/><stop offset="1" stop-color="#e44624"/></linearGradient><linearGradient id="g407" gradientUnits="userSpaceOnUse" x1="115" x2="523"><stop offset="0" stop-color="#1546db"/><stop offset="0.282" stop-color="#9b98fb"/><stop offset="0.336" stop-color="#b2a6ff"/><stop offset="0.373" stop-color="#c0adff"/><stop offset="1" stop-color="#e34625"/></linearGradient><linearGradient id="g408" gradientUnits="userSpaceOnUse" x1="116" x2="520"><stop offset="0" stop-color="#1645dc"/><stop offset="0.28" stop-color="#9997fa"/><stop offset="0.334" stop-color="#b1a5ff"/><stop offset="0.371" stop-color="#bfacff"/><stop offset="1" stop-color="#e14527"/></linearGradient><linearGradient id="g409" gradientUnits="userSpaceOnUse" x1="116" x2="518"><stop offset="0" stop-color="#1645dc"/><stop offset="0.286" stop-color="#9b98fb"/><stop offset="0.336" stop-color="#b1a4ff"/><stop offset="0.373" stop-color="#beabff"/><stop offset="1" stop-color="#e04528"/></linearGradient><linearGradient id="g410" gradientUnits="userSpaceOnUse" x1="116" x2="516"><stop offset="0" stop-color="#1644dc"/><stop offset="0.285" stop-color="#9a96fb"/><stop offset="0.372" stop-color="#bdaaff"/><stop offset="1" stop-color="#df4429"/></linearGradient><linearGradient id="g411" gradientUnits="userSpaceOnUse" x1="116" x2="514"><stop offset="0" stop-color="#1644dd"/><stop offset="0.284" stop-color="#9895fb"/><stop offset="0.337" stop-color="#afa2ff"/><stop offset="0.374" stop-color="#bda9ff"/><stop offset="1" stop-color="#de442b"/></linearGradient><linearGradient id="g412" gradientUnits="userSpaceOnUse" x1="117" x2="512"><stop offset="0" stop-color="#1643dd"/><stop offset="0.281" stop-color="#9793fb"/><stop offset="0.372" stop-color="#bba7ff"/><stop offset="1" stop-color="#dd432c"/></linearGradient><linearGradient id="g413" gradientUnits="userSpaceOnUse" x1="117" x2="509"><stop offset="0" stop-color="#1643de"/><stop offset="0.281" stop-color="#9692fb"/><stop offset="0.334" stop-color="#ac9fff"/><stop offset="0.375" stop-color="#bba6ff"/><stop offset="1" stop-color="#dc432e"/></linearGradient><linearGradient id="g414" gradientUnits="userSpaceOnUse" x1="117" x2="507"><stop offset="0" stop-color="#1642de"/><stop offset="0.279" stop-color="#9490fb"/><stop offset="0.333" stop-color="#ab9eff"/><stop offset="0.374" stop-color="#baa5ff"/><stop offset="1" stop-color="#db422f"/></linearGradient><linearGradient id="g415" gradientUnits="userSpaceOnUse" x1="118" x2="505"><stop offset="0" stop-color="#1742de"/><stop offset="0.279" stop-color="#9490fb"/><stop offset="0.333" stop-color="#ab9dff"/><stop offset="0.375" stop-color="#b9a4ff"/><stop offset="1" stop-color="#da4231"/></linearGradient><linearGradient id="g416" gradientUnits="userSpaceOnUse" x1="118" x2="503"><stop offset="0" stop-color="#1742df"/><stop offset="0.278" stop-color="#938efb"/><stop offset="0.332" stop-color="#a99bff"/><stop offset="0.374" stop-color="#b8a3ff"/><stop offset="1" stop-color="#d94132"/></linearGradient><linearGradient id="g417" gradientUnits="userSpaceOnUse" x1="118" x2="501"><stop offset="0" stop-color="#1741df"/><stop offset="0.285" stop-color="#958ffc"/><stop offset="0.376" stop-color="#b7a2fe"/><stop offset="1" stop-color="#d84133"/></linearGradient><linearGradient id="g418" gradientUnits="userSpaceOnUse" x1="118" x2="498"><stop offset="0" stop-color="#1741df"/><stop offset="0.282" stop-color="#928dfb"/><stop offset="0.376" stop-color="#b6a0ff"/><stop offset="1" stop-color="#d64135"/></linearGradient><linearGradient id="g419" gradientUnits="userSpaceOnUse" x1="119" x2="496"><stop offset="0" stop-color="#1740e0"/><stop offset="0.281" stop-color="#928cfb"/><stop offset="0.334" stop-color="#a798ff"/><stop offset="0.377" stop-color="#b59ffe"/><stop offset="1" stop-color="#d54037"/></linearGradient><linearGradient id="g420" gradientUnits="userSpaceOnUse" x1="119" x2="494"><stop offset="0" stop-color="#1740e0"/><stop offset="0.28" stop-color="#908bfb"/><stop offset="0.376" stop-color="#b49eff"/><stop offset="1" stop-color="#d44038"/></linearGradient><linearGradient id="g421" gradientUnits="userSpaceOnUse" x1="119" x2="492"><stop offset="0" stop-color="#173fe0"/><stop offset="0.279" stop-color="#8f89fb"/><stop offset="0.335" stop-color="#a596ff"/><stop offset="0.378" stop-color="#b49dfe"/><stop offset="1" stop-color="#d33f39"/></linearGradient><linearGradient id="g422" gradientUnits="userSpaceOnUse" x1="120" x2="489"><stop offset="0" stop-color="#183fe1"/><stop offset="0.276" stop-color="#8e88fb"/><stop offset="0.377" stop-color="#b39cff"/><stop offset="1" stop-color="#d23f3b"/></linearGradient><linearGradient id="g423" gradientUnits="userSpaceOnUse" x1="120" x2="487"><stop offset="0" stop-color="#183ee1"/><stop offset="0.278" stop-color="#8d87fb"/><stop offset="0.335" stop-color="#a494ff"/><stop offset="0.379" stop-color="#b29bfe"/><stop offset="1" stop-color="#d13e3c"/></linearGradient><linearGradient id="g424" gradientUnits="userSpaceOnUse" x1="120" x2="485"><stop offset="0" stop-color="#183ee1"/><stop offset="0.277" stop-color="#8c86fb"/><stop offset="0.378" stop-color="#b19aff"/><stop offset="1" stop-color="#d03e3e"/></linearGradient><linearGradient id="g425" gradientUnits="userSpaceOnUse" x1="120" x2="483"><stop offset="0" stop-color="#183de1"/><stop offset="0.275" stop-color="#8b84fb"/><stop offset="0.333" stop-color="#a191ff"/><stop offset="0.38" stop-color="#b098fe"/><stop offset="1" stop-color="#cf3d3f"/></linearGradient><linearGradient id="g426" gradientUnits="userSpaceOnUse" x1="121" x2="481"><stop offset="0" stop-color="#183de2"/><stop offset="0.272" stop-color="#8983fb"/><stop offset="0.331" stop-color="#a090ff"/><stop offset="0.378" stop-color="#af97ff"/><stop offset="1" stop-color="#cd3d40"/></linearGradient><linearGradient id="g427" gradientUnits="userSpaceOnUse" x1="121" x2="478"><stop offset="0" stop-color="#183ce2"/><stop offset="0.28" stop-color="#8b83fc"/><stop offset="0.381" stop-color="#ae96fe"/><stop offset="1" stop-color="#cc3d42"/></linearGradient><linearGradient id="g428" gradientUnits="userSpaceOnUse" x1="121" x2="476"><stop offset="0" stop-color="#183ce2"/><stop offset="0.279" stop-color="#8a82fc"/><stop offset="0.38" stop-color="#ad95ff"/><stop offset="1" stop-color="#cb3c44"/></linearGradient><linearGradient id="g429" gradientUnits="userSpaceOnUse" x1="122" x2="474"><stop offset="0" stop-color="#193ce3"/><stop offset="0.276" stop-color="#8880fc"/><stop offset="0.332" stop-color="#9d8dff"/><stop offset="0.381" stop-color="#ad94fe"/><stop offset="1" stop-color="#ca3b45"/></linearGradient><linearGradient id="g430" gradientUnits="userSpaceOnUse" x1="122" x2="472"><stop offset="0" stop-color="#193be3"/><stop offset="0.274" stop-color="#877ffc"/><stop offset="0.38" stop-color="#ab93ff"/><stop offset="1" stop-color="#c93b46"/></linearGradient><linearGradient id="g431" gradientUnits="userSpaceOnUse" x1="122" x2="470"><stop offset="0" stop-color="#193be3"/><stop offset="0.276" stop-color="#877efc"/><stop offset="0.333" stop-color="#9c8aff"/><stop offset="0.382" stop-color="#ab92fe"/><stop offset="1" stop-color="#c83b48"/></linearGradient><linearGradient id="g432" gradientUnits="userSpaceOnUse" x1="123" x2="467"><stop offset="0" stop-color="#193ae4"/><stop offset="0.273" stop-color="#857dfc"/><stop offset="0.381" stop-color="#aa90ff"/><stop offset="1" stop-color="#c73a4a"/></linearGradient><linearGradient id="g433" gradientUnits="userSpaceOnUse" x1="123" x2="465"><stop offset="0" stop-color="#193ae4"/><stop offset="0.272" stop-color="#847bfc"/><stop offset="0.333" stop-color="#9a88ff"/><stop offset="0.383" stop-color="#a98ffe"/><stop offset="1" stop-color="#c63a4b"/></linearGradient><linearGradient id="g434" gradientUnits="userSpaceOnUse" x1="123" x2="463"><stop offset="0" stop-color="#1939e4"/><stop offset="0.271" stop-color="#827afc"/><stop offset="0.382" stop-color="#a88eff"/><stop offset="1" stop-color="#c4394c"/></linearGradient><linearGradient id="g435" gradientUnits="userSpaceOnUse" x1="123" x2="461"><stop offset="0" stop-color="#1939e5"/><stop offset="0.272" stop-color="#8279fc"/><stop offset="0.331" stop-color="#9785ff"/><stop offset="0.385" stop-color="#a78dfe"/><stop offset="1" stop-color="#c3394e"/></linearGradient><linearGradient id="g436" gradientUnits="userSpaceOnUse" x1="124" x2="459"><stop offset="0" stop-color="#1a38e5"/><stop offset="0.269" stop-color="#8178fc"/><stop offset="0.382" stop-color="#a68cff"/><stop offset="1" stop-color="#c2384f"/></linearGradient><linearGradient id="g437" gradientUnits="userSpaceOnUse" x1="124" x2="456"><stop offset="0" stop-color="#1a38e5"/><stop offset="0.274" stop-color="#8278fc"/><stop offset="0.386" stop-color="#a68bfe"/><stop offset="1" stop-color="#c13851"/></linearGradient><linearGradient id="g438" gradientUnits="userSpaceOnUse" x1="124" x2="454"><stop offset="0" stop-color="#1a37e6"/><stop offset="0.273" stop-color="#8076fc"/><stop offset="0.385" stop-color="#a489ff"/><stop offset="1" stop-color="#c03752"/></linearGradient><linearGradient id="g439" gradientUnits="userSpaceOnUse" x1="125" x2="452"><stop offset="0" stop-color="#1a37e6"/><stop offset="0.272" stop-color="#8075fc"/><stop offset="0.385" stop-color="#a488fe"/><stop offset="1" stop-color="#bf3753"/></linearGradient><linearGradient id="g440" gradientUnits="userSpaceOnUse" x1="125" x2="450"><stop offset="0" stop-color="#1a36e6"/><stop offset="0.271" stop-color="#7f74fc"/><stop offset="0.385" stop-color="#a387ff"/><stop offset="1" stop-color="#be3655"/></linearGradient><linearGradient id="g441" gradientUnits="userSpaceOnUse" x1="125" x2="447"><stop offset="0" stop-color="#1a36e7"/><stop offset="0.27" stop-color="#7d73fc"/><stop offset="0.332" stop-color="#927eff"/><stop offset="0.388" stop-color="#a286fe"/><stop offset="1" stop-color="#bd3657"/></linearGradient><linearGradient id="g442" gradientUnits="userSpaceOnUse" x1="126" x2="445"><stop offset="0" stop-color="#1b36e7"/><stop offset="0.266" stop-color="#7c71fc"/><stop offset="0.386" stop-color="#a185ff"/><stop offset="1" stop-color="#bc3658"/></linearGradient><linearGradient id="g443" gradientUnits="userSpaceOnUse" x1="126" x2="443"><stop offset="0" stop-color="#1b35e7"/><stop offset="0.268" stop-color="#7b70fc"/><stop offset="0.331" stop-color="#907cff"/><stop offset="0.388" stop-color="#a084fe"/><stop offset="1" stop-color="#ba3559"/></linearGradient><linearGradient id="g444" gradientUnits="userSpaceOnUse" x1="126" x2="441"><stop offset="0" stop-color="#1b35e7"/><stop offset="0.267" stop-color="#7a6ffc"/><stop offset="0.387" stop-color="#9f83ff"/><stop offset="1" stop-color="#b9355b"/></linearGradient><linearGradient id="g445" gradientUnits="userSpaceOnUse" x1="127" x2="439"><stop offset="0" stop-color="#1b34e8"/><stop offset="0.272" stop-color="#7c6ffd"/><stop offset="0.388" stop-color="#9e81fe"/><stop offset="1" stop-color="#b8345c"/></linearGradient><linearGradient id="g446" gradientUnits="userSpaceOnUse" x1="127" x2="436"><stop offset="0" stop-color="#1b34e8"/><stop offset="0.265" stop-color="#786dfc"/><stop offset="0.388" stop-color="#9d80ff"/><stop offset="1" stop-color="#b7345e"/></linearGradient><linearGradient id="g447" gradientUnits="userSpaceOnUse" x1="127" x2="434"><stop offset="0" stop-color="#1b33e8"/><stop offset="0.27" stop-color="#796dfc"/><stop offset="0.391" stop-color="#9d7ffe"/><stop offset="1" stop-color="#b6335f"/></linearGradient><linearGradient id="g448" gradientUnits="userSpaceOnUse" x1="128" x2="432"><stop offset="0" stop-color="#1c33e9"/><stop offset="0.266" stop-color="#786bfc"/><stop offset="0.388" stop-color="#9c7eff"/><stop offset="1" stop-color="#b53360"/></linearGradient><linearGradient id="g449" gradientUnits="userSpaceOnUse" x1="128" x2="430"><stop offset="0" stop-color="#1c32e9"/><stop offset="0.268" stop-color="#786afd"/><stop offset="0.391" stop-color="#9b7dfe"/><stop offset="1" stop-color="#b43262"/></linearGradient><linearGradient id="g450" gradientUnits="userSpaceOnUse" x1="128" x2="428"><stop offset="0" stop-color="#1c32e9"/><stop offset="0.267" stop-color="#7669fc"/><stop offset="0.39" stop-color="#9a7cfe"/><stop offset="1" stop-color="#b33263"/></linearGradient><linearGradient id="g451" gradientUnits="userSpaceOnUse" x1="129" x2="425"><stop offset="0" stop-color="#1c32ea"/><stop offset="0.264" stop-color="#7568fc"/><stop offset="0.392" stop-color="#997bfe"/><stop offset="1" stop-color="#b13265"/></linearGradient><linearGradient id="g452" gradientUnits="userSpaceOnUse" x1="129" x2="423"><stop offset="0" stop-color="#1c31ea"/><stop offset="0.262" stop-color="#7366fc"/><stop offset="0.391" stop-color="#9879fe"/><stop offset="1" stop-color="#b03166"/></linearGradient><linearGradient id="g453" gradientUnits="userSpaceOnUse" x1="130" x2="421"><stop offset="0" stop-color="#1d31ea"/><stop offset="0.261" stop-color="#7365fc"/><stop offset="0.392" stop-color="#9778fe"/><stop offset="1" stop-color="#af3168"/></linearGradient><linearGradient id="g454" gradientUnits="userSpaceOnUse" x1="130" x2="419"><stop offset="0" stop-color="#1d30eb"/><stop offset="0.26" stop-color="#7264fc"/><stop offset="0.391" stop-color="#9677fe"/><stop offset="1" stop-color="#ae3069"/></linearGradient><linearGradient id="g455" gradientUnits="userSpaceOnUse" x1="130" x2="417"><stop offset="0" stop-color="#1d30eb"/><stop offset="0.268" stop-color="#7464fd"/><stop offset="0.394" stop-color="#9676fe"/><stop offset="1" stop-color="#ad306a"/></linearGradient><linearGradient id="g456" gradientUnits="userSpaceOnUse" x1="131" x2="414"><stop offset="0" stop-color="#1d2feb"/><stop offset="0.265" stop-color="#7263fd"/><stop offset="0.392" stop-color="#9475fe"/><stop offset="1" stop-color="#ac2f6c"/></linearGradient><linearGradient id="g457" gradientUnits="userSpaceOnUse" x1="131" x2="412"><stop offset="0" stop-color="#1d2feb"/><stop offset="0.263" stop-color="#7162fd"/><stop offset="0.395" stop-color="#9474fe"/><stop offset="1" stop-color="#ab2f6e"/></linearGradient><linearGradient id="g458" gradientUnits="userSpaceOnUse" x1="131" x2="410"><stop offset="0" stop-color="#1d2eec"/><stop offset="0.262" stop-color="#6f60fd"/><stop offset="0.394" stop-color="#9372fe"/><stop offset="1" stop-color="#aa2e6f"/></linearGradient><linearGradient id="g459" gradientUnits="userSpaceOnUse" x1="132" x2="408"><stop offset="0" stop-color="#1e2eec"/><stop offset="0.261" stop-color="#6f5ffd"/><stop offset="0.395" stop-color="#9271fe"/><stop offset="1" stop-color="#a92e70"/></linearGradient><linearGradient id="g460" gradientUnits="userSpaceOnUse" x1="132" x2="405"><stop offset="0" stop-color="#1e2dec"/><stop offset="0.26" stop-color="#6e5efd"/><stop offset="0.396" stop-color="#9170fe"/><stop offset="1" stop-color="#a72e72"/></linearGradient><linearGradient id="g461" gradientUnits="userSpaceOnUse" x1="132" x2="403"><stop offset="0" stop-color="#1e2ded"/><stop offset="0.258" stop-color="#6c5cfd"/><stop offset="0.399" stop-color="#906ffe"/><stop offset="1" stop-color="#a62d74"/></linearGradient><linearGradient id="g462" gradientUnits="userSpaceOnUse" x1="133" x2="401"><stop offset="0" stop-color="#1e2ded"/><stop offset="0.257" stop-color="#6c5cfd"/><stop offset="0.396" stop-color="#8f6efe"/><stop offset="1" stop-color="#a52c75"/></linearGradient><linearGradient id="g463" gradientUnits="userSpaceOnUse" x1="133" x2="399"><stop offset="0" stop-color="#1e2ced"/><stop offset="0.263" stop-color="#6d5bfd"/><stop offset="0.398" stop-color="#8f6dfe"/><stop offset="1" stop-color="#a42c76"/></linearGradient><linearGradient id="g464" gradientUnits="userSpaceOnUse" x1="133" x2="397"><stop offset="0" stop-color="#1e2ced"/><stop offset="0.261" stop-color="#6b5afd"/><stop offset="0.398" stop-color="#8d6cfe"/><stop offset="1" stop-color="#a32c78"/></linearGradient><linearGradient id="g465" gradientUnits="userSpaceOnUse" x1="134" x2="394"><stop offset="0" stop-color="#1f2bee"/><stop offset="0.262" stop-color="#6b59fd"/><stop offset="0.4" stop-color="#8d6afe"/><stop offset="1" stop-color="#a22b7a"/></linearGradient><linearGradient id="g466" gradientUnits="userSpaceOnUse" x1="134" x2="392"><stop offset="0" stop-color="#1f2bee"/><stop offset="0.26" stop-color="#6a58fd"/><stop offset="0.399" stop-color="#8c69fe"/><stop offset="1" stop-color="#a12b7b"/></linearGradient><linearGradient id="g467" gradientUnits="userSpaceOnUse" x1="135" x2="390"><stop offset="0" stop-color="#1f2aef"/><stop offset="0.259" stop-color="#6957fd"/><stop offset="0.4" stop-color="#8b68fe"/><stop offset="1" stop-color="#a02a7c"/></linearGradient><linearGradient id="g468" gradientUnits="userSpaceOnUse" x1="135" x2="388"><stop offset="0" stop-color="#1f2aef"/><stop offset="0.257" stop-color="#6856fd"/><stop offset="0.399" stop-color="#8a67fe"/><stop offset="1" stop-color="#9f2a7d"/></linearGradient><linearGradient id="g469" gradientUnits="userSpaceOnUse" x1="135" x2="386"><stop offset="0" stop-color="#1f29ef"/><stop offset="0.255" stop-color="#6754fd"/><stop offset="0.402" stop-color="#8966fe"/><stop offset="1" stop-color="#9e297f"/></linearGradient><linearGradient id="g470" gradientUnits="userSpaceOnUse" x1="136" x2="383"><stop offset="0" stop-color="#2029ef"/><stop offset="0.251" stop-color="#6553fd"/><stop offset="0.401" stop-color="#8865fe"/><stop offset="1" stop-color="#9c2981"/></linearGradient><linearGradient id="g471" gradientUnits="userSpaceOnUse" x1="136" x2="381"><stop offset="0" stop-color="#2028f0"/><stop offset="0.261" stop-color="#6753fe"/><stop offset="0.404" stop-color="#8764fe"/><stop offset="1" stop-color="#9b2882"/></linearGradient><linearGradient id="g472" gradientUnits="userSpaceOnUse" x1="136" x2="379"><stop offset="0" stop-color="#2028f0"/><stop offset="0.259" stop-color="#6652fd"/><stop offset="0.403" stop-color="#8662fe"/><stop offset="1" stop-color="#9a2883"/></linearGradient><linearGradient id="g473" gradientUnits="userSpaceOnUse" x1="137" x2="377"><stop offset="0" stop-color="#2027f0"/><stop offset="0.258" stop-color="#6551fe"/><stop offset="0.404" stop-color="#8661fe"/><stop offset="1" stop-color="#992785"/></linearGradient><linearGradient id="g474" gradientUnits="userSpaceOnUse" x1="137" x2="375"><stop offset="0" stop-color="#2027f0"/><stop offset="0.256" stop-color="#644ffe"/><stop offset="0.403" stop-color="#8560fe"/><stop offset="1" stop-color="#982786"/></linearGradient><linearGradient id="g475" gradientUnits="userSpaceOnUse" x1="138" x2="372"><stop offset="0" stop-color="#2127f1"/><stop offset="0.252" stop-color="#624efd"/><stop offset="0.406" stop-color="#845ffe"/><stop offset="1" stop-color="#972788"/></linearGradient><linearGradient id="g476" gradientUnits="userSpaceOnUse" x1="138" x2="370"><stop offset="0" stop-color="#2126f1"/><stop offset="0.254" stop-color="#624dfe"/><stop offset="0.405" stop-color="#835efe"/><stop offset="1" stop-color="#962689"/></linearGradient><linearGradient id="g477" gradientUnits="userSpaceOnUse" x1="138" x2="368"><stop offset="0" stop-color="#2126f1"/><stop offset="0.261" stop-color="#634dfe"/><stop offset="0.409" stop-color="#825dfe"/><stop offset="1" stop-color="#95268a"/></linearGradient><linearGradient id="g478" gradientUnits="userSpaceOnUse" x1="139" x2="366"><stop offset="0" stop-color="#2125f2"/><stop offset="0.247" stop-color="#5f4afd"/><stop offset="0.405" stop-color="#815bfe"/><stop offset="1" stop-color="#94258c"/></linearGradient><linearGradient id="g479" gradientUnits="userSpaceOnUse" x1="139" x2="363"><stop offset="0" stop-color="#2125f2"/><stop offset="0.259" stop-color="#614bfe"/><stop offset="0.411" stop-color="#805afe"/><stop offset="1" stop-color="#92258e"/></linearGradient><linearGradient id="g480" gradientUnits="userSpaceOnUse" x1="140" x2="361"><stop offset="0" stop-color="#2224f2"/><stop offset="0.253" stop-color="#6049fe"/><stop offset="0.407" stop-color="#7f59fe"/><stop offset="1" stop-color="#91248f"/></linearGradient><linearGradient id="g481" gradientUnits="userSpaceOnUse" x1="140" x2="359"><stop offset="0" stop-color="#2224f2"/><stop offset="0.251" stop-color="#5e48fe"/><stop offset="0.411" stop-color="#7f58fe"/><stop offset="1" stop-color="#902490"/></linearGradient><linearGradient id="g482" gradientUnits="userSpaceOnUse" x1="140" x2="357"><stop offset="0" stop-color="#2223f3"/><stop offset="0.253" stop-color="#5e47fe"/><stop offset="0.41" stop-color="#7e57fe"/><stop offset="1" stop-color="#8f2392"/></linearGradient><linearGradient id="g483" gradientUnits="userSpaceOnUse" x1="141" x2="355"><stop offset="0" stop-color="#2223f3"/><stop offset="0.248" stop-color="#5d46fe"/><stop offset="0.411" stop-color="#7d56fe"/><stop offset="1" stop-color="#8e2393"/></linearGradient><linearGradient id="g484" gradientUnits="userSpaceOnUse" x1="141" x2="352"><stop offset="0" stop-color="#2222f3"/><stop offset="0.246" stop-color="#5b44fe"/><stop offset="0.412" stop-color="#7c55fe"/><stop offset="1" stop-color="#8d2395"/></linearGradient><linearGradient id="g485" gradientUnits="userSpaceOnUse" x1="142" x2="350"><stop offset="0" stop-color="#2322f4"/><stop offset="0.255" stop-color="#5d45fe"/><stop offset="0.413" stop-color="#7b53fe"/><stop offset="1" stop-color="#8c2296"/></linearGradient><linearGradient id="g486" gradientUnits="userSpaceOnUse" x1="142" x2="348"><stop offset="0" stop-color="#2321f4"/><stop offset="0.252" stop-color="#5c43fe"/><stop offset="0.413" stop-color="#7a52fe"/><stop offset="1" stop-color="#8b2198"/></linearGradient><linearGradient id="g487" gradientUnits="userSpaceOnUse" x1="142" x2="346"><stop offset="0" stop-color="#2321f4"/><stop offset="0.255" stop-color="#5b42fe"/><stop offset="0.417" stop-color="#7951fe"/><stop offset="1" stop-color="#8a2199"/></linearGradient><linearGradient id="g488" gradientUnits="userSpaceOnUse" x1="143" x2="344"><stop offset="0" stop-color="#2321f4"/><stop offset="0.249" stop-color="#5a41fe"/><stop offset="0.413" stop-color="#7850fe"/><stop offset="1" stop-color="#89219a"/></linearGradient><linearGradient id="g489" gradientUnits="userSpaceOnUse" x1="143" x2="341"><stop offset="0" stop-color="#2320f5"/><stop offset="0.247" stop-color="#5940fe"/><stop offset="0.419" stop-color="#784ffe"/><stop offset="1" stop-color="#87209c"/></linearGradient><linearGradient id="g490" gradientUnits="userSpaceOnUse" x1="144" x2="339"><stop offset="0" stop-color="#2420f5"/><stop offset="0.246" stop-color="#583ffe"/><stop offset="0.415" stop-color="#764efe"/><stop offset="1" stop-color="#86209e"/></linearGradient><linearGradient id="g491" gradientUnits="userSpaceOnUse" x1="144" x2="337"><stop offset="0" stop-color="#241ff5"/><stop offset="0.254" stop-color="#593efe"/><stop offset="0.42" stop-color="#764dfe"/><stop offset="1" stop-color="#851f9f"/></linearGradient><linearGradient id="g492" gradientUnits="userSpaceOnUse" x1="144" x2="335"><stop offset="0" stop-color="#241ff5"/><stop offset="0.241" stop-color="#553cfe"/><stop offset="0.419" stop-color="#754bfe"/><stop offset="1" stop-color="#841fa0"/></linearGradient><linearGradient id="g493" gradientUnits="userSpaceOnUse" x1="145" x2="333"><stop offset="0" stop-color="#241ef6"/><stop offset="0.25" stop-color="#573cfe"/><stop offset="0.42" stop-color="#744afe"/><stop offset="1" stop-color="#831ea1"/></linearGradient><linearGradient id="g494" gradientUnits="userSpaceOnUse" x1="145" x2="330"><stop offset="0" stop-color="#241ef6"/><stop offset="0.249" stop-color="#563bfe"/><stop offset="0.422" stop-color="#7349fe"/><stop offset="1" stop-color="#821ea3"/></linearGradient><linearGradient id="g495" gradientUnits="userSpaceOnUse" x1="146" x2="328"><stop offset="0" stop-color="#251ef6"/><stop offset="0.242" stop-color="#5439fe"/><stop offset="0.423" stop-color="#7248fe"/><stop offset="1" stop-color="#811da5"/></linearGradient><linearGradient id="g496" gradientUnits="userSpaceOnUse" x1="146" x2="326"><stop offset="0" stop-color="#251df7"/><stop offset="0.244" stop-color="#5439fe"/><stop offset="0.422" stop-color="#7147fe"/><stop offset="1" stop-color="#7f1da6"/></linearGradient><linearGradient id="g497" gradientUnits="userSpaceOnUse" x1="147" x2="324"><stop offset="0" stop-color="#261df7"/><stop offset="0.249" stop-color="#5538ff"/><stop offset="0.424" stop-color="#7146fe"/><stop offset="1" stop-color="#7e1da7"/></linearGradient><linearGradient id="g498" gradientUnits="userSpaceOnUse" x1="147" x2="321"><stop offset="0" stop-color="#251cf7"/><stop offset="0.241" stop-color="#5236fe"/><stop offset="0.425" stop-color="#6f44fe"/><stop offset="1" stop-color="#7d1ca9"/></linearGradient><linearGradient id="g499" gradientUnits="userSpaceOnUse" x1="148" x2="319"><stop offset="0" stop-color="#261cf7"/><stop offset="0.246" stop-color="#5336ff"/><stop offset="0.427" stop-color="#6f43fe"/><stop offset="1" stop-color="#7c1cab"/></linearGradient><linearGradient id="g500" gradientUnits="userSpaceOnUse" x1="148" x2="317"><stop offset="0" stop-color="#261bf8"/><stop offset="0.243" stop-color="#5235ff"/><stop offset="0.426" stop-color="#6e42fe"/><stop offset="1" stop-color="#7b1bac"/></linearGradient><linearGradient id="g501" gradientUnits="userSpaceOnUse" x1="148" x2="315"><stop offset="0" stop-color="#261bf8"/><stop offset="0.24" stop-color="#5033fe"/><stop offset="0.431" stop-color="#6d41fe"/><stop offset="1" stop-color="#7a1bad"/></linearGradient><linearGradient id="g502" gradientUnits="userSpaceOnUse" x1="149" x2="313"><stop offset="0" stop-color="#261af8"/><stop offset="0.238" stop-color="#5032ff"/><stop offset="0.427" stop-color="#6c40fe"/><stop offset="1" stop-color="#791aaf"/></linearGradient><linearGradient id="g503" gradientUnits="userSpaceOnUse" x1="149" x2="310"><stop offset="0" stop-color="#261af8"/><stop offset="0.236" stop-color="#4f31ff"/><stop offset="0.435" stop-color="#6b3ffe"/><stop offset="1" stop-color="#781ab1"/></linearGradient><linearGradient id="g504" gradientUnits="userSpaceOnUse" x1="150" x2="308"><stop offset="0" stop-color="#2719f9"/><stop offset="0.234" stop-color="#4e30ff"/><stop offset="0.43" stop-color="#6a3efe"/><stop offset="1" stop-color="#7619b2"/></linearGradient><linearGradient id="g505" gradientUnits="userSpaceOnUse" x1="150" x2="306"><stop offset="0" stop-color="#2719f9"/><stop offset="0.237" stop-color="#4e2fff"/><stop offset="0.436" stop-color="#693cfe"/><stop offset="1" stop-color="#7519b3"/></linearGradient><linearGradient id="g506" gradientUnits="userSpaceOnUse" x1="151" x2="304"><stop offset="0" stop-color="#2719f9"/><stop offset="0.235" stop-color="#4d2eff"/><stop offset="0.431" stop-color="#683bfe"/><stop offset="1" stop-color="#7418b4"/></linearGradient><linearGradient id="g507" gradientUnits="userSpaceOnUse" x1="151" x2="302"><stop offset="0" stop-color="#2718f9"/><stop offset="0.232" stop-color="#4c2dff"/><stop offset="0.437" stop-color="#683afe"/><stop offset="1" stop-color="#7318b6"/></linearGradient><linearGradient id="g508" gradientUnits="userSpaceOnUse" x1="152" x2="299"><stop offset="0" stop-color="#2818fa"/><stop offset="0.231" stop-color="#4c2cff"/><stop offset="0.435" stop-color="#6739fe"/><stop offset="1" stop-color="#7218b8"/></linearGradient><linearGradient id="g509" gradientUnits="userSpaceOnUse" x1="152" x2="297"><stop offset="0" stop-color="#2817fa"/><stop offset="0.228" stop-color="#4a2bff"/><stop offset="0.441" stop-color="#6638fe"/><stop offset="1" stop-color="#7117b9"/></linearGradient><linearGradient id="g510" gradientUnits="userSpaceOnUse" x1="153" x2="295"><stop offset="0" stop-color="#2817fa"/><stop offset="0.225" stop-color="#4a2aff"/><stop offset="0.437" stop-color="#6537fe"/><stop offset="1" stop-color="#7017ba"/></linearGradient><linearGradient id="g511" gradientUnits="userSpaceOnUse" x1="153" x2="293"><stop offset="0" stop-color="#2816fa"/><stop offset="0.229" stop-color="#4a29ff"/><stop offset="0.443" stop-color="#6436fe"/><stop offset="1" stop-color="#6f16bc"/></linearGradient><linearGradient id="g512" gradientUnits="userSpaceOnUse" x1="154" x2="291"><stop offset="0" stop-color="#2916fb"/><stop offset="0.226" stop-color="#4928ff"/><stop offset="0.438" stop-color="#6334fe"/><stop offset="1" stop-color="#6e16bd"/></linearGradient><linearGradient id="g513" gradientUnits="userSpaceOnUse" x1="154" x2="288"><stop offset="0" stop-color="#2915fb"/><stop offset="0.224" stop-color="#4827ff"/><stop offset="0.448" stop-color="#6233fe"/><stop offset="1" stop-color="#6c15bf"/></linearGradient><linearGradient id="g514" gradientUnits="userSpaceOnUse" x1="155" x2="286"><stop offset="0" stop-color="#2915fb"/><stop offset="0.221" stop-color="#4726ff"/><stop offset="0.443" stop-color="#6132fe"/><stop offset="1" stop-color="#6b15c0"/></linearGradient><linearGradient id="g515" gradientUnits="userSpaceOnUse" x1="155" x2="284"><stop offset="0" stop-color="#2914fb"/><stop offset="0.225" stop-color="#4725ff"/><stop offset="0.45" stop-color="#6131fe"/><stop offset="1" stop-color="#6a14c2"/></linearGradient><linearGradient id="g516" gradientUnits="userSpaceOnUse" x1="156" x2="282"><stop offset="0" stop-color="#2a14fb"/><stop offset="0.214" stop-color="#4623ff"/><stop offset="0.444" stop-color="#5f30fe"/><stop offset="1" stop-color="#6914c3"/></linearGradient><linearGradient id="g517" gradientUnits="userSpaceOnUse" x1="156" x2="279"><stop offset="0" stop-color="#2a13fc"/><stop offset="0.22" stop-color="#4523ff"/><stop offset="0.455" stop-color="#5f2ffe"/><stop offset="1" stop-color="#6814c5"/></linearGradient><linearGradient id="g518" gradientUnits="userSpaceOnUse" x1="157" x2="277"><stop offset="0" stop-color="#2a13fc"/><stop offset="0.217" stop-color="#4522ff"/><stop offset="0.45" stop-color="#5e2dfe"/><stop offset="1" stop-color="#6713c6"/></linearGradient><linearGradient id="g519" gradientUnits="userSpaceOnUse" x1="158" x2="275"><stop offset="0" stop-color="#2b13fc"/><stop offset="0.214" stop-color="#4421ff"/><stop offset="0.453" stop-color="#5d2cfe"/><stop offset="1" stop-color="#6612c7"/></linearGradient><linearGradient id="g520" gradientUnits="userSpaceOnUse" x1="158" x2="273"><stop offset="0" stop-color="#2b12fc"/><stop offset="0.209" stop-color="#431fff"/><stop offset="0.452" stop-color="#5c2bfe"/><stop offset="1" stop-color="#6512c9"/></linearGradient><linearGradient id="g521" gradientUnits="userSpaceOnUse" x1="159" x2="271"><stop offset="0" stop-color="#2c12fd"/><stop offset="0.214" stop-color="#441fff"/><stop offset="0.455" stop-color="#5b2afe"/><stop offset="1" stop-color="#6412ca"/></linearGradient><linearGradient id="g522" gradientUnits="userSpaceOnUse" x1="159" x2="268"><stop offset="0" stop-color="#2b11fd"/><stop offset="0.211" stop-color="#421eff"/><stop offset="0.459" stop-color="#5a29fe"/><stop offset="1" stop-color="#6211cc"/></linearGradient><linearGradient id="g523" gradientUnits="userSpaceOnUse" x1="160" x2="266"><stop offset="0" stop-color="#2c11fd"/><stop offset="0.217" stop-color="#431dff"/><stop offset="0.462" stop-color="#5a28fe"/><stop offset="1" stop-color="#6111cd"/></linearGradient><linearGradient id="g524" gradientUnits="userSpaceOnUse" x1="160" x2="264"><stop offset="0" stop-color="#2c10fd"/><stop offset="0.462" stop-color="#5827fe"/><stop offset="1" stop-color="#6010cf"/></linearGradient><linearGradient id="g525" gradientUnits="userSpaceOnUse" x1="161" x2="262"><stop offset="0" stop-color="#2c10fd"/><stop offset="0.465" stop-color="#5825fe"/><stop offset="1" stop-color="#5f10d0"/></linearGradient><linearGradient id="g526" gradientUnits="userSpaceOnUse" x1="162" x2="260"><stop offset="0" stop-color="#2d0ffd"/><stop offset="0.459" stop-color="#5724fe"/><stop offset="1" stop-color="#5e0fd1"/></linearGradient><linearGradient id="g527" gradientUnits="userSpaceOnUse" x1="162" x2="257"><stop offset="0" stop-color="#2d0ffe"/><stop offset="0.474" stop-color="#5623fe"/><stop offset="1" stop-color="#5d0fd3"/></linearGradient><linearGradient id="g528" gradientUnits="userSpaceOnUse" x1="163" x2="255"><stop offset="0" stop-color="#2d0efe"/><stop offset="0.467" stop-color="#5522fe"/><stop offset="1" stop-color="#5c0ed5"/></linearGradient><linearGradient id="g529" gradientUnits="userSpaceOnUse" x1="164" x2="253"><stop offset="0" stop-color="#2e0efe"/><stop offset="0.472" stop-color="#5421fe"/><stop offset="1" stop-color="#5b0ed6"/></linearGradient><linearGradient id="g530" gradientUnits="userSpaceOnUse" x1="164" x2="251"><stop offset="0" stop-color="#2e0efe"/><stop offset="0.471" stop-color="#5320fe"/><stop offset="1" stop-color="#5a0ed7"/></linearGradient><linearGradient id="g531" gradientUnits="userSpaceOnUse" x1="165" x2="249"><stop offset="0" stop-color="#2e0dfe"/><stop offset="0.476" stop-color="#521ffe"/><stop offset="1" stop-color="#590dd8"/></linearGradient><linearGradient id="g532" gradientUnits="userSpaceOnUse" x1="166" x2="246"><stop offset="0" stop-color="#2f0dfe"/><stop offset="0.475" stop-color="#511dfe"/><stop offset="1" stop-color="#570ddb"/></linearGradient><linearGradient id="g533" gradientUnits="userSpaceOnUse" x1="167" x2="244"><stop offset="0" stop-color="#300cfe"/><stop offset="0.481" stop-color="#511cfe"/><stop offset="1" stop-color="#560cdc"/></linearGradient><linearGradient id="g534" gradientUnits="userSpaceOnUse" x1="167" x2="242"><stop offset="0" stop-color="#2f0cff"/><stop offset="0.48" stop-color="#501bfe"/><stop offset="1" stop-color="#550cdd"/></linearGradient><linearGradient id="g535" gradientUnits="userSpaceOnUse" x1="168" x2="240"><stop offset="0" stop-color="#300bff"/><stop offset="0.486" stop-color="#4f1afe"/><stop offset="1" stop-color="#540bde"/></linearGradient><linearGradient id="g536" gradientUnits="userSpaceOnUse" x1="169" x2="237"><stop offset="0" stop-color="#300bff"/><stop offset="0.485" stop-color="#4e19fe"/><stop offset="1" stop-color="#530be0"/></linearGradient><linearGradient id="g537" gradientUnits="userSpaceOnUse" x1="170" x2="235"><stop offset="0" stop-color="#310aff"/><stop offset="0.492" stop-color="#4d18fe"/><stop offset="1" stop-color="#520ae2"/></linearGradient><linearGradient id="g538" gradientUnits="userSpaceOnUse" x1="171" x2="233"><stop offset="0" stop-color="#310aff"/><stop offset="0.484" stop-color="#4c16fe"/><stop offset="1" stop-color="#510ae3"/></linearGradient><linearGradient id="g539" gradientUnits="userSpaceOnUse" x1="172" x2="231"><stop offset="0" stop-color="#3209ff"/><stop offset="0.492" stop-color="#4b15fe"/><stop offset="1" stop-color="#5009e4"/></linearGradient><linearGradient id="g540" gradientUnits="userSpaceOnUse" x1="173" x2="229"><stop offset="0" stop-color="#3309ff"/><stop offset="0.482" stop-color="#4a14fe"/><stop offset="1" stop-color="#4f09e6"/></linearGradient><linearGradient id="g541" gradientUnits="userSpaceOnUse" x1="174" x2="226"><stop offset="0" stop-color="#3309ff"/><stop offset="0.5" stop-color="#4a13fe"/><stop offset="1" stop-color="#4d09e8"/></linearGradient><linearGradient id="g542" gradientUnits="userSpaceOnUse" x1="175" x2="224"><stop offset="0" stop-color="#3408ff"/><stop offset="0.49" stop-color="#4912fe"/><stop offset="1" stop-color="#4c08e9"/></linearGradient><linearGradient id="g543" gradientUnits="userSpaceOnUse" x1="176" x2="222"><stop offset="0" stop-color="#3408ff"/><stop offset="0.5" stop-color="#4811fe"/><stop offset="1" stop-color="#4b08ea"/></linearGradient><linearGradient id="g544" gradientUnits="userSpaceOnUse" x1="177" x2="220"><stop offset="0" stop-color="#3407ff"/><stop offset="0.488" stop-color="#4710fe"/><stop offset="1" stop-color="#4a07ec"/></linearGradient><linearGradient id="g545" gradientUnits="userSpaceOnUse" x1="178" x2="218"><stop offset="0" stop-color="#3507ff"/><stop offset="0.5" stop-color="#460efe"/><stop offset="1" stop-color="#4907ed"/></linearGradient><linearGradient id="g546" gradientUnits="userSpaceOnUse" x1="179" x2="215"><stop offset="0" stop-color="#3506ff"/><stop offset="0.5" stop-color="#450dfe"/><stop offset="1" stop-color="#4806ef"/></linearGradient><linearGradient id="g547" gradientUnits="userSpaceOnUse" x1="180" x2="213"><stop offset="0" stop-color="#3606ff"/><stop offset="0.515" stop-color="#440cfe"/><stop offset="1" stop-color="#4706f0"/></linearGradient><linearGradient id="g548" gradientUnits="userSpaceOnUse" x1="181" x2="211"><stop offset="0" stop-color="#3605ff"/><stop offset="0.5" stop-color="#430bfe"/><stop offset="1" stop-color="#4605f1"/></linearGradient><linearGradient id="g549" gradientUnits="userSpaceOnUse" x1="183" x2="209"><stop offset="0" stop-color="#3805ff"/><stop offset="0.5" stop-color="#430afe"/><stop offset="1" stop-color="#4505f3"/></linearGradient><linearGradient id="g550" gradientUnits="userSpaceOnUse" x1="184" x2="207"><stop offset="0" stop-color="#3804ff"/><stop offset="0.478" stop-color="#4109fe"/><stop offset="1" stop-color="#4404f4"/></linearGradient><linearGradient id="g551" gradientUnits="userSpaceOnUse" x1="185" x2="204"><stop offset="0" stop-color="#3804ff"/><stop offset="0.526" stop-color="#4108fe"/><stop offset="1" stop-color="#4204f6"/></linearGradient><linearGradient id="g552" gradientUnits="userSpaceOnUse" x1="186" x2="202"><stop offset="0" stop-color="#3903fe"/><stop offset="0.5" stop-color="#4006fe"/><stop offset="1" stop-color="#4103f7"/></linearGradient><linearGradient id="g553" gradientUnits="userSpaceOnUse" x1="187" x2="200"><stop offset="0" stop-color="#3903fe"/><stop offset="0.538" stop-color="#3f05fe"/><stop offset="1" stop-color="#4003f9"/></linearGradient><linearGradient id="g554" gradientUnits="userSpaceOnUse" x1="188" x2="198"><stop offset="0" stop-color="#3a03fe"/><stop offset="0.5" stop-color="#3e04fe"/><stop offset="1" stop-color="#3f03fa"/></linearGradient><linearGradient id="g555" gradientUnits="userSpaceOnUse" x1="190" x2="195"><stop offset="0" stop-color="#3b02fe"/><stop offset="1" stop-color="#3e02fc"/></linearGradient><linearGradient id="g556" gradientUnits="userSpaceOnUse" x1="191" x2="193"><stop offset="0" stop-color="#3b02fe"/><stop offset="1" stop-color="#3d02fd"/></linearGradient></defs>
<g shape-rendering="crispEdges"><rect x="124" y="79" width="8" height="1" fill="url(#g0)"/><rect x="119" y="80" width="20" height="1" fill="url(#g1)"/><rect x="116" y="81" width="27" height="1" fill="url(#g2)"/><rect x="114" y="82" width="32" height="1" fill="url(#g3)"/><rect x="112" y="83" width="37" height="1" fill="url(#g4)"/><rect x="110" y="84" width="42" height="1" fill="url(#g5)"/><rect x="109" y="85" width="45" height="1" fill="url(#g6)"/><rect x="107" y="86" width="49" height="1" fill="url(#g7)"/><rect x="106" y="87" width="53" height="1" fill="url(#g8)"/><rect x="105" y="88" width="56" height="1" fill="url(#g9)"/><rect x="104" y="89" width="59" height="1" fill="url(#g10)"/><rect x="103" y="90" width="62" height="1" fill="url(#g11)"/><rect x="102" y="91" width="65" height="1" fill="url(#g12)"/><rect x="101" y="92" width="68" height="1" fill="url(#g13)"/><rect x="100" y="93" width="71" height="1" fill="url(#g14)"/><rect x="99" y="94" width="74" height="1" fill="url(#g15)"/><rect x="99" y="95" width="76" height="1" fill="url(#g16)"/><rect x="98" y="96" width="79" height="1" fill="url(#g17)"/><rect x="97" y="97" width="81" height="1" fill="url(#g18)"/><rect x="97" y="98" width="83" height="1" fill="url(#g19)"/><rect x="96" y="99" width="86" height="1" fill="url(#g20)"/><rect x="95" y="100" width="89" height="1" fill="url(#g21)"/><rect x="95" y="101" width="90" height="1" fill="url(#g22)"/><rect x="94" y="102" width="93" height="1" fill="url(#g23)"/><rect x="94" y="103" width="95" height="1" fill="url(#g24)"/><rect x="93" y="104" width="97" height="1" fill="url(#g25)"/><rect x="93" y="105" width="99" height="1" fill="url(#g26)"/><rect x="92" y="106" width="102" height="1" fill="url(#g27)"/><rect x="92" y="107" width="103" height="1" fill="url(#g28)"/><rect x="91" y="108" width="106" height="1" fill="url(#g29)"/><rect x="91" y="109" width="107" height="1" fill="url(#g30)"/><rect x="91" y="110" width="109" height="1" fill="url(#g31)"/><rect x="90" y="111" width="111" height="1" fill="url(#g32)"/><rect x="90" y="112" width="113" height="1" fill="url(#g33)"/><rect x="89" y="113" width="115" height="1" fill="url(#g34)"/><rect x="89" y="114" width="117" height="1" fill="url(#g35)"/><rect x="88" y="115" width="119" height="1" fill="url(#g36)"/><rect x="88" y="116" width="121" height="1" fill="url(#g37)"/><rect x="88" y="117" width="122" height="1" fill="url(#g38)"/><rect x="87" y="118" width="125" height="1" fill="url(#g39)"/><rect x="87" y="119" width="126" height="1" fill="url(#g40)"/><rect x="87" y="120" width="128" height="1" fill="url(#g41)"/><rect x="86" y="121" width="130" height="1" fill="url(#g42)"/><rect x="86" y="122" width="131" height="1" fill="url(#g43)"/><rect x="86" y="123" width="133" height="1" fill="url(#g44)"/><rect x="85" y="124" width="135" height="1" fill="url(#g45)"/><rect x="85" y="125" width="137" height="1" fill="url(#g46)"/><rect x="85" y="126" width="138" height="1" fill="url(#g47)"/><rect x="85" y="127" width="139" height="1" fill="url(#g48)"/><rect x="84" y="128" width="142" height="1" fill="url(#g49)"/><rect x="84" y="129" width="143" height="1" fill="url(#g50)"/><rect x="84" y="130" width="144" height="1" fill="url(#g51)"/><rect x="84" y="131" width="145" height="1" fill="url(#g52)"/><rect x="83" y="132" width="148" height="1" fill="url(#g53)"/><rect x="83" y="133" width="149" height="1" fill="url(#g54)"/><rect x="83" y="134" width="150" height="1" fill="url(#g55)"/><rect x="83" y="135" width="152" height="1" fill="url(#g56)"/><rect x="82" y="136" width="154" height="1" fill="url(#g57)"/><rect x="82" y="137" width="155" height="1" fill="url(#g58)"/><rect x="82" y="138" width="156" height="1" fill="url(#g59)"/><rect x="82" y="139" width="158" height="1" fill="url(#g60)"/><rect x="82" y="140" width="159" height="1" fill="url(#g61)"/><rect x="81" y="141" width="161" height="1" fill="url(#g62)"/><rect x="81" y="142" width="162" height="1" fill="url(#g63)"/><rect x="81" y="143" width="164" height="1" fill="url(#g64)"/><rect x="81" y="144" width="165" height="1" fill="url(#g65)"/><rect x="81" y="145" width="166" height="1" fill="url(#g66)"/><rect x="80" y="146" width="168" height="1" fill="url(#g67)"/><rect x="80" y="147" width="170" height="1" fill="url(#g68)"/><rect x="80" y="148" width="171" height="1" fill="url(#g69)"/><rect x="80" y="149" width="172" height="1" fill="url(#g70)"/><rect x="80" y="150" width="173" height="1" fill="url(#g71)"/><rect x="80" y="151" width="174" height="1" fill="url(#g72)"/><rect x="79" y="152" width="177" height="1" fill="url(#g73)"/><rect x="79" y="153" width="178" height="1" fill="url(#g74)"/><rect x="79" y="154" width="179" height="1" fill="url(#g75)"/><rect x="79" y="155" width="180" height="1" fill="url(#g76)"/><rect x="79" y="156" width="181" height="1" fill="url(#g77)"/><rect x="79" y="157" width="183" height="1" fill="url(#g78)"/><rect x="79" y="158" width="184" height="1" fill="url(#g79)"/><rect x="78" y="159" width="186" height="1" fill="url(#g80)"/><rect x="78" y="160" width="187" height="1" fill="url(#g81)"/><rect x="78" y="161" width="188" height="1" fill="url(#g82)"/><rect x="78" y="162" width="189" height="1" fill="url(#g83)"/><rect x="78" y="163" width="190" height="1" fill="url(#g84)"/><rect x="78" y="164" width="192" height="1" fill="url(#g85)"/><rect x="78" y="165" width="193" height="1" fill="url(#g86)"/><rect x="78" y="166" width="194" height="1" fill="url(#g87)"/><rect x="78" y="167" width="195" height="1" fill="url(#g88)"/><rect x="78" y="168" width="196" height="1" fill="url(#g89)"/><rect x="77" y="169" width="198" height="1" fill="url(#g90)"/><rect x="77" y="170" width="199" height="1" fill="url(#g91)"/><rect x="77" y="171" width="201" height="1" fill="url(#g92)"/><rect x="77" y="172" width="202" height="1" fill="url(#g93)"/><rect x="77" y="173" width="203" height="1" fill="url(#g94)"/><rect x="77" y="174" width="204" height="1" fill="url(#g95)"/><rect x="77" y="175" width="205" height="1" fill="url(#g96)"/><rect x="77" y="176" width="206" height="1" fill="url(#g97)"/><rect x="77" y="177" width="207" height="1" fill="url(#g98)"/><rect x="77" y="178" width="208" height="1" fill="url(#g99)"/><rect x="77" y="179" width="209" height="1" fill="url(#g100)"/><rect x="77" y="180" width="211" height="1" fill="url(#g101)"/><rect x="76" y="181" width="213" height="1" fill="url(#g102)"/><rect x="76" y="182" width="214" height="1" fill="url(#g103)"/><rect x="76" y="183" width="215" height="1" fill="url(#g104)"/><rect x="76" y="184" width="216" height="1" fill="url(#g105)"/><rect x="76" y="185" width="217" height="1" fill="url(#g106)"/><rect x="76" y="186" width="218" height="1" fill="url(#g107)"/><rect x="76" y="187" width="219" height="1" fill="url(#g108)"/><rect x="76" y="188" width="220" height="1" fill="url(#g109)"/><rect x="76" y="189" width="221" height="1" fill="url(#g110)"/><rect x="76" y="190" width="223" height="1" fill="url(#g111)"/><rect x="76" y="191" width="224" height="1" fill="url(#g112)"/><rect x="76" y="192" width="225" height="1" fill="url(#g113)"/><rect x="76" y="193" width="226" height="1" fill="url(#g114)"/><rect x="76" y="194" width="227" height="1" fill="url(#g115)"/><rect x="76" y="195" width="228" height="1" fill="url(#g116)"/><rect x="76" y="196" width="229" height="1" fill="url(#g117)"/><rect x="76" y="197" width="230" height="1" fill="url(#g118)"/><rect x="76" y="198" width="231" height="1" fill="url(#g119)"/><rect x="76" y="199" width="232" height="1" fill="url(#g120)"/><rect x="76" y="200" width="233" height="1" fill="url(#g121)"/><rect x="76" y="201" width="234" height="1" fill="url(#g122)"/><rect x="76" y="202" width="235" height="1" fill="url(#g123)"/><rect x="76" y="203" width="237" height="1" fill="url(#g124)"/><rect x="76" y="204" width="238" height="1" fill="url(#g125)"/><rect x="76" y="205" width="239" height="1" fill="url(#g126)"/><rect x="76" y="206" width="240" height="1" fill="url(#g127)"/><rect x="76" y="207" width="241" height="1" fill="url(#g128)"/><rect x="76" y="208" width="242" height="1" fill="url(#g129)"/><rect x="76" y="209" width="243" height="1" fill="url(#g130)"/><rect x="76" y="210" width="244" height="1" fill="url(#g131)"/><rect x="76" y="211" width="245" height="1" fill="url(#g132)"/><rect x="76" y="212" width="246" height="1" fill="url(#g133)"/><rect x="76" y="213" width="247" height="1" fill="url(#g134)"/><rect x="76" y="214" width="248" height="1" fill="url(#g135)"/><rect x="76" y="215" width="249" height="1" fill="url(#g136)"/><rect x="76" y="216" width="250" height="1" fill="url(#g137)"/><rect x="76" y="217" width="251" height="1" fill="url(#g138)"/><rect x="76" y="218" width="253" height="1" fill="url(#g139)"/><rect x="76" y="219" width="254" height="1" fill="url(#g140)"/><rect x="76" y="220" width="255" height="1" fill="url(#g141)"/><rect x="76" y="221" width="256" height="1" fill="url(#g142)"/><rect x="76" y="222" width="257" height="1" fill="url(#g143)"/><rect x="76" y="223" width="258" height="1" fill="url(#g144)"/><rect x="76" y="224" width="259" height="1" fill="url(#g145)"/><rect x="76" y="225" width="260" height="1" fill="url(#g146)"/><rect x="76" y="226" width="261" height="1" fill="url(#g147)"/><rect x="76" y="227" width="262" height="1" fill="url(#g148)"/><rect x="76" y="228" width="263" height="1" fill="url(#g149)"/><rect x="76" y="229" width="264" height="1" fill="url(#g150)"/><rect x="76" y="230" width="265" height="1" fill="url(#g151)"/><rect x="76" y="231" width="266" height="1" fill="url(#g152)"/><rect x="76" y="232" width="267" height="1" fill="url(#g153)"/><rect x="76" y="233" width="268" height="1" fill="url(#g154)"/><rect x="76" y="234" width="269" height="1" fill="url(#g155)"/><rect x="76" y="235" width="270" height="1" fill="url(#g156)"/><rect x="76" y="236" width="271" height="1" fill="url(#g157)"/><rect x="76" y="237" width="272" height="1" fill="url(#g158)"/><rect x="76" y="238" width="274" height="1" fill="url(#g159)"/><rect x="76" y="239" width="275" height="1" fill="url(#g160)"/><rect x="76" y="240" width="276" height="1" fill="url(#g161)"/><rect x="76" y="241" width="277" height="1" fill="url(#g162)"/><rect x="76" y="242" width="278" height="1" fill="url(#g163)"/><rect x="76" y="243" width="279" height="1" fill="url(#g164)"/><rect x="76" y="244" width="280" height="1" fill="url(#g165)"/><rect x="76" y="245" width="281" height="1" fill="url(#g166)"/><rect x="76" y="246" width="282" height="1" fill="url(#g167)"/><rect x="77" y="247" width="282" height="1" fill="url(#g168)"/><rect x="77" y="248" width="283" height="1" fill="url(#g169)"/><rect x="77" y="249" width="284" height="1" fill="url(#g170)"/><rect x="77" y="250" width="285" height="1" fill="url(#g171)"/><rect x="77" y="251" width="286" height="1" fill="url(#g172)"/><rect x="77" y="252" width="287" height="1" fill="url(#g173)"/><rect x="77" y="253" width="288" height="1" fill="url(#g174)"/><rect x="77" y="254" width="289" height="1" fill="url(#g175)"/><rect x="77" y="255" width="290" height="1" fill="url(#g176)"/><rect x="77" y="256" width="291" height="1" fill="url(#g177)"/><rect x="77" y="257" width="292" height="1" fill="url(#g178)"/><rect x="77" y="258" width="293" height="1" fill="url(#g179)"/><rect x="77" y="259" width="294" height="1" fill="url(#g180)"/><rect x="77" y="260" width="295" height="1" fill="url(#g181)"/><rect x="77" y="261" width="296" height="1" fill="url(#g182)"/><rect x="77" y="262" width="298" height="1" fill="url(#g183)"/><rect x="78" y="263" width="298" height="1" fill="url(#g184)"/><rect x="78" y="264" width="299" height="1" fill="url(#g185)"/><rect x="78" y="265" width="300" height="1" fill="url(#g186)"/><rect x="78" y="266" width="301" height="1" fill="url(#g187)"/><rect x="78" y="267" width="302" height="1" fill="url(#g188)"/><rect x="78" y="268" width="303" height="1" fill="url(#g189)"/><rect x="78" y="269" width="304" height="1" fill="url(#g190)"/><rect x="78" y="270" width="305" height="1" fill="url(#g191)"/><rect x="78" y="271" width="306" height="1" fill="url(#g192)"/><rect x="78" y="272" width="307" height="1" fill="url(#g193)"/><rect x="78" y="273" width="308" height="1" fill="url(#g194)"/><rect x="78" y="274" width="309" height="1" fill="url(#g195)"/><rect x="78" y="275" width="310" height="1" fill="url(#g196)"/><rect x="79" y="276" width="310" height="1" fill="url(#g197)"/><rect x="79" y="277" width="311" height="1" fill="url(#g198)"/><rect x="79" y="278" width="312" height="1" fill="url(#g199)"/><rect x="79" y="279" width="313" height="1" fill="url(#g200)"/><rect x="79" y="280" width="314" height="1" fill="url(#g201)"/><rect x="79" y="281" width="315" height="1" fill="url(#g202)"/><rect x="79" y="282" width="316" height="1" fill="url(#g203)"/><rect x="79" y="283" width="317" height="1" fill="url(#g204)"/><rect x="79" y="284" width="318" height="1" fill="url(#g205)"/><rect x="79" y="285" width="319" height="1" fill="url(#g206)"/><rect x="79" y="286" width="320" height="1" fill="url(#g207)"/><rect x="80" y="287" width="320" height="1" fill="url(#g208)"/><rect x="80" y="288" width="321" height="1" fill="url(#g209)"/><rect x="80" y="289" width="322" height="1" fill="url(#g210)"/><rect x="80" y="290" width="323" height="1" fill="url(#g211)"/><rect x="80" y="291" width="325" height="1" fill="url(#g212)"/><rect x="80" y="292" width="326" height="1" fill="url(#g213)"/><rect x="80" y="293" width="327" height="1" fill="url(#g214)"/><rect x="80" y="294" width="328" height="1" fill="url(#g215)"/><rect x="80" y="295" width="329" height="1" fill="url(#g216)"/><rect x="80" y="296" width="330" height="1" fill="url(#g217)"/><rect x="81" y="297" width="330" height="1" fill="url(#g218)"/><rect x="81" y="298" width="331" height="1" fill="url(#g219)"/><rect x="81" y="299" width="332" height="1" fill="url(#g220)"/><rect x="81" y="300" width="333" height="1" fill="url(#g221)"/><rect x="81" y="301" width="334" height="1" fill="url(#g222)"/><rect x="81" y="302" width="335" height="1" fill="url(#g223)"/><rect x="81" y="303" width="336" height="1" fill="url(#g224)"/><rect x="81" y="304" width="337" height="1" fill="url(#g225)"/><rect x="81" y="305" width="338" height="1" fill="url(#g226)"/><rect x="82" y="306" width="338" height="1" fill="url(#g227)"/><rect x="82" y="307" width="339" height="1" fill="url(#g228)"/><rect x="82" y="308" width="340" height="1" fill="url(#g229)"/><rect x="82" y="309" width="341" height="1" fill="url(#g230)"/><rect x="82" y="310" width="342" height="1" fill="url(#g231)"/><rect x="82" y="311" width="343" height="1" fill="url(#g232)"/><rect x="82" y="312" width="344" height="1" fill="url(#g233)"/><rect x="82" y="313" width="345" height="1" fill="url(#g234)"/><rect x="83" y="314" width="345" height="1" fill="url(#g235)"/><rect x="83" y="315" width="346" height="1" fill="url(#g236)"/><rect x="83" y="316" width="347" height="1" fill="url(#g237)"/><rect x="83" y="317" width="348" height="1" fill="url(#g238)"/><rect x="83" y="318" width="349" height="1" fill="url(#g239)"/><rect x="83" y="319" width="350" height="1" fill="url(#g240)"/><rect x="83" y="320" width="351" height="1" fill="url(#g241)"/><rect x="83" y="321" width="352" height="1" fill="url(#g242)"/><rect x="84" y="322" width="352" height="1" fill="url(#g243)"/><rect x="84" y="323" width="353" height="1" fill="url(#g244)"/><rect x="84" y="324" width="354" height="1" fill="url(#g245)"/><rect x="84" y="325" width="355" height="1" fill="url(#g246)"/><rect x="84" y="326" width="357" height="1" fill="url(#g247)"/><rect x="84" y="327" width="358" height="1" fill="url(#g248)"/><rect x="84" y="328" width="359" height="1" fill="url(#g249)"/><rect x="84" y="329" width="360" height="1" fill="url(#g250)"/><rect x="85" y="330" width="360" height="1" fill="url(#g251)"/><rect x="85" y="331" width="361" height="1" fill="url(#g252)"/><rect x="85" y="332" width="362" height="1" fill="url(#g253)"/><rect x="85" y="333" width="363" height="1" fill="url(#g254)"/><rect x="85" y="334" width="364" height="1" fill="url(#g255)"/><rect x="85" y="335" width="365" height="1" fill="url(#g256)"/><rect x="85" y="336" width="366" height="1" fill="url(#g257)"/><rect x="86" y="337" width="366" height="1" fill="url(#g258)"/><rect x="86" y="338" width="367" height="1" fill="url(#g259)"/><rect x="86" y="339" width="368" height="1" fill="url(#g260)"/><rect x="86" y="340" width="369" height="1" fill="url(#g261)"/><rect x="86" y="341" width="370" height="1" fill="url(#g262)"/><rect x="86" y="342" width="371" height="1" fill="url(#g263)"/><rect x="86" y="343" width="372" height="1" fill="url(#g264)"/><rect x="87" y="344" width="372" height="1" fill="url(#g265)"/><rect x="87" y="345" width="373" height="1" fill="url(#g266)"/><rect x="87" y="346" width="374" height="1" fill="url(#g267)"/><rect x="87" y="347" width="375" height="1" fill="url(#g268)"/><rect x="87" y="348" width="376" height="1" fill="url(#g269)"/><rect x="87" y="349" width="377" height="1" fill="url(#g270)"/><rect x="87" y="350" width="378" height="1" fill="url(#g271)"/><rect x="88" y="351" width="378" height="1" fill="url(#g272)"/><rect x="88" y="352" width="379" height="1" fill="url(#g273)"/><rect x="88" y="353" width="380" height="1" fill="url(#g274)"/><rect x="88" y="354" width="381" height="1" fill="url(#g275)"/><rect x="88" y="355" width="382" height="1" fill="url(#g276)"/><rect x="88" y="356" width="383" height="1" fill="url(#g277)"/><rect x="88" y="357" width="385" height="1" fill="url(#g278)"/><rect x="89" y="358" width="385" height="1" fill="url(#g279)"/><rect x="89" y="359" width="386" height="1" fill="url(#g280)"/><rect x="89" y="360" width="387" height="1" fill="url(#g281)"/><rect x="89" y="361" width="388" height="1" fill="url(#g282)"/><rect x="89" y="362" width="389" height="1" fill="url(#g283)"/><rect x="89" y="363" width="390" height="1" fill="url(#g284)"/><rect x="90" y="364" width="390" height="1" fill="url(#g285)"/><rect x="90" y="365" width="391" height="1" fill="url(#g286)"/><rect x="90" y="366" width="392" height="1" fill="url(#g287)"/><rect x="90" y="367" width="393" height="1" fill="url(#g288)"/><rect x="90" y="368" width="394" height="1" fill="url(#g289)"/><rect x="90" y="369" width="395" height="1" fill="url(#g290)"/><rect x="91" y="370" width="395" height="1" fill="url(#g291)"/><rect x="91" y="371" width="396" height="1" fill="url(#g292)"/><rect x="91" y="372" width="397" height="1" fill="url(#g293)"/><rect x="91" y="373" width="398" height="1" fill="url(#g294)"/><rect x="91" y="374" width="399" height="1" fill="url(#g295)"/><rect x="91" y="375" width="400" height="1" fill="url(#g296)"/><rect x="92" y="376" width="400" height="1" fill="url(#g297)"/><rect x="92" y="377" width="401" height="1" fill="url(#g298)"/><rect x="92" y="378" width="402" height="1" fill="url(#g299)"/><rect x="92" y="379" width="403" height="1" fill="url(#g300)"/><rect x="92" y="380" width="404" height="1" fill="url(#g301)"/><rect x="92" y="381" width="405" height="1" fill="url(#g302)"/><rect x="93" y="382" width="405" height="1" fill="url(#g303)"/><rect x="93" y="383" width="406" height="1" fill="url(#g304)"/><rect x="93" y="384" width="407" height="1" fill="url(#g305)"/><rect x="93" y="385" width="408" height="1" fill="url(#g306)"/><rect x="93" y="386" width="409" height="1" fill="url(#g307)"/><rect x="94" y="387" width="409" height="1" fill="url(#g308)"/><rect x="94" y="388" width="410" height="1" fill="url(#g309)"/><rect x="94" y="389" width="411" height="1" fill="url(#g310)"/><rect x="94" y="390" width="412" height="1" fill="url(#g311)"/><rect x="94" y="391" width="413" height="1" fill="url(#g312)"/><rect x="94" y="392" width="415" height="1" fill="url(#g313)"/><rect x="95" y="393" width="415" height="1" fill="url(#g314)"/><rect x="95" y="394" width="416" height="1" fill="url(#g315)"/><rect x="95" y="395" width="417" height="1" fill="url(#g316)"/><rect x="95" y="396" width="418" height="1" fill="url(#g317)"/><rect x="95" y="397" width="419" height="1" fill="url(#g318)"/><rect x="96" y="398" width="419" height="1" fill="url(#g319)"/><rect x="96" y="399" width="420" height="1" fill="url(#g320)"/><rect x="96" y="400" width="421" height="1" fill="url(#g321)"/><rect x="96" y="401" width="422" height="1" fill="url(#g322)"/><rect x="96" y="402" width="423" height="1" fill="url(#g323)"/><rect x="97" y="403" width="423" height="1" fill="url(#g324)"/><rect x="97" y="404" width="424" height="1" fill="url(#g325)"/><rect x="97" y="405" width="425" height="1" fill="url(#g326)"/><rect x="97" y="406" width="426" height="1" fill="url(#g327)"/><rect x="97" y="407" width="427" height="1" fill="url(#g328)"/><rect x="98" y="408" width="427" height="1" fill="url(#g329)"/><rect x="98" y="409" width="428" height="1" fill="url(#g330)"/><rect x="98" y="410" width="429" height="1" fill="url(#g331)"/><rect x="98" y="411" width="430" height="1" fill="url(#g332)"/><rect x="98" y="412" width="431" height="1" fill="url(#g333)"/><rect x="98" y="413" width="432" height="1" fill="url(#g334)"/><rect x="99" y="414" width="432" height="1" fill="url(#g335)"/><rect x="99" y="415" width="433" height="1" fill="url(#g336)"/><rect x="99" y="416" width="434" height="1" fill="url(#g337)"/><rect x="99" y="417" width="435" height="1" fill="url(#g338)"/><rect x="100" y="418" width="435" height="1" fill="url(#g339)"/><rect x="100" y="419" width="436" height="1" fill="url(#g340)"/><rect x="100" y="420" width="437" height="1" fill="url(#g341)"/><rect x="100" y="421" width="439" height="1" fill="url(#g342)"/><rect x="100" y="422" width="440" height="1" fill="url(#g343)"/><rect x="101" y="423" width="440" height="1" fill="url(#g344)"/><rect x="101" y="424" width="441" height="1" fill="url(#g345)"/><rect x="101" y="425" width="442" height="1" fill="url(#g346)"/><rect x="101" y="426" width="443" height="1" fill="url(#g347)"/><rect x="101" y="427" width="444" height="1" fill="url(#g348)"/><rect x="102" y="428" width="444" height="1" fill="url(#g349)"/><rect x="102" y="429" width="445" height="1" fill="url(#g350)"/><rect x="102" y="430" width="446" height="1" fill="url(#g351)"/><rect x="102" y="431" width="447" height="1" fill="url(#g352)"/><rect x="102" y="432" width="448" height="1" fill="url(#g353)"/><rect x="103" y="433" width="448" height="1" fill="url(#g354)"/><rect x="103" y="434" width="449" height="1" fill="url(#g355)"/><rect x="103" y="435" width="450" height="1" fill="url(#g356)"/><rect x="103" y="436" width="451" height="1" fill="url(#g357)"/><rect x="104" y="437" width="451" height="1" fill="url(#g358)"/><rect x="104" y="438" width="452" height="1" fill="url(#g359)"/><rect x="104" y="439" width="453" height="1" fill="url(#g360)"/><rect x="104" y="440" width="454" height="1" fill="url(#g361)"/><rect x="104" y="441" width="455" height="1" fill="url(#g362)"/><rect x="105" y="442" width="455" height="1" fill="url(#g363)"/><rect x="105" y="443" width="456" height="1" fill="url(#g364)"/><rect x="105" y="444" width="457" height="1" fill="url(#g365)"/><rect x="105" y="445" width="458" height="1" fill="url(#g366)"/><rect x="106" y="446" width="458" height="1" fill="url(#g367)"/><rect x="106" y="447" width="459" height="1" fill="url(#g368)"/><rect x="106" y="448" width="460" height="1" fill="url(#g369)"/><rect x="106" y="449" width="461" height="1" fill="url(#g370)"/><rect x="106" y="450" width="462" height="1" fill="url(#g371)"/><rect x="107" y="451" width="462" height="1" fill="url(#g372)"/><rect x="107" y="452" width="463" height="1" fill="url(#g373)"/><rect x="107" y="453" width="464" height="1" fill="url(#g374)"/><rect x="107" y="454" width="466" height="1" fill="url(#g375)"/><rect x="108" y="455" width="466" height="1" fill="url(#g376)"/><rect x="108" y="456" width="467" height="1" fill="url(#g377)"/><rect x="108" y="457" width="468" height="1" fill="url(#g378)"/><rect x="108" y="458" width="469" height="1" fill="url(#g379)"/><rect x="109" y="459" width="469" height="1" fill="url(#g380)"/><rect x="109" y="460" width="470" height="1" fill="url(#g381)"/><rect x="109" y="461" width="469" height="1" fill="url(#g382)"/><rect x="109" y="462" width="467" height="1" fill="url(#g383)"/><rect x="109" y="463" width="464" height="1" fill="url(#g384)"/><rect x="110" y="464" width="461" height="1" fill="url(#g385)"/><rect x="110" y="465" width="459" height="1" fill="url(#g386)"/><rect x="110" y="466" width="457" height="1" fill="url(#g387)"/><rect x="110" y="467" width="455" height="1" fill="url(#g388)"/><rect x="111" y="468" width="451" height="1" fill="url(#g389)"/><rect x="111" y="469" width="449" height="1" fill="url(#g390)"/><rect x="111" y="470" width="447" height="1" fill="url(#g391)"/><rect x="111" y="471" width="445" height="1" fill="url(#g392)"/><rect x="112" y="472" width="442" height="1" fill="url(#g393)"/><rect x="112" y="473" width="439" height="1" fill="url(#g394)"/><rect x="112" y="474" width="437" height="1" fill="url(#g395)"/><rect x="112" y="475" width="435" height="1" fill="url(#g396)"/><rect x="113" y="476" width="432" height="1" fill="url(#g397)"/><rect x="113" y="477" width="430" height="1" fill="url(#g398)"/><rect x="113" y="478" width="427" height="1" fill="url(#g399)"/><rect x="113" y="479" width="425" height="1" fill="url(#g400)"/><rect x="114" y="480" width="422" height="1" fill="url(#g401)"/><rect x="114" y="481" width="420" height="1" fill="url(#g402)"/><rect x="114" y="482" width="417" height="1" fill="url(#g403)"/><rect x="115" y="483" width="414" height="1" fill="url(#g404)"/><rect x="115" y="484" width="412" height="1" fill="url(#g405)"/><rect x="115" y="485" width="410" height="1" fill="url(#g406)"/><rect x="115" y="486" width="408" height="1" fill="url(#g407)"/><rect x="116" y="487" width="404" height="1" fill="url(#g408)"/><rect x="116" y="488" width="402" height="1" fill="url(#g409)"/><rect x="116" y="489" width="400" height="1" fill="url(#g410)"/><rect x="116" y="490" width="398" height="1" fill="url(#g411)"/><rect x="117" y="491" width="395" height="1" fill="url(#g412)"/><rect x="117" y="492" width="392" height="1" fill="url(#g413)"/><rect x="117" y="493" width="390" height="1" fill="url(#g414)"/><rect x="118" y="494" width="387" height="1" fill="url(#g415)"/><rect x="118" y="495" width="385" height="1" fill="url(#g416)"/><rect x="118" y="496" width="383" height="1" fill="url(#g417)"/><rect x="118" y="497" width="380" height="1" fill="url(#g418)"/><rect x="119" y="498" width="377" height="1" fill="url(#g419)"/><rect x="119" y="499" width="375" height="1" fill="url(#g420)"/><rect x="119" y="500" width="373" height="1" fill="url(#g421)"/><rect x="120" y="501" width="369" height="1" fill="url(#g422)"/><rect x="120" y="502" width="367" height="1" fill="url(#g423)"/><rect x="120" y="503" width="365" height="1" fill="url(#g424)"/><rect x="120" y="504" width="363" height="1" fill="url(#g425)"/><rect x="121" y="505" width="360" height="1" fill="url(#g426)"/><rect x="121" y="506" width="357" height="1" fill="url(#g427)"/><rect x="121" y="507" width="355" height="1" fill="url(#g428)"/><rect x="122" y="508" width="352" height="1" fill="url(#g429)"/><rect x="122" y="509" width="350" height="1" fill="url(#g430)"/><rect x="122" y="510" width="348" height="1" fill="url(#g431)"/><rect x="123" y="511" width="344" height="1" fill="url(#g432)"/><rect x="123" y="512" width="342" height="1" fill="url(#g433)"/><rect x="123" y="513" width="340" height="1" fill="url(#g434)"/><rect x="123" y="514" width="338" height="1" fill="url(#g435)"/><rect x="124" y="515" width="335" height="1" fill="url(#g436)"/><rect x="124" y="516" width="332" height="1" fill="url(#g437)"/><rect x="124" y="517" width="330" height="1" fill="url(#g438)"/><rect x="125" y="518" width="327" height="1" fill="url(#g439)"/><rect x="125" y="519" width="325" height="1" fill="url(#g440)"/><rect x="125" y="520" width="322" height="1" fill="url(#g441)"/><rect x="126" y="521" width="319" height="1" fill="url(#g442)"/><rect x="126" y="522" width="317" height="1" fill="url(#g443)"/><rect x="126" y="523" width="315" height="1" fill="url(#g444)"/><rect x="127" y="524" width="312" height="1" fill="url(#g445)"/><rect x="127" y="525" width="309" height="1" fill="url(#g446)"/><rect x="127" y="526" width="307" height="1" fill="url(#g447)"/><rect x="128" y="527" width="304" height="1" fill="url(#g448)"/><rect x="128" y="528" width="302" height="1" fill="url(#g449)"/><rect x="128" y="529" width="300" height="1" fill="url(#g450)"/><rect x="129" y="530" width="296" height="1" fill="url(#g451)"/><rect x="129" y="531" width="294" height="1" fill="url(#g452)"/><rect x="130" y="532" width="291" height="1" fill="url(#g453)"/><rect x="130" y="533" width="289" height="1" fill="url(#g454)"/><rect x="130" y="534" width="287" height="1" fill="url(#g455)"/><rect x="131" y="535" width="283" height="1" fill="url(#g456)"/><rect x="131" y="536" width="281" height="1" fill="url(#g457)"/><rect x="131" y="537" width="279" height="1" fill="url(#g458)"/><rect x="132" y="538" width="276" height="1" fill="url(#g459)"/><rect x="132" y="539" width="273" height="1" fill="url(#g460)"/><rect x="132" y="540" width="271" height="1" fill="url(#g461)"/><rect x="133" y="541" width="268" height="1" fill="url(#g462)"/><rect x="133" y="542" width="266" height="1" fill="url(#g463)"/><rect x="133" y="543" width="264" height="1" fill="url(#g464)"/><rect x="134" y="544" width="260" height="1" fill="url(#g465)"/><rect x="134" y="545" width="258" height="1" fill="url(#g466)"/><rect x="135" y="546" width="255" height="1" fill="url(#g467)"/><rect x="135" y="547" width="253" height="1" fill="url(#g468)"/><rect x="135" y="548" width="251" height="1" fill="url(#g469)"/><rect x="136" y="549" width="247" height="1" fill="url(#g470)"/><rect x="136" y="550" width="245" height="1" fill="url(#g471)"/><rect x="136" y="551" width="243" height="1" fill="url(#g472)"/><rect x="137" y="552" width="240" height="1" fill="url(#g473)"/><rect x="137" y="553" width="238" height="1" fill="url(#g474)"/><rect x="138" y="554" width="234" height="1" fill="url(#g475)"/><rect x="138" y="555" width="232" height="1" fill="url(#g476)"/><rect x="138" y="556" width="230" height="1" fill="url(#g477)"/><rect x="139" y="557" width="227" height="1" fill="url(#g478)"/><rect x="139" y="558" width="224" height="1" fill="url(#g479)"/><rect x="140" y="559" width="221" height="1" fill="url(#g480)"/><rect x="140" y="560" width="219" height="1" fill="url(#g481)"/><rect x="140" y="561" width="217" height="1" fill="url(#g482)"/><rect x="141" y="562" width="214" height="1" fill="url(#g483)"/><rect x="141" y="563" width="211" height="1" fill="url(#g484)"/><rect x="142" y="564" width="208" height="1" fill="url(#g485)"/><rect x="142" y="565" width="206" height="1" fill="url(#g486)"/><rect x="142" y="566" width="204" height="1" fill="url(#g487)"/><rect x="143" y="567" width="201" height="1" fill="url(#g488)"/><rect x="143" y="568" width="198" height="1" fill="url(#g489)"/><rect x="144" y="569" width="195" height="1" fill="url(#g490)"/><rect x="144" y="570" width="193" height="1" fill="url(#g491)"/><rect x="144" y="571" width="191" height="1" fill="url(#g492)"/><rect x="145" y="572" width="188" height="1" fill="url(#g493)"/><rect x="145" y="573" width="185" height="1" fill="url(#g494)"/><rect x="146" y="574" width="182" height="1" fill="url(#g495)"/><rect x="146" y="575" width="180" height="1" fill="url(#g496)"/><rect x="147" y="576" width="177" height="1" fill="url(#g497)"/><rect x="147" y="577" width="174" height="1" fill="url(#g498)"/><rect x="148" y="578" width="171" height="1" fill="url(#g499)"/><rect x="148" y="579" width="169" height="1" fill="url(#g500)"/><rect x="148" y="580" width="167" height="1" fill="url(#g501)"/><rect x="149" y="581" width="164" height="1" fill="url(#g502)"/><rect x="149" y="582" width="161" height="1" fill="url(#g503)"/><rect x="150" y="583" width="158" height="1" fill="url(#g504)"/><rect x="150" y="584" width="156" height="1" fill="url(#g505)"/><rect x="151" y="585" width="153" height="1" fill="url(#g506)"/><rect x="151" y="586" width="151" height="1" fill="url(#g507)"/><rect x="152" y="587" width="147" height="1" fill="url(#g508)"/><rect x="152" y="588" width="145" height="1" fill="url(#g509)"/><rect x="153" y="589" width="142" height="1" fill="url(#g510)"/><rect x="153" y="590" width="140" height="1" fill="url(#g511)"/><rect x="154" y="591" width="137" height="1" fill="url(#g512)"/><rect x="154" y="592" width="134" height="1" fill="url(#g513)"/><rect x="155" y="593" width="131" height="1" fill="url(#g514)"/><rect x="155" y="594" width="129" height="1" fill="url(#g515)"/><rect x="156" y="595" width="126" height="1" fill="url(#g516)"/><rect x="156" y="596" width="123" height="1" fill="url(#g517)"/><rect x="157" y="597" width="120" height="1" fill="url(#g518)"/><rect x="158" y="598" width="117" height="1" fill="url(#g519)"/><rect x="158" y="599" width="115" height="1" fill="url(#g520)"/><rect x="159" y="600" width="112" height="1" fill="url(#g521)"/><rect x="159" y="601" width="109" height="1" fill="url(#g522)"/><rect x="160" y="602" width="106" height="1" fill="url(#g523)"/><rect x="160" y="603" width="104" height="1" fill="url(#g524)"/><rect x="161" y="604" width="101" height="1" fill="url(#g525)"/><rect x="162" y="605" width="98" height="1" fill="url(#g526)"/><rect x="162" y="606" width="95" height="1" fill="url(#g527)"/><rect x="163" y="607" width="92" height="1" fill="url(#g528)"/><rect x="164" y="608" width="89" height="1" fill="url(#g529)"/><rect x="164" y="609" width="87" height="1" fill="url(#g530)"/><rect x="165" y="610" width="84" height="1" fill="url(#g531)"/><rect x="166" y="611" width="80" height="1" fill="url(#g532)"/><rect x="167" y="612" width="77" height="1" fill="url(#g533)"/><rect x="167" y="613" width="75" height="1" fill="url(#g534)"/><rect x="168" y="614" width="72" height="1" fill="url(#g535)"/><rect x="169" y="615" width="68" height="1" fill="url(#g536)"/><rect x="170" y="616" width="65" height="1" fill="url(#g537)"/><rect x="171" y="617" width="62" height="1" fill="url(#g538)"/><rect x="172" y="618" width="59" height="1" fill="url(#g539)"/><rect x="173" y="619" width="56" height="1" fill="url(#g540)"/><rect x="174" y="620" width="52" height="1" fill="url(#g541)"/><rect x="175" y="621" width="49" height="1" fill="url(#g542)"/><rect x="176" y="622" width="46" height="1" fill="url(#g543)"/><rect x="177" y="623" width="43" height="1" fill="url(#g544)"/><rect x="178" y="624" width="40" height="1" fill="url(#g545)"/><rect x="179" y="625" width="36" height="1" fill="url(#g546)"/><rect x="180" y="626" width="33" height="1" fill="url(#g547)"/><rect x="181" y="627" width="30" height="1" fill="url(#g548)"/><rect x="183" y="628" width="26" height="1" fill="url(#g549)"/><rect x="184" y="629" width="23" height="1" fill="url(#g550)"/><rect x="185" y="630" width="19" height="1" fill="url(#g551)"/><rect x="186" y="631" width="16" height="1" fill="url(#g552)"/><rect x="187" y="632" width="13" height="1" fill="url(#g553)"/><rect x="188" y="633" width="10" height="1" fill="url(#g554)"/><rect x="190" y="634" width="5" height="1" fill="url(#g555)"/><rect x="191" y="635" width="2" height="1" fill="url(#g556)"/></g>
<rect x="185" y="625" width="1" height="1" fill="#7a6cf8"/>
<path d="M123.0 79.5h3M124.5 78.0v3" stroke="#74748a" stroke-width="1" fill="none" shape-rendering="crispEdges"/><text x="130.0" y="84" class="lb" textLength="31.4" lengthAdjust="spacingAndGlyphs" fill="#808080">520nm</text><path d="M179.0 98.5h3M180.5 97.0v3" stroke="#74748a" stroke-width="1" fill="none" shape-rendering="crispEdges"/><text x="186.0" y="103" class="lb" textLength="31.4" lengthAdjust="spacingAndGlyphs" fill="#808080">530nm</text><path d="M230.0 133.5h3M231.5 132.0v3" stroke="#74748a" stroke-width="1" fill="none" shape-rendering="crispEdges"/><text x="237.0" y="138" class="lb" textLength="31.4" lengthAdjust="spacingAndGlyphs" fill="#808080">540nm</text><path d="M280.0 174.5h3M281.5 173.0v3" stroke="#74748a" stroke-width="1" fill="none" shape-rendering="crispEdges"/><text x="287.0" y="179" class="lb" textLength="31.4" lengthAdjust="spacingAndGlyphs" fill="#808080">550nm</text><path d="M329.0 220.5h3M330.5 219.0v3" stroke="#74748a" stroke-width="1" fill="none" shape-rendering="crispEdges"/><text x="336.0" y="225" class="lb" textLength="31.4" lengthAdjust="spacingAndGlyphs" fill="#808080">560nm</text><path d="M378.0 267.5h3M379.5 266.0v3" stroke="#74748a" stroke-width="1" fill="none" shape-rendering="crispEdges"/><text x="385.0" y="272" class="lb" textLength="31.4" lengthAdjust="spacingAndGlyphs" fill="#808080">570nm</text><path d="M425.0 312.5h3M426.5 311.0v3" stroke="#74748a" stroke-width="1" fill="none" shape-rendering="crispEdges"/><text x="432.0" y="317" class="lb" textLength="31.4" lengthAdjust="spacingAndGlyphs" fill="#808080">580nm</text><path d="M468.0 354.5h3M469.5 353.0v3" stroke="#74748a" stroke-width="1" fill="none" shape-rendering="crispEdges"/><text x="475.0" y="359" class="lb" textLength="31.4" lengthAdjust="spacingAndGlyphs" fill="#808080">590nm</text><path d="M504.0 389.5h3M505.5 388.0v3" stroke="#74748a" stroke-width="1" fill="none" shape-rendering="crispEdges"/><text x="511.0" y="394" class="lb" textLength="31.4" lengthAdjust="spacingAndGlyphs" fill="#808080">600nm</text><path d="M531.0 415.5h3M532.5 414.0v3" stroke="#74748a" stroke-width="1" fill="none" shape-rendering="crispEdges"/><text x="538.0" y="420" class="lb" textLength="31.4" lengthAdjust="spacingAndGlyphs" fill="#808080">610nm</text><path d="M548.0 432.5h3M549.5 431.0v3" stroke="#74748a" stroke-width="1" fill="none" shape-rendering="crispEdges"/><text x="555.0" y="437" class="lb" textLength="31.4" lengthAdjust="spacingAndGlyphs" fill="#808080">620nm</text><path d="M567.0 450.5h3M568.5 449.0v3" stroke="#74748a" stroke-width="1" fill="none" shape-rendering="crispEdges"/><text x="574.0" y="455" class="lb" textLength="31.4" lengthAdjust="spacingAndGlyphs" fill="#808080">640nm</text><path d="M578.0 461.5h3M579.5 460.0v3" stroke="#74748a" stroke-width="1" fill="none" shape-rendering="crispEdges"/><text x="585.0" y="466" class="lb" textLength="31.4" lengthAdjust="spacingAndGlyphs" fill="#808080">780nm</text><path d="M192.0 636.5h3M193.5 635.0v3" stroke="#74748a" stroke-width="1" fill="none" shape-rendering="crispEdges"/><text x="153.6" y="641" class="lb" textLength="31.4" lengthAdjust="spacingAndGlyphs" fill="#808080">380nm</text><path d="M180.0 627.5h3M181.5 626.0v3" stroke="#74748a" stroke-width="1" fill="none" shape-rendering="crispEdges"/><text x="141.6" y="632" class="lb" textLength="31.4" lengthAdjust="spacingAndGlyphs" fill="#808080">450nm</text><path d="M171.0 619.5h3M172.5 618.0v3" stroke="#74748a" stroke-width="1" fill="none" shape-rendering="crispEdges"/><text x="132.6" y="624" class="lb" textLength="31.4" lengthAdjust="spacingAndGlyphs" fill="#808080">460nm</text><path d="M157.0 600.5h3M158.5 599.0v3" stroke="#74748a" stroke-width="1" fill="none" shape-rendering="crispEdges"/><text x="118.6" y="605" class="lb" textLength="31.4" lengthAdjust="spacingAndGlyphs" fill="#808080">470nm</text><path d="M135.0 550.5h3M136.5 549.0v3" stroke="#74748a" stroke-width="1" fill="none" shape-rendering="crispEdges"/><text x="96.6" y="555" class="lb" textLength="31.4" lengthAdjust="spacingAndGlyphs" fill="#808080">480nm</text><path d="M103.0 441.5h3M104.5 440.0v3" stroke="#74748a" stroke-width="1" fill="none" shape-rendering="crispEdges"/><text x="64.6" y="446" class="lb" textLength="31.4" lengthAdjust="spacingAndGlyphs" fill="#808080">490nm</text><path d="M78.0 278.5h3M79.5 277.0v3" stroke="#74748a" stroke-width="1" fill="none" shape-rendering="crispEdges"/><text x="85.0" y="283" class="lb" textLength="31.4" lengthAdjust="spacingAndGlyphs" fill="#808080">500nm</text><path d="M82.0 136.5h3M83.5 135.0v3" stroke="#74748a" stroke-width="1" fill="none" shape-rendering="crispEdges"/><text x="89.0" y="141" class="lb" textLength="31.4" lengthAdjust="spacingAndGlyphs" fill="#808080">510nm</text><path d="M302.0 415.5h3M303.5 414.0v3" stroke="#74748a" stroke-width="1" fill="none" shape-rendering="crispEdges"/><text x="309" y="420" class="lb" textLength="75" lengthAdjust="spacingAndGlyphs" fill="#808080">CIE White Point</text>
<polyline fill="none" stroke="#707074" stroke-width="1" shape-rendering="crispEdges" points="549.7,433.1 546.3,429.9 542.7,426.5 539.0,423.0 535.1,419.4 531.0,415.7 526.7,411.9 522.2,408.0 517.6,404.1 512.8,400.2 507.8,396.2 502.7,392.4 497.3,388.6 491.8,384.9 486.2,381.3 480.3,377.9 474.3,374.8 468.0,371.9 461.7,369.3 455.1,367.0 448.4,365.1 441.6,363.5 434.7,362.4 427.7,361.6 420.6,361.3 413.5,361.4 406.3,361.9 399.2,362.8 392.1,364.0 385.1,365.6 378.1,367.6 371.3,369.9 364.7,372.4 358.2,375.2 351.9,378.1 345.8,381.3 339.9,384.5 334.2,387.9 328.8,391.3 323.6,394.8 318.6,398.4 313.9,401.9 309.4,405.3 305.2,408.8 301.1,412.2 297.3,415.5 293.7,418.7 290.4,421.8 287.2,424.9 284.2,427.8 281.4,430.6 278.8,433.3 276.3,435.9 274.0,438.3 271.8,440.7 269.8,442.9 267.9,445.1 266.2,447.1 264.5,449.0 263.0,450.8 261.5,452.6 260.2,454.2 258.9,455.7 257.7,457.2 256.6,458.6 255.6,459.9 254.6,461.1 253.7,462.2 252.9,463.3 252.1,464.4 251.4,465.3 250.7,466.2 250.0,467.1 249.4,467.9 248.8,468.7 248.3,469.4 247.8,470.1 247.3,470.7 246.8,471.3 246.4,471.9 246.0,472.5 245.7,473.0 245.3,473.5 245.0,473.9 244.7,474.4 244.4,474.8 244.1,475.1 243.8,475.5 243.6,475.9 243.3,476.2"/>
<path d="M142.5 35V639M211.5 35V639M280.5 35V639M349.5 35V639M417.5 35V639M486.5 35V639M555.5 35V639M624.5 35V639M73 605.5H694M73 572.5H694M73 538.5H694M73 505.5H694M73 471.5H694M73 438.5H694M73 404.5H694M73 371.5H694M73 337.5H694M73 303.5H694M73 270.5H694M73 236.5H694M73 203.5H694M73 169.5H694M73 136.5H694M73 102.5H694M73 69.5H694" stroke="#9e9e00" stroke-width="1" fill="none" shape-rendering="crispEdges"/>
<path d="M73 371.5H694M375.5 35V639" stroke="#ff0000" stroke-width="1" fill="none" shape-rendering="crispEdges"/>
<path d="M375.7 368.6l3.2 3.2l-3.2 3.2l-3.2-3.2z" fill="#ff0000"/>
</g>
<clipPath id="all"><rect x="0" y="0" width="733" height="687"/></clipPath><g clip-path="url(#all)" stroke="#000" stroke-width="0.22">
<text x="4.5" y="12.6" textLength="66.3" lengthAdjust="spacingAndGlyphs" style="font-size:12.4px">Chromaticity</text>
<text x="30.8" y="643" textLength="32.3" lengthAdjust="spacingAndGlyphs">0.0000</text>
<text x="55.8" y="657" textLength="32.3" lengthAdjust="spacingAndGlyphs">0.0000</text>
<text x="30.8" y="576" textLength="32.3" lengthAdjust="spacingAndGlyphs">0.1000</text>
<text x="124.8" y="657" textLength="32.3" lengthAdjust="spacingAndGlyphs">0.1000</text>
<text x="30.8" y="509" textLength="32.3" lengthAdjust="spacingAndGlyphs">0.2000</text>
<text x="193.8" y="657" textLength="32.3" lengthAdjust="spacingAndGlyphs">0.2000</text>
<text x="30.8" y="442" textLength="32.3" lengthAdjust="spacingAndGlyphs">0.3000</text>
<text x="262.8" y="657" textLength="32.3" lengthAdjust="spacingAndGlyphs">0.3000</text>
<text x="30.8" y="375" textLength="32.3" lengthAdjust="spacingAndGlyphs">0.4000</text>
<text x="331.8" y="657" textLength="32.3" lengthAdjust="spacingAndGlyphs">0.4000</text>
<text x="30.8" y="307" textLength="32.3" lengthAdjust="spacingAndGlyphs">0.5000</text>
<text x="399.8" y="657" textLength="32.3" lengthAdjust="spacingAndGlyphs">0.5000</text>
<text x="30.8" y="240" textLength="32.3" lengthAdjust="spacingAndGlyphs">0.6000</text>
<text x="468.8" y="657" textLength="32.3" lengthAdjust="spacingAndGlyphs">0.6000</text>
<text x="30.8" y="173" textLength="32.3" lengthAdjust="spacingAndGlyphs">0.7000</text>
<text x="537.8" y="657" textLength="32.3" lengthAdjust="spacingAndGlyphs">0.7000</text>
<text x="30.8" y="106" textLength="32.3" lengthAdjust="spacingAndGlyphs">0.8000</text>
<text x="606.8" y="657" textLength="32.3" lengthAdjust="spacingAndGlyphs">0.8000</text>
<text x="30.8" y="39" textLength="32.3" lengthAdjust="spacingAndGlyphs">0.9000</text>
<text x="675.8" y="657" textLength="32.3" lengthAdjust="spacingAndGlyphs">0.9000</text>
<path d="M66 639.5h5M73.5 641v5M66 572.5h5M142.5 641v5M66 505.5h5M211.5 641v5M66 438.5h5M280.5 641v5M66 371.5h5M349.5 641v5M66 303.5h5M417.5 641v5M66 236.5h5M486.5 641v5M66 169.5h5M555.5 641v5M66 102.5h5M624.5 641v5M66 35.5h5M693.5 641v5" stroke="#000" stroke-width="1" fill="none" shape-rendering="crispEdges"/>
<text x="383.5" y="676" text-anchor="middle" style="font-size:12px">x</text>
<text transform="translate(23.5,339.5) rotate(-90)" text-anchor="middle" style="font-size:11.3px">y</text>
</g></svg></body></html>
